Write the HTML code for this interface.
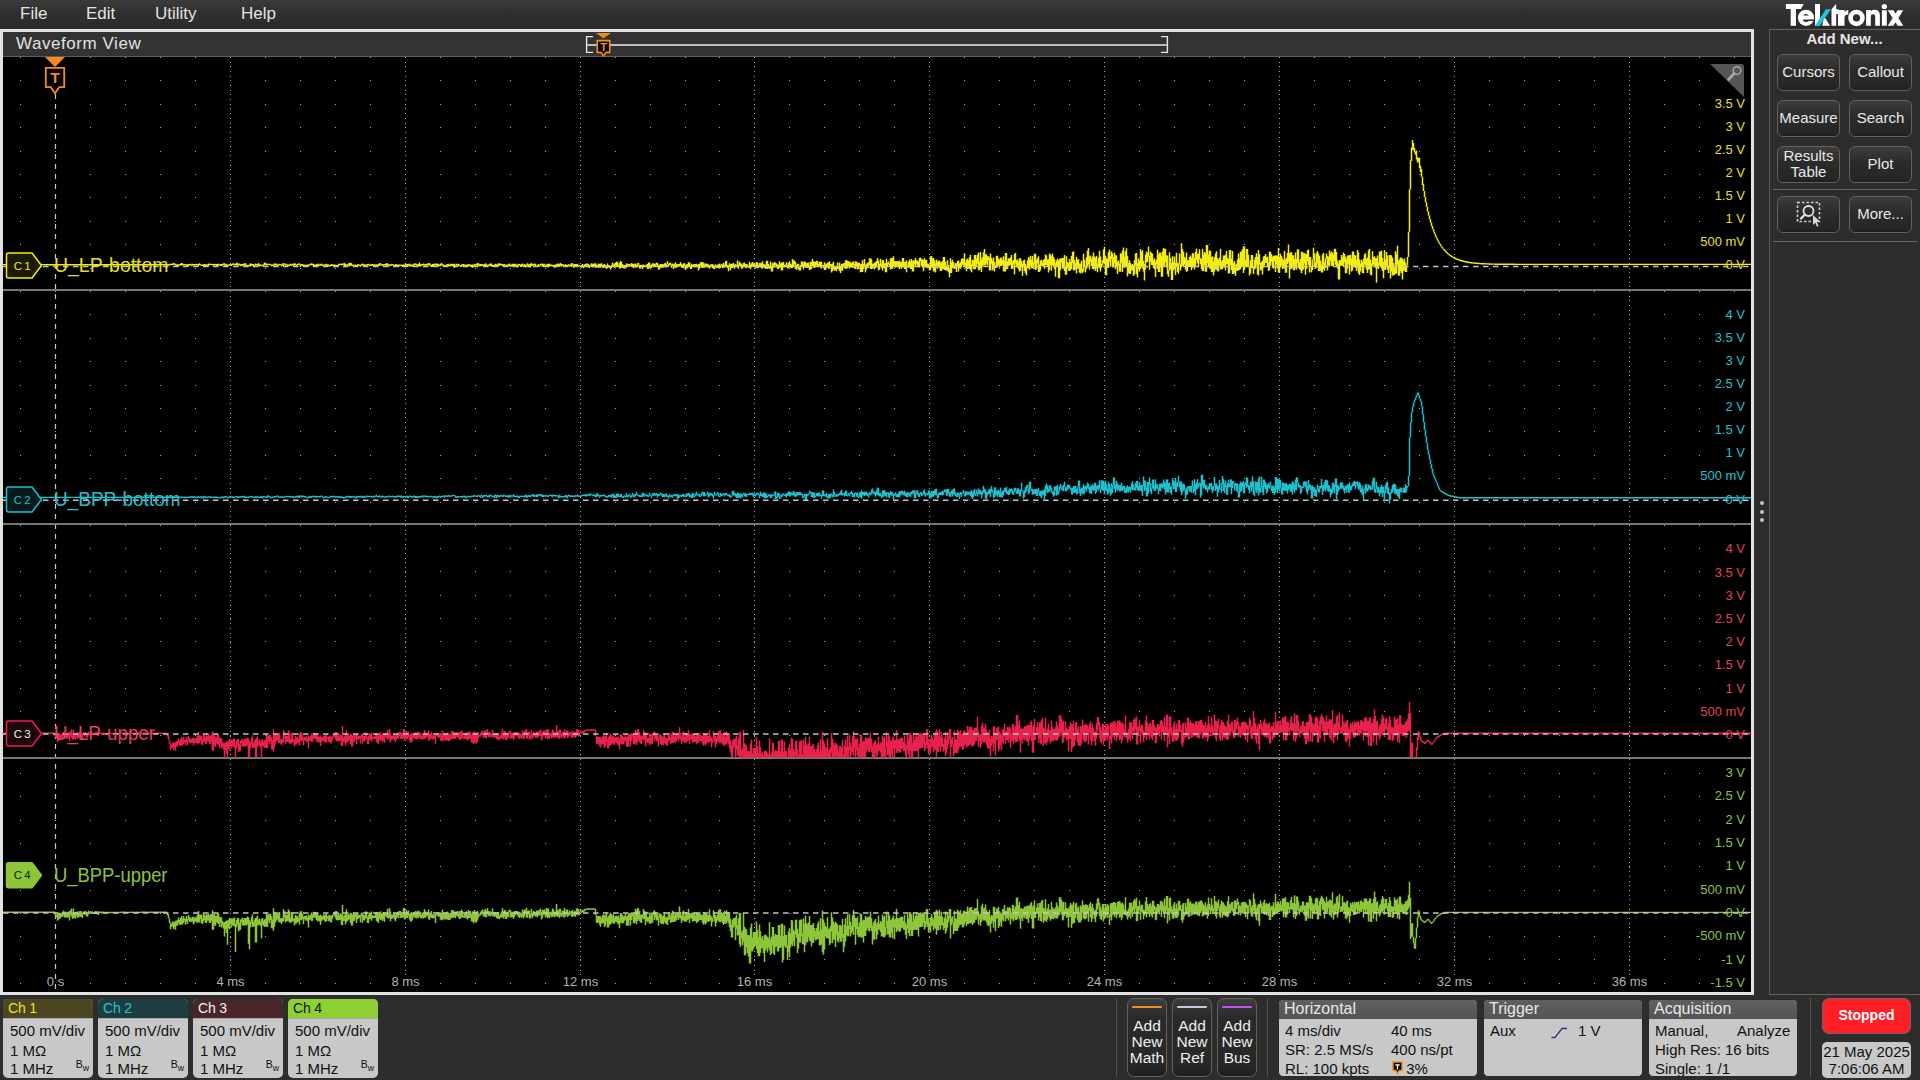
<!DOCTYPE html>
<html><head><meta charset="utf-8">
<style>
*{margin:0;padding:0;box-sizing:border-box}
html,body{width:1920px;height:1080px;overflow:hidden;background:#2d2d2d;font-family:"Liberation Sans",sans-serif}
.a{position:absolute}
.menu{color:#e4e4e4;font-size:17px;top:4px}
.frame{left:0;top:29px;width:1754px;height:966px;border:3px solid #e2e2e2;background:#333}
.hdr{left:3px;top:32px;width:1748px;height:25px;background:#333;border-bottom:1px solid #5e6064}
.title{left:16px;top:34px;color:#e0e0e0;font-size:17px;letter-spacing:0.55px}
.rpanel{left:1769px;top:29px;width:160px;height:966px;border:1px solid #6a625a;border-left-color:#5a5a5a;background:#2d2d2d}
.btn{width:63px;height:37px;border:1px solid #6a5e56;border-radius:6px;background:linear-gradient(#3c3d3f,#2c2c2c 40%,#262626 90%,#1e1e1e);color:#e8e8e8;font-size:15px;text-align:center;display:flex;align-items:center;justify-content:center;line-height:16px;padding-bottom:2px}
.sep{height:1px;background:#6e625a}
.ch{top:999px;width:90px;height:79px;border-radius:5px;background:#c8c8c8;overflow:hidden}
.chh{height:20px;padding-left:5px;font-size:14px;line-height:18px;letter-spacing:-0.2px;border-bottom:1px solid #a8a8a8}
.chb{color:#111;font-size:14.5px;padding-left:7px;line-height:19px;padding-top:0px}
.bw{position:absolute;right:4px;bottom:5px;font-size:10.5px;color:#111;line-height:10px}
.addb{top:998px;width:40px;height:79px;border:1px solid #6a5e56;border-radius:7px;background:linear-gradient(#3c3d3f,#2a2a2a 25%,#282828 85%,#1e1e1e);color:#eee;font-size:15.5px;line-height:16px;text-align:center}
.addb .bar{position:absolute;left:4px;right:4px;top:7px;height:2.2px;border-radius:1px}
.addb .t{position:absolute;left:-4px;right:-4px;top:19px}
.vsep{top:998px;width:1px;height:79px;background:#5a5048}
.pan{top:999px;height:78px;border-radius:5px;background:#c8c8c8;overflow:hidden;border:1px solid #2a2a2a}
.panh{height:18.5px;background:linear-gradient(#606062,#545456);color:#e8e8e8;font-size:16px;line-height:18px;padding-left:5px}
.panb{color:#111;font-size:15px;line-height:19px;position:relative}
</style></head><body>
<div class="a" style="left:0;top:0;width:1920px;height:29px;background:linear-gradient(#3b3b3b,#2f2f2f 45%,#2b2b2b)"></div>
<div class="a menu" style="left:20px">File</div>
<div class="a menu" style="left:86px">Edit</div>
<div class="a menu" style="left:155px">Utility</div>
<div class="a menu" style="left:241px">Help</div>

<div class="a frame"></div>
<div class="a hdr"></div>
<div class="a title">Waveform View</div>

<svg width="1920" height="1080" style="position:absolute;left:0;top:0"><rect x="3" y="57" width="1748" height="935" fill="#000"/><path d="M20 57h1v1h-1zM55 57h1v1h-1zM90 57h1v1h-1zM125 57h1v1h-1zM160 57h1v1h-1zM195 57h1v1h-1zM230 57h1v1h-1zM265 57h1v1h-1zM300 57h1v1h-1zM335 57h1v1h-1zM370 57h1v1h-1zM405 57h1v1h-1zM440 57h1v1h-1zM475 57h1v1h-1zM510 57h1v1h-1zM545 57h1v1h-1zM580 57h1v1h-1zM615 57h1v1h-1zM650 57h1v1h-1zM685 57h1v1h-1zM719 57h1v1h-1zM754 57h1v1h-1zM789 57h1v1h-1zM824 57h1v1h-1zM859 57h1v1h-1zM894 57h1v1h-1zM929 57h1v1h-1zM964 57h1v1h-1zM999 57h1v1h-1zM1034 57h1v1h-1zM1069 57h1v1h-1zM1104 57h1v1h-1zM1139 57h1v1h-1zM1174 57h1v1h-1zM1209 57h1v1h-1zM1244 57h1v1h-1zM1279 57h1v1h-1zM1314 57h1v1h-1zM1349 57h1v1h-1zM1384 57h1v1h-1zM1419 57h1v1h-1zM1454 57h1v1h-1zM1489 57h1v1h-1zM1524 57h1v1h-1zM1559 57h1v1h-1zM1594 57h1v1h-1zM1629 57h1v1h-1zM1664 57h1v1h-1zM1699 57h1v1h-1zM1734 57h1v1h-1zM20 80h1v1h-1zM55 80h1v1h-1zM90 80h1v1h-1zM125 80h1v1h-1zM160 80h1v1h-1zM195 80h1v1h-1zM230 80h1v1h-1zM265 80h1v1h-1zM300 80h1v1h-1zM335 80h1v1h-1zM370 80h1v1h-1zM405 80h1v1h-1zM440 80h1v1h-1zM475 80h1v1h-1zM510 80h1v1h-1zM545 80h1v1h-1zM580 80h1v1h-1zM615 80h1v1h-1zM650 80h1v1h-1zM685 80h1v1h-1zM719 80h1v1h-1zM754 80h1v1h-1zM789 80h1v1h-1zM824 80h1v1h-1zM859 80h1v1h-1zM894 80h1v1h-1zM929 80h1v1h-1zM964 80h1v1h-1zM999 80h1v1h-1zM1034 80h1v1h-1zM1069 80h1v1h-1zM1104 80h1v1h-1zM1139 80h1v1h-1zM1174 80h1v1h-1zM1209 80h1v1h-1zM1244 80h1v1h-1zM1279 80h1v1h-1zM1314 80h1v1h-1zM1349 80h1v1h-1zM1384 80h1v1h-1zM1419 80h1v1h-1zM1454 80h1v1h-1zM1489 80h1v1h-1zM1524 80h1v1h-1zM1559 80h1v1h-1zM1594 80h1v1h-1zM1629 80h1v1h-1zM1664 80h1v1h-1zM1699 80h1v1h-1zM20 104h1v1h-1zM55 104h1v1h-1zM90 104h1v1h-1zM125 104h1v1h-1zM160 104h1v1h-1zM195 104h1v1h-1zM230 104h1v1h-1zM265 104h1v1h-1zM300 104h1v1h-1zM335 104h1v1h-1zM370 104h1v1h-1zM405 104h1v1h-1zM440 104h1v1h-1zM475 104h1v1h-1zM510 104h1v1h-1zM545 104h1v1h-1zM580 104h1v1h-1zM615 104h1v1h-1zM650 104h1v1h-1zM685 104h1v1h-1zM719 104h1v1h-1zM754 104h1v1h-1zM789 104h1v1h-1zM824 104h1v1h-1zM859 104h1v1h-1zM894 104h1v1h-1zM929 104h1v1h-1zM964 104h1v1h-1zM999 104h1v1h-1zM1034 104h1v1h-1zM1069 104h1v1h-1zM1104 104h1v1h-1zM1139 104h1v1h-1zM1174 104h1v1h-1zM1209 104h1v1h-1zM1244 104h1v1h-1zM1279 104h1v1h-1zM1314 104h1v1h-1zM1349 104h1v1h-1zM1384 104h1v1h-1zM1419 104h1v1h-1zM1454 104h1v1h-1zM1489 104h1v1h-1zM1524 104h1v1h-1zM1559 104h1v1h-1zM1594 104h1v1h-1zM1629 104h1v1h-1zM1664 104h1v1h-1zM1699 104h1v1h-1zM20 127h1v1h-1zM55 127h1v1h-1zM90 127h1v1h-1zM125 127h1v1h-1zM160 127h1v1h-1zM195 127h1v1h-1zM230 127h1v1h-1zM265 127h1v1h-1zM300 127h1v1h-1zM335 127h1v1h-1zM370 127h1v1h-1zM405 127h1v1h-1zM440 127h1v1h-1zM475 127h1v1h-1zM510 127h1v1h-1zM545 127h1v1h-1zM580 127h1v1h-1zM615 127h1v1h-1zM650 127h1v1h-1zM685 127h1v1h-1zM719 127h1v1h-1zM754 127h1v1h-1zM789 127h1v1h-1zM824 127h1v1h-1zM859 127h1v1h-1zM894 127h1v1h-1zM929 127h1v1h-1zM964 127h1v1h-1zM999 127h1v1h-1zM1034 127h1v1h-1zM1069 127h1v1h-1zM1104 127h1v1h-1zM1139 127h1v1h-1zM1174 127h1v1h-1zM1209 127h1v1h-1zM1244 127h1v1h-1zM1279 127h1v1h-1zM1314 127h1v1h-1zM1349 127h1v1h-1zM1384 127h1v1h-1zM1419 127h1v1h-1zM1454 127h1v1h-1zM1489 127h1v1h-1zM1524 127h1v1h-1zM1559 127h1v1h-1zM1594 127h1v1h-1zM1629 127h1v1h-1zM1664 127h1v1h-1zM1699 127h1v1h-1zM20 151h1v1h-1zM55 151h1v1h-1zM90 151h1v1h-1zM125 151h1v1h-1zM160 151h1v1h-1zM195 151h1v1h-1zM230 151h1v1h-1zM265 151h1v1h-1zM300 151h1v1h-1zM335 151h1v1h-1zM370 151h1v1h-1zM405 151h1v1h-1zM440 151h1v1h-1zM475 151h1v1h-1zM510 151h1v1h-1zM545 151h1v1h-1zM580 151h1v1h-1zM615 151h1v1h-1zM650 151h1v1h-1zM685 151h1v1h-1zM719 151h1v1h-1zM754 151h1v1h-1zM789 151h1v1h-1zM824 151h1v1h-1zM859 151h1v1h-1zM894 151h1v1h-1zM929 151h1v1h-1zM964 151h1v1h-1zM999 151h1v1h-1zM1034 151h1v1h-1zM1069 151h1v1h-1zM1104 151h1v1h-1zM1139 151h1v1h-1zM1174 151h1v1h-1zM1209 151h1v1h-1zM1244 151h1v1h-1zM1279 151h1v1h-1zM1314 151h1v1h-1zM1349 151h1v1h-1zM1384 151h1v1h-1zM1419 151h1v1h-1zM1454 151h1v1h-1zM1489 151h1v1h-1zM1524 151h1v1h-1zM1559 151h1v1h-1zM1594 151h1v1h-1zM1629 151h1v1h-1zM1664 151h1v1h-1zM1699 151h1v1h-1zM20 174h1v1h-1zM55 174h1v1h-1zM90 174h1v1h-1zM125 174h1v1h-1zM160 174h1v1h-1zM195 174h1v1h-1zM230 174h1v1h-1zM265 174h1v1h-1zM300 174h1v1h-1zM335 174h1v1h-1zM370 174h1v1h-1zM405 174h1v1h-1zM440 174h1v1h-1zM475 174h1v1h-1zM510 174h1v1h-1zM545 174h1v1h-1zM580 174h1v1h-1zM615 174h1v1h-1zM650 174h1v1h-1zM685 174h1v1h-1zM719 174h1v1h-1zM754 174h1v1h-1zM789 174h1v1h-1zM824 174h1v1h-1zM859 174h1v1h-1zM894 174h1v1h-1zM929 174h1v1h-1zM964 174h1v1h-1zM999 174h1v1h-1zM1034 174h1v1h-1zM1069 174h1v1h-1zM1104 174h1v1h-1zM1139 174h1v1h-1zM1174 174h1v1h-1zM1209 174h1v1h-1zM1244 174h1v1h-1zM1279 174h1v1h-1zM1314 174h1v1h-1zM1349 174h1v1h-1zM1384 174h1v1h-1zM1419 174h1v1h-1zM1454 174h1v1h-1zM1489 174h1v1h-1zM1524 174h1v1h-1zM1559 174h1v1h-1zM1594 174h1v1h-1zM1629 174h1v1h-1zM1664 174h1v1h-1zM1699 174h1v1h-1zM20 197h1v1h-1zM55 197h1v1h-1zM90 197h1v1h-1zM125 197h1v1h-1zM160 197h1v1h-1zM195 197h1v1h-1zM230 197h1v1h-1zM265 197h1v1h-1zM300 197h1v1h-1zM335 197h1v1h-1zM370 197h1v1h-1zM405 197h1v1h-1zM440 197h1v1h-1zM475 197h1v1h-1zM510 197h1v1h-1zM545 197h1v1h-1zM580 197h1v1h-1zM615 197h1v1h-1zM650 197h1v1h-1zM685 197h1v1h-1zM719 197h1v1h-1zM754 197h1v1h-1zM789 197h1v1h-1zM824 197h1v1h-1zM859 197h1v1h-1zM894 197h1v1h-1zM929 197h1v1h-1zM964 197h1v1h-1zM999 197h1v1h-1zM1034 197h1v1h-1zM1069 197h1v1h-1zM1104 197h1v1h-1zM1139 197h1v1h-1zM1174 197h1v1h-1zM1209 197h1v1h-1zM1244 197h1v1h-1zM1279 197h1v1h-1zM1314 197h1v1h-1zM1349 197h1v1h-1zM1384 197h1v1h-1zM1419 197h1v1h-1zM1454 197h1v1h-1zM1489 197h1v1h-1zM1524 197h1v1h-1zM1559 197h1v1h-1zM1594 197h1v1h-1zM1629 197h1v1h-1zM1664 197h1v1h-1zM1699 197h1v1h-1zM20 221h1v1h-1zM55 221h1v1h-1zM90 221h1v1h-1zM125 221h1v1h-1zM160 221h1v1h-1zM195 221h1v1h-1zM230 221h1v1h-1zM265 221h1v1h-1zM300 221h1v1h-1zM335 221h1v1h-1zM370 221h1v1h-1zM405 221h1v1h-1zM440 221h1v1h-1zM475 221h1v1h-1zM510 221h1v1h-1zM545 221h1v1h-1zM580 221h1v1h-1zM615 221h1v1h-1zM650 221h1v1h-1zM685 221h1v1h-1zM719 221h1v1h-1zM754 221h1v1h-1zM789 221h1v1h-1zM824 221h1v1h-1zM859 221h1v1h-1zM894 221h1v1h-1zM929 221h1v1h-1zM964 221h1v1h-1zM999 221h1v1h-1zM1034 221h1v1h-1zM1069 221h1v1h-1zM1104 221h1v1h-1zM1139 221h1v1h-1zM1174 221h1v1h-1zM1209 221h1v1h-1zM1244 221h1v1h-1zM1279 221h1v1h-1zM1314 221h1v1h-1zM1349 221h1v1h-1zM1384 221h1v1h-1zM1419 221h1v1h-1zM1454 221h1v1h-1zM1489 221h1v1h-1zM1524 221h1v1h-1zM1559 221h1v1h-1zM1594 221h1v1h-1zM1629 221h1v1h-1zM1664 221h1v1h-1zM1699 221h1v1h-1zM20 244h1v1h-1zM55 244h1v1h-1zM90 244h1v1h-1zM125 244h1v1h-1zM160 244h1v1h-1zM195 244h1v1h-1zM230 244h1v1h-1zM265 244h1v1h-1zM300 244h1v1h-1zM335 244h1v1h-1zM370 244h1v1h-1zM405 244h1v1h-1zM440 244h1v1h-1zM475 244h1v1h-1zM510 244h1v1h-1zM545 244h1v1h-1zM580 244h1v1h-1zM615 244h1v1h-1zM650 244h1v1h-1zM685 244h1v1h-1zM719 244h1v1h-1zM754 244h1v1h-1zM789 244h1v1h-1zM824 244h1v1h-1zM859 244h1v1h-1zM894 244h1v1h-1zM929 244h1v1h-1zM964 244h1v1h-1zM999 244h1v1h-1zM1034 244h1v1h-1zM1069 244h1v1h-1zM1104 244h1v1h-1zM1139 244h1v1h-1zM1174 244h1v1h-1zM1209 244h1v1h-1zM1244 244h1v1h-1zM1279 244h1v1h-1zM1314 244h1v1h-1zM1349 244h1v1h-1zM1384 244h1v1h-1zM1419 244h1v1h-1zM1454 244h1v1h-1zM1489 244h1v1h-1zM1524 244h1v1h-1zM1559 244h1v1h-1zM1594 244h1v1h-1zM1629 244h1v1h-1zM1664 244h1v1h-1zM20 268h1v1h-1zM55 268h1v1h-1zM90 268h1v1h-1zM125 268h1v1h-1zM160 268h1v1h-1zM195 268h1v1h-1zM230 268h1v1h-1zM265 268h1v1h-1zM300 268h1v1h-1zM335 268h1v1h-1zM370 268h1v1h-1zM405 268h1v1h-1zM440 268h1v1h-1zM475 268h1v1h-1zM510 268h1v1h-1zM545 268h1v1h-1zM580 268h1v1h-1zM615 268h1v1h-1zM650 268h1v1h-1zM685 268h1v1h-1zM719 268h1v1h-1zM754 268h1v1h-1zM789 268h1v1h-1zM824 268h1v1h-1zM859 268h1v1h-1zM894 268h1v1h-1zM929 268h1v1h-1zM964 268h1v1h-1zM999 268h1v1h-1zM1034 268h1v1h-1zM1069 268h1v1h-1zM1104 268h1v1h-1zM1139 268h1v1h-1zM1174 268h1v1h-1zM1209 268h1v1h-1zM1244 268h1v1h-1zM1279 268h1v1h-1zM1314 268h1v1h-1zM1349 268h1v1h-1zM1384 268h1v1h-1zM1419 268h1v1h-1zM1454 268h1v1h-1zM1489 268h1v1h-1zM1524 268h1v1h-1zM1559 268h1v1h-1zM1594 268h1v1h-1zM1629 268h1v1h-1zM1664 268h1v1h-1zM1699 268h1v1h-1zM20 291h1v1h-1zM55 291h1v1h-1zM90 291h1v1h-1zM125 291h1v1h-1zM160 291h1v1h-1zM195 291h1v1h-1zM230 291h1v1h-1zM265 291h1v1h-1zM300 291h1v1h-1zM335 291h1v1h-1zM370 291h1v1h-1zM405 291h1v1h-1zM440 291h1v1h-1zM475 291h1v1h-1zM510 291h1v1h-1zM545 291h1v1h-1zM580 291h1v1h-1zM615 291h1v1h-1zM650 291h1v1h-1zM685 291h1v1h-1zM719 291h1v1h-1zM754 291h1v1h-1zM789 291h1v1h-1zM824 291h1v1h-1zM859 291h1v1h-1zM894 291h1v1h-1zM929 291h1v1h-1zM964 291h1v1h-1zM999 291h1v1h-1zM1034 291h1v1h-1zM1069 291h1v1h-1zM1104 291h1v1h-1zM1139 291h1v1h-1zM1174 291h1v1h-1zM1209 291h1v1h-1zM1244 291h1v1h-1zM1279 291h1v1h-1zM1314 291h1v1h-1zM1349 291h1v1h-1zM1384 291h1v1h-1zM1419 291h1v1h-1zM1454 291h1v1h-1zM1489 291h1v1h-1zM1524 291h1v1h-1zM1559 291h1v1h-1zM1594 291h1v1h-1zM1629 291h1v1h-1zM1664 291h1v1h-1zM1699 291h1v1h-1zM1734 291h1v1h-1zM20 314h1v1h-1zM55 314h1v1h-1zM90 314h1v1h-1zM125 314h1v1h-1zM160 314h1v1h-1zM195 314h1v1h-1zM230 314h1v1h-1zM265 314h1v1h-1zM300 314h1v1h-1zM335 314h1v1h-1zM370 314h1v1h-1zM405 314h1v1h-1zM440 314h1v1h-1zM475 314h1v1h-1zM510 314h1v1h-1zM545 314h1v1h-1zM580 314h1v1h-1zM615 314h1v1h-1zM650 314h1v1h-1zM685 314h1v1h-1zM719 314h1v1h-1zM754 314h1v1h-1zM789 314h1v1h-1zM824 314h1v1h-1zM859 314h1v1h-1zM894 314h1v1h-1zM929 314h1v1h-1zM964 314h1v1h-1zM999 314h1v1h-1zM1034 314h1v1h-1zM1069 314h1v1h-1zM1104 314h1v1h-1zM1139 314h1v1h-1zM1174 314h1v1h-1zM1209 314h1v1h-1zM1244 314h1v1h-1zM1279 314h1v1h-1zM1314 314h1v1h-1zM1349 314h1v1h-1zM1384 314h1v1h-1zM1419 314h1v1h-1zM1454 314h1v1h-1zM1489 314h1v1h-1zM1524 314h1v1h-1zM1559 314h1v1h-1zM1594 314h1v1h-1zM1629 314h1v1h-1zM1664 314h1v1h-1zM1699 314h1v1h-1zM20 338h1v1h-1zM55 338h1v1h-1zM90 338h1v1h-1zM125 338h1v1h-1zM160 338h1v1h-1zM195 338h1v1h-1zM230 338h1v1h-1zM265 338h1v1h-1zM300 338h1v1h-1zM335 338h1v1h-1zM370 338h1v1h-1zM405 338h1v1h-1zM440 338h1v1h-1zM475 338h1v1h-1zM510 338h1v1h-1zM545 338h1v1h-1zM580 338h1v1h-1zM615 338h1v1h-1zM650 338h1v1h-1zM685 338h1v1h-1zM719 338h1v1h-1zM754 338h1v1h-1zM789 338h1v1h-1zM824 338h1v1h-1zM859 338h1v1h-1zM894 338h1v1h-1zM929 338h1v1h-1zM964 338h1v1h-1zM999 338h1v1h-1zM1034 338h1v1h-1zM1069 338h1v1h-1zM1104 338h1v1h-1zM1139 338h1v1h-1zM1174 338h1v1h-1zM1209 338h1v1h-1zM1244 338h1v1h-1zM1279 338h1v1h-1zM1314 338h1v1h-1zM1349 338h1v1h-1zM1384 338h1v1h-1zM1419 338h1v1h-1zM1454 338h1v1h-1zM1489 338h1v1h-1zM1524 338h1v1h-1zM1559 338h1v1h-1zM1594 338h1v1h-1zM1629 338h1v1h-1zM1664 338h1v1h-1zM1699 338h1v1h-1zM20 361h1v1h-1zM55 361h1v1h-1zM90 361h1v1h-1zM125 361h1v1h-1zM160 361h1v1h-1zM195 361h1v1h-1zM230 361h1v1h-1zM265 361h1v1h-1zM300 361h1v1h-1zM335 361h1v1h-1zM370 361h1v1h-1zM405 361h1v1h-1zM440 361h1v1h-1zM475 361h1v1h-1zM510 361h1v1h-1zM545 361h1v1h-1zM580 361h1v1h-1zM615 361h1v1h-1zM650 361h1v1h-1zM685 361h1v1h-1zM719 361h1v1h-1zM754 361h1v1h-1zM789 361h1v1h-1zM824 361h1v1h-1zM859 361h1v1h-1zM894 361h1v1h-1zM929 361h1v1h-1zM964 361h1v1h-1zM999 361h1v1h-1zM1034 361h1v1h-1zM1069 361h1v1h-1zM1104 361h1v1h-1zM1139 361h1v1h-1zM1174 361h1v1h-1zM1209 361h1v1h-1zM1244 361h1v1h-1zM1279 361h1v1h-1zM1314 361h1v1h-1zM1349 361h1v1h-1zM1384 361h1v1h-1zM1419 361h1v1h-1zM1454 361h1v1h-1zM1489 361h1v1h-1zM1524 361h1v1h-1zM1559 361h1v1h-1zM1594 361h1v1h-1zM1629 361h1v1h-1zM1664 361h1v1h-1zM1699 361h1v1h-1zM20 385h1v1h-1zM55 385h1v1h-1zM90 385h1v1h-1zM125 385h1v1h-1zM160 385h1v1h-1zM195 385h1v1h-1zM230 385h1v1h-1zM265 385h1v1h-1zM300 385h1v1h-1zM335 385h1v1h-1zM370 385h1v1h-1zM405 385h1v1h-1zM440 385h1v1h-1zM475 385h1v1h-1zM510 385h1v1h-1zM545 385h1v1h-1zM580 385h1v1h-1zM615 385h1v1h-1zM650 385h1v1h-1zM685 385h1v1h-1zM719 385h1v1h-1zM754 385h1v1h-1zM789 385h1v1h-1zM824 385h1v1h-1zM859 385h1v1h-1zM894 385h1v1h-1zM929 385h1v1h-1zM964 385h1v1h-1zM999 385h1v1h-1zM1034 385h1v1h-1zM1069 385h1v1h-1zM1104 385h1v1h-1zM1139 385h1v1h-1zM1174 385h1v1h-1zM1209 385h1v1h-1zM1244 385h1v1h-1zM1279 385h1v1h-1zM1314 385h1v1h-1zM1349 385h1v1h-1zM1384 385h1v1h-1zM1419 385h1v1h-1zM1454 385h1v1h-1zM1489 385h1v1h-1zM1524 385h1v1h-1zM1559 385h1v1h-1zM1594 385h1v1h-1zM1629 385h1v1h-1zM1664 385h1v1h-1zM1699 385h1v1h-1zM20 408h1v1h-1zM55 408h1v1h-1zM90 408h1v1h-1zM125 408h1v1h-1zM160 408h1v1h-1zM195 408h1v1h-1zM230 408h1v1h-1zM265 408h1v1h-1zM300 408h1v1h-1zM335 408h1v1h-1zM370 408h1v1h-1zM405 408h1v1h-1zM440 408h1v1h-1zM475 408h1v1h-1zM510 408h1v1h-1zM545 408h1v1h-1zM580 408h1v1h-1zM615 408h1v1h-1zM650 408h1v1h-1zM685 408h1v1h-1zM719 408h1v1h-1zM754 408h1v1h-1zM789 408h1v1h-1zM824 408h1v1h-1zM859 408h1v1h-1zM894 408h1v1h-1zM929 408h1v1h-1zM964 408h1v1h-1zM999 408h1v1h-1zM1034 408h1v1h-1zM1069 408h1v1h-1zM1104 408h1v1h-1zM1139 408h1v1h-1zM1174 408h1v1h-1zM1209 408h1v1h-1zM1244 408h1v1h-1zM1279 408h1v1h-1zM1314 408h1v1h-1zM1349 408h1v1h-1zM1384 408h1v1h-1zM1419 408h1v1h-1zM1454 408h1v1h-1zM1489 408h1v1h-1zM1524 408h1v1h-1zM1559 408h1v1h-1zM1594 408h1v1h-1zM1629 408h1v1h-1zM1664 408h1v1h-1zM1699 408h1v1h-1zM20 431h1v1h-1zM55 431h1v1h-1zM90 431h1v1h-1zM125 431h1v1h-1zM160 431h1v1h-1zM195 431h1v1h-1zM230 431h1v1h-1zM265 431h1v1h-1zM300 431h1v1h-1zM335 431h1v1h-1zM370 431h1v1h-1zM405 431h1v1h-1zM440 431h1v1h-1zM475 431h1v1h-1zM510 431h1v1h-1zM545 431h1v1h-1zM580 431h1v1h-1zM615 431h1v1h-1zM650 431h1v1h-1zM685 431h1v1h-1zM719 431h1v1h-1zM754 431h1v1h-1zM789 431h1v1h-1zM824 431h1v1h-1zM859 431h1v1h-1zM894 431h1v1h-1zM929 431h1v1h-1zM964 431h1v1h-1zM999 431h1v1h-1zM1034 431h1v1h-1zM1069 431h1v1h-1zM1104 431h1v1h-1zM1139 431h1v1h-1zM1174 431h1v1h-1zM1209 431h1v1h-1zM1244 431h1v1h-1zM1279 431h1v1h-1zM1314 431h1v1h-1zM1349 431h1v1h-1zM1384 431h1v1h-1zM1419 431h1v1h-1zM1454 431h1v1h-1zM1489 431h1v1h-1zM1524 431h1v1h-1zM1559 431h1v1h-1zM1594 431h1v1h-1zM1629 431h1v1h-1zM1664 431h1v1h-1zM1699 431h1v1h-1zM20 455h1v1h-1zM55 455h1v1h-1zM90 455h1v1h-1zM125 455h1v1h-1zM160 455h1v1h-1zM195 455h1v1h-1zM230 455h1v1h-1zM265 455h1v1h-1zM300 455h1v1h-1zM335 455h1v1h-1zM370 455h1v1h-1zM405 455h1v1h-1zM440 455h1v1h-1zM475 455h1v1h-1zM510 455h1v1h-1zM545 455h1v1h-1zM580 455h1v1h-1zM615 455h1v1h-1zM650 455h1v1h-1zM685 455h1v1h-1zM719 455h1v1h-1zM754 455h1v1h-1zM789 455h1v1h-1zM824 455h1v1h-1zM859 455h1v1h-1zM894 455h1v1h-1zM929 455h1v1h-1zM964 455h1v1h-1zM999 455h1v1h-1zM1034 455h1v1h-1zM1069 455h1v1h-1zM1104 455h1v1h-1zM1139 455h1v1h-1zM1174 455h1v1h-1zM1209 455h1v1h-1zM1244 455h1v1h-1zM1279 455h1v1h-1zM1314 455h1v1h-1zM1349 455h1v1h-1zM1384 455h1v1h-1zM1419 455h1v1h-1zM1454 455h1v1h-1zM1489 455h1v1h-1zM1524 455h1v1h-1zM1559 455h1v1h-1zM1594 455h1v1h-1zM1629 455h1v1h-1zM1664 455h1v1h-1zM1699 455h1v1h-1zM20 478h1v1h-1zM55 478h1v1h-1zM90 478h1v1h-1zM125 478h1v1h-1zM160 478h1v1h-1zM195 478h1v1h-1zM230 478h1v1h-1zM265 478h1v1h-1zM300 478h1v1h-1zM335 478h1v1h-1zM370 478h1v1h-1zM405 478h1v1h-1zM440 478h1v1h-1zM475 478h1v1h-1zM510 478h1v1h-1zM545 478h1v1h-1zM580 478h1v1h-1zM615 478h1v1h-1zM650 478h1v1h-1zM685 478h1v1h-1zM719 478h1v1h-1zM754 478h1v1h-1zM789 478h1v1h-1zM824 478h1v1h-1zM859 478h1v1h-1zM894 478h1v1h-1zM929 478h1v1h-1zM964 478h1v1h-1zM999 478h1v1h-1zM1034 478h1v1h-1zM1069 478h1v1h-1zM1104 478h1v1h-1zM1139 478h1v1h-1zM1174 478h1v1h-1zM1209 478h1v1h-1zM1244 478h1v1h-1zM1279 478h1v1h-1zM1314 478h1v1h-1zM1349 478h1v1h-1zM1384 478h1v1h-1zM1419 478h1v1h-1zM1454 478h1v1h-1zM1489 478h1v1h-1zM1524 478h1v1h-1zM1559 478h1v1h-1zM1594 478h1v1h-1zM1629 478h1v1h-1zM1664 478h1v1h-1zM20 502h1v1h-1zM55 502h1v1h-1zM90 502h1v1h-1zM125 502h1v1h-1zM160 502h1v1h-1zM195 502h1v1h-1zM230 502h1v1h-1zM265 502h1v1h-1zM300 502h1v1h-1zM335 502h1v1h-1zM370 502h1v1h-1zM405 502h1v1h-1zM440 502h1v1h-1zM475 502h1v1h-1zM510 502h1v1h-1zM545 502h1v1h-1zM580 502h1v1h-1zM615 502h1v1h-1zM650 502h1v1h-1zM685 502h1v1h-1zM719 502h1v1h-1zM754 502h1v1h-1zM789 502h1v1h-1zM824 502h1v1h-1zM859 502h1v1h-1zM894 502h1v1h-1zM929 502h1v1h-1zM964 502h1v1h-1zM999 502h1v1h-1zM1034 502h1v1h-1zM1069 502h1v1h-1zM1104 502h1v1h-1zM1139 502h1v1h-1zM1174 502h1v1h-1zM1209 502h1v1h-1zM1244 502h1v1h-1zM1279 502h1v1h-1zM1314 502h1v1h-1zM1349 502h1v1h-1zM1384 502h1v1h-1zM1419 502h1v1h-1zM1454 502h1v1h-1zM1489 502h1v1h-1zM1524 502h1v1h-1zM1559 502h1v1h-1zM1594 502h1v1h-1zM1629 502h1v1h-1zM1664 502h1v1h-1zM1699 502h1v1h-1zM20 525h1v1h-1zM55 525h1v1h-1zM90 525h1v1h-1zM125 525h1v1h-1zM160 525h1v1h-1zM195 525h1v1h-1zM230 525h1v1h-1zM265 525h1v1h-1zM300 525h1v1h-1zM335 525h1v1h-1zM370 525h1v1h-1zM405 525h1v1h-1zM440 525h1v1h-1zM475 525h1v1h-1zM510 525h1v1h-1zM545 525h1v1h-1zM580 525h1v1h-1zM615 525h1v1h-1zM650 525h1v1h-1zM685 525h1v1h-1zM719 525h1v1h-1zM754 525h1v1h-1zM789 525h1v1h-1zM824 525h1v1h-1zM859 525h1v1h-1zM894 525h1v1h-1zM929 525h1v1h-1zM964 525h1v1h-1zM999 525h1v1h-1zM1034 525h1v1h-1zM1069 525h1v1h-1zM1104 525h1v1h-1zM1139 525h1v1h-1zM1174 525h1v1h-1zM1209 525h1v1h-1zM1244 525h1v1h-1zM1279 525h1v1h-1zM1314 525h1v1h-1zM1349 525h1v1h-1zM1384 525h1v1h-1zM1419 525h1v1h-1zM1454 525h1v1h-1zM1489 525h1v1h-1zM1524 525h1v1h-1zM1559 525h1v1h-1zM1594 525h1v1h-1zM1629 525h1v1h-1zM1664 525h1v1h-1zM1699 525h1v1h-1zM1734 525h1v1h-1zM20 548h1v1h-1zM55 548h1v1h-1zM90 548h1v1h-1zM125 548h1v1h-1zM160 548h1v1h-1zM195 548h1v1h-1zM230 548h1v1h-1zM265 548h1v1h-1zM300 548h1v1h-1zM335 548h1v1h-1zM370 548h1v1h-1zM405 548h1v1h-1zM440 548h1v1h-1zM475 548h1v1h-1zM510 548h1v1h-1zM545 548h1v1h-1zM580 548h1v1h-1zM615 548h1v1h-1zM650 548h1v1h-1zM685 548h1v1h-1zM719 548h1v1h-1zM754 548h1v1h-1zM789 548h1v1h-1zM824 548h1v1h-1zM859 548h1v1h-1zM894 548h1v1h-1zM929 548h1v1h-1zM964 548h1v1h-1zM999 548h1v1h-1zM1034 548h1v1h-1zM1069 548h1v1h-1zM1104 548h1v1h-1zM1139 548h1v1h-1zM1174 548h1v1h-1zM1209 548h1v1h-1zM1244 548h1v1h-1zM1279 548h1v1h-1zM1314 548h1v1h-1zM1349 548h1v1h-1zM1384 548h1v1h-1zM1419 548h1v1h-1zM1454 548h1v1h-1zM1489 548h1v1h-1zM1524 548h1v1h-1zM1559 548h1v1h-1zM1594 548h1v1h-1zM1629 548h1v1h-1zM1664 548h1v1h-1zM1699 548h1v1h-1zM20 571h1v1h-1zM55 571h1v1h-1zM90 571h1v1h-1zM125 571h1v1h-1zM160 571h1v1h-1zM195 571h1v1h-1zM230 571h1v1h-1zM265 571h1v1h-1zM300 571h1v1h-1zM335 571h1v1h-1zM370 571h1v1h-1zM405 571h1v1h-1zM440 571h1v1h-1zM475 571h1v1h-1zM510 571h1v1h-1zM545 571h1v1h-1zM580 571h1v1h-1zM615 571h1v1h-1zM650 571h1v1h-1zM685 571h1v1h-1zM719 571h1v1h-1zM754 571h1v1h-1zM789 571h1v1h-1zM824 571h1v1h-1zM859 571h1v1h-1zM894 571h1v1h-1zM929 571h1v1h-1zM964 571h1v1h-1zM999 571h1v1h-1zM1034 571h1v1h-1zM1069 571h1v1h-1zM1104 571h1v1h-1zM1139 571h1v1h-1zM1174 571h1v1h-1zM1209 571h1v1h-1zM1244 571h1v1h-1zM1279 571h1v1h-1zM1314 571h1v1h-1zM1349 571h1v1h-1zM1384 571h1v1h-1zM1419 571h1v1h-1zM1454 571h1v1h-1zM1489 571h1v1h-1zM1524 571h1v1h-1zM1559 571h1v1h-1zM1594 571h1v1h-1zM1629 571h1v1h-1zM1664 571h1v1h-1zM1699 571h1v1h-1zM20 595h1v1h-1zM55 595h1v1h-1zM90 595h1v1h-1zM125 595h1v1h-1zM160 595h1v1h-1zM195 595h1v1h-1zM230 595h1v1h-1zM265 595h1v1h-1zM300 595h1v1h-1zM335 595h1v1h-1zM370 595h1v1h-1zM405 595h1v1h-1zM440 595h1v1h-1zM475 595h1v1h-1zM510 595h1v1h-1zM545 595h1v1h-1zM580 595h1v1h-1zM615 595h1v1h-1zM650 595h1v1h-1zM685 595h1v1h-1zM719 595h1v1h-1zM754 595h1v1h-1zM789 595h1v1h-1zM824 595h1v1h-1zM859 595h1v1h-1zM894 595h1v1h-1zM929 595h1v1h-1zM964 595h1v1h-1zM999 595h1v1h-1zM1034 595h1v1h-1zM1069 595h1v1h-1zM1104 595h1v1h-1zM1139 595h1v1h-1zM1174 595h1v1h-1zM1209 595h1v1h-1zM1244 595h1v1h-1zM1279 595h1v1h-1zM1314 595h1v1h-1zM1349 595h1v1h-1zM1384 595h1v1h-1zM1419 595h1v1h-1zM1454 595h1v1h-1zM1489 595h1v1h-1zM1524 595h1v1h-1zM1559 595h1v1h-1zM1594 595h1v1h-1zM1629 595h1v1h-1zM1664 595h1v1h-1zM1699 595h1v1h-1zM20 618h1v1h-1zM55 618h1v1h-1zM90 618h1v1h-1zM125 618h1v1h-1zM160 618h1v1h-1zM195 618h1v1h-1zM230 618h1v1h-1zM265 618h1v1h-1zM300 618h1v1h-1zM335 618h1v1h-1zM370 618h1v1h-1zM405 618h1v1h-1zM440 618h1v1h-1zM475 618h1v1h-1zM510 618h1v1h-1zM545 618h1v1h-1zM580 618h1v1h-1zM615 618h1v1h-1zM650 618h1v1h-1zM685 618h1v1h-1zM719 618h1v1h-1zM754 618h1v1h-1zM789 618h1v1h-1zM824 618h1v1h-1zM859 618h1v1h-1zM894 618h1v1h-1zM929 618h1v1h-1zM964 618h1v1h-1zM999 618h1v1h-1zM1034 618h1v1h-1zM1069 618h1v1h-1zM1104 618h1v1h-1zM1139 618h1v1h-1zM1174 618h1v1h-1zM1209 618h1v1h-1zM1244 618h1v1h-1zM1279 618h1v1h-1zM1314 618h1v1h-1zM1349 618h1v1h-1zM1384 618h1v1h-1zM1419 618h1v1h-1zM1454 618h1v1h-1zM1489 618h1v1h-1zM1524 618h1v1h-1zM1559 618h1v1h-1zM1594 618h1v1h-1zM1629 618h1v1h-1zM1664 618h1v1h-1zM1699 618h1v1h-1zM20 641h1v1h-1zM55 641h1v1h-1zM90 641h1v1h-1zM125 641h1v1h-1zM160 641h1v1h-1zM195 641h1v1h-1zM230 641h1v1h-1zM265 641h1v1h-1zM300 641h1v1h-1zM335 641h1v1h-1zM370 641h1v1h-1zM405 641h1v1h-1zM440 641h1v1h-1zM475 641h1v1h-1zM510 641h1v1h-1zM545 641h1v1h-1zM580 641h1v1h-1zM615 641h1v1h-1zM650 641h1v1h-1zM685 641h1v1h-1zM719 641h1v1h-1zM754 641h1v1h-1zM789 641h1v1h-1zM824 641h1v1h-1zM859 641h1v1h-1zM894 641h1v1h-1zM929 641h1v1h-1zM964 641h1v1h-1zM999 641h1v1h-1zM1034 641h1v1h-1zM1069 641h1v1h-1zM1104 641h1v1h-1zM1139 641h1v1h-1zM1174 641h1v1h-1zM1209 641h1v1h-1zM1244 641h1v1h-1zM1279 641h1v1h-1zM1314 641h1v1h-1zM1349 641h1v1h-1zM1384 641h1v1h-1zM1419 641h1v1h-1zM1454 641h1v1h-1zM1489 641h1v1h-1zM1524 641h1v1h-1zM1559 641h1v1h-1zM1594 641h1v1h-1zM1629 641h1v1h-1zM1664 641h1v1h-1zM1699 641h1v1h-1zM20 665h1v1h-1zM55 665h1v1h-1zM90 665h1v1h-1zM125 665h1v1h-1zM160 665h1v1h-1zM195 665h1v1h-1zM230 665h1v1h-1zM265 665h1v1h-1zM300 665h1v1h-1zM335 665h1v1h-1zM370 665h1v1h-1zM405 665h1v1h-1zM440 665h1v1h-1zM475 665h1v1h-1zM510 665h1v1h-1zM545 665h1v1h-1zM580 665h1v1h-1zM615 665h1v1h-1zM650 665h1v1h-1zM685 665h1v1h-1zM719 665h1v1h-1zM754 665h1v1h-1zM789 665h1v1h-1zM824 665h1v1h-1zM859 665h1v1h-1zM894 665h1v1h-1zM929 665h1v1h-1zM964 665h1v1h-1zM999 665h1v1h-1zM1034 665h1v1h-1zM1069 665h1v1h-1zM1104 665h1v1h-1zM1139 665h1v1h-1zM1174 665h1v1h-1zM1209 665h1v1h-1zM1244 665h1v1h-1zM1279 665h1v1h-1zM1314 665h1v1h-1zM1349 665h1v1h-1zM1384 665h1v1h-1zM1419 665h1v1h-1zM1454 665h1v1h-1zM1489 665h1v1h-1zM1524 665h1v1h-1zM1559 665h1v1h-1zM1594 665h1v1h-1zM1629 665h1v1h-1zM1664 665h1v1h-1zM1699 665h1v1h-1zM20 688h1v1h-1zM55 688h1v1h-1zM90 688h1v1h-1zM125 688h1v1h-1zM160 688h1v1h-1zM195 688h1v1h-1zM230 688h1v1h-1zM265 688h1v1h-1zM300 688h1v1h-1zM335 688h1v1h-1zM370 688h1v1h-1zM405 688h1v1h-1zM440 688h1v1h-1zM475 688h1v1h-1zM510 688h1v1h-1zM545 688h1v1h-1zM580 688h1v1h-1zM615 688h1v1h-1zM650 688h1v1h-1zM685 688h1v1h-1zM719 688h1v1h-1zM754 688h1v1h-1zM789 688h1v1h-1zM824 688h1v1h-1zM859 688h1v1h-1zM894 688h1v1h-1zM929 688h1v1h-1zM964 688h1v1h-1zM999 688h1v1h-1zM1034 688h1v1h-1zM1069 688h1v1h-1zM1104 688h1v1h-1zM1139 688h1v1h-1zM1174 688h1v1h-1zM1209 688h1v1h-1zM1244 688h1v1h-1zM1279 688h1v1h-1zM1314 688h1v1h-1zM1349 688h1v1h-1zM1384 688h1v1h-1zM1419 688h1v1h-1zM1454 688h1v1h-1zM1489 688h1v1h-1zM1524 688h1v1h-1zM1559 688h1v1h-1zM1594 688h1v1h-1zM1629 688h1v1h-1zM1664 688h1v1h-1zM1699 688h1v1h-1zM20 711h1v1h-1zM55 711h1v1h-1zM90 711h1v1h-1zM125 711h1v1h-1zM160 711h1v1h-1zM195 711h1v1h-1zM230 711h1v1h-1zM265 711h1v1h-1zM300 711h1v1h-1zM335 711h1v1h-1zM370 711h1v1h-1zM405 711h1v1h-1zM440 711h1v1h-1zM475 711h1v1h-1zM510 711h1v1h-1zM545 711h1v1h-1zM580 711h1v1h-1zM615 711h1v1h-1zM650 711h1v1h-1zM685 711h1v1h-1zM719 711h1v1h-1zM754 711h1v1h-1zM789 711h1v1h-1zM824 711h1v1h-1zM859 711h1v1h-1zM894 711h1v1h-1zM929 711h1v1h-1zM964 711h1v1h-1zM999 711h1v1h-1zM1034 711h1v1h-1zM1069 711h1v1h-1zM1104 711h1v1h-1zM1139 711h1v1h-1zM1174 711h1v1h-1zM1209 711h1v1h-1zM1244 711h1v1h-1zM1279 711h1v1h-1zM1314 711h1v1h-1zM1349 711h1v1h-1zM1384 711h1v1h-1zM1419 711h1v1h-1zM1454 711h1v1h-1zM1489 711h1v1h-1zM1524 711h1v1h-1zM1559 711h1v1h-1zM1594 711h1v1h-1zM1629 711h1v1h-1zM1664 711h1v1h-1zM20 735h1v1h-1zM55 735h1v1h-1zM90 735h1v1h-1zM125 735h1v1h-1zM160 735h1v1h-1zM195 735h1v1h-1zM230 735h1v1h-1zM265 735h1v1h-1zM300 735h1v1h-1zM335 735h1v1h-1zM370 735h1v1h-1zM405 735h1v1h-1zM440 735h1v1h-1zM475 735h1v1h-1zM510 735h1v1h-1zM545 735h1v1h-1zM580 735h1v1h-1zM615 735h1v1h-1zM650 735h1v1h-1zM685 735h1v1h-1zM719 735h1v1h-1zM754 735h1v1h-1zM789 735h1v1h-1zM824 735h1v1h-1zM859 735h1v1h-1zM894 735h1v1h-1zM929 735h1v1h-1zM964 735h1v1h-1zM999 735h1v1h-1zM1034 735h1v1h-1zM1069 735h1v1h-1zM1104 735h1v1h-1zM1139 735h1v1h-1zM1174 735h1v1h-1zM1209 735h1v1h-1zM1244 735h1v1h-1zM1279 735h1v1h-1zM1314 735h1v1h-1zM1349 735h1v1h-1zM1384 735h1v1h-1zM1419 735h1v1h-1zM1454 735h1v1h-1zM1489 735h1v1h-1zM1524 735h1v1h-1zM1559 735h1v1h-1zM1594 735h1v1h-1zM1629 735h1v1h-1zM1664 735h1v1h-1zM1699 735h1v1h-1zM20 773h1v1h-1zM55 773h1v1h-1zM90 773h1v1h-1zM125 773h1v1h-1zM160 773h1v1h-1zM195 773h1v1h-1zM230 773h1v1h-1zM265 773h1v1h-1zM300 773h1v1h-1zM335 773h1v1h-1zM370 773h1v1h-1zM405 773h1v1h-1zM440 773h1v1h-1zM475 773h1v1h-1zM510 773h1v1h-1zM545 773h1v1h-1zM580 773h1v1h-1zM615 773h1v1h-1zM650 773h1v1h-1zM685 773h1v1h-1zM719 773h1v1h-1zM754 773h1v1h-1zM789 773h1v1h-1zM824 773h1v1h-1zM859 773h1v1h-1zM894 773h1v1h-1zM929 773h1v1h-1zM964 773h1v1h-1zM999 773h1v1h-1zM1034 773h1v1h-1zM1069 773h1v1h-1zM1104 773h1v1h-1zM1139 773h1v1h-1zM1174 773h1v1h-1zM1209 773h1v1h-1zM1244 773h1v1h-1zM1279 773h1v1h-1zM1314 773h1v1h-1zM1349 773h1v1h-1zM1384 773h1v1h-1zM1419 773h1v1h-1zM1454 773h1v1h-1zM1489 773h1v1h-1zM1524 773h1v1h-1zM1559 773h1v1h-1zM1594 773h1v1h-1zM1629 773h1v1h-1zM1664 773h1v1h-1zM1699 773h1v1h-1zM20 796h1v1h-1zM55 796h1v1h-1zM90 796h1v1h-1zM125 796h1v1h-1zM160 796h1v1h-1zM195 796h1v1h-1zM230 796h1v1h-1zM265 796h1v1h-1zM300 796h1v1h-1zM335 796h1v1h-1zM370 796h1v1h-1zM405 796h1v1h-1zM440 796h1v1h-1zM475 796h1v1h-1zM510 796h1v1h-1zM545 796h1v1h-1zM580 796h1v1h-1zM615 796h1v1h-1zM650 796h1v1h-1zM685 796h1v1h-1zM719 796h1v1h-1zM754 796h1v1h-1zM789 796h1v1h-1zM824 796h1v1h-1zM859 796h1v1h-1zM894 796h1v1h-1zM929 796h1v1h-1zM964 796h1v1h-1zM999 796h1v1h-1zM1034 796h1v1h-1zM1069 796h1v1h-1zM1104 796h1v1h-1zM1139 796h1v1h-1zM1174 796h1v1h-1zM1209 796h1v1h-1zM1244 796h1v1h-1zM1279 796h1v1h-1zM1314 796h1v1h-1zM1349 796h1v1h-1zM1384 796h1v1h-1zM1419 796h1v1h-1zM1454 796h1v1h-1zM1489 796h1v1h-1zM1524 796h1v1h-1zM1559 796h1v1h-1zM1594 796h1v1h-1zM1629 796h1v1h-1zM1664 796h1v1h-1zM1699 796h1v1h-1zM20 820h1v1h-1zM55 820h1v1h-1zM90 820h1v1h-1zM125 820h1v1h-1zM160 820h1v1h-1zM195 820h1v1h-1zM230 820h1v1h-1zM265 820h1v1h-1zM300 820h1v1h-1zM335 820h1v1h-1zM370 820h1v1h-1zM405 820h1v1h-1zM440 820h1v1h-1zM475 820h1v1h-1zM510 820h1v1h-1zM545 820h1v1h-1zM580 820h1v1h-1zM615 820h1v1h-1zM650 820h1v1h-1zM685 820h1v1h-1zM719 820h1v1h-1zM754 820h1v1h-1zM789 820h1v1h-1zM824 820h1v1h-1zM859 820h1v1h-1zM894 820h1v1h-1zM929 820h1v1h-1zM964 820h1v1h-1zM999 820h1v1h-1zM1034 820h1v1h-1zM1069 820h1v1h-1zM1104 820h1v1h-1zM1139 820h1v1h-1zM1174 820h1v1h-1zM1209 820h1v1h-1zM1244 820h1v1h-1zM1279 820h1v1h-1zM1314 820h1v1h-1zM1349 820h1v1h-1zM1384 820h1v1h-1zM1419 820h1v1h-1zM1454 820h1v1h-1zM1489 820h1v1h-1zM1524 820h1v1h-1zM1559 820h1v1h-1zM1594 820h1v1h-1zM1629 820h1v1h-1zM1664 820h1v1h-1zM1699 820h1v1h-1zM20 843h1v1h-1zM55 843h1v1h-1zM90 843h1v1h-1zM125 843h1v1h-1zM160 843h1v1h-1zM195 843h1v1h-1zM230 843h1v1h-1zM265 843h1v1h-1zM300 843h1v1h-1zM335 843h1v1h-1zM370 843h1v1h-1zM405 843h1v1h-1zM440 843h1v1h-1zM475 843h1v1h-1zM510 843h1v1h-1zM545 843h1v1h-1zM580 843h1v1h-1zM615 843h1v1h-1zM650 843h1v1h-1zM685 843h1v1h-1zM719 843h1v1h-1zM754 843h1v1h-1zM789 843h1v1h-1zM824 843h1v1h-1zM859 843h1v1h-1zM894 843h1v1h-1zM929 843h1v1h-1zM964 843h1v1h-1zM999 843h1v1h-1zM1034 843h1v1h-1zM1069 843h1v1h-1zM1104 843h1v1h-1zM1139 843h1v1h-1zM1174 843h1v1h-1zM1209 843h1v1h-1zM1244 843h1v1h-1zM1279 843h1v1h-1zM1314 843h1v1h-1zM1349 843h1v1h-1zM1384 843h1v1h-1zM1419 843h1v1h-1zM1454 843h1v1h-1zM1489 843h1v1h-1zM1524 843h1v1h-1zM1559 843h1v1h-1zM1594 843h1v1h-1zM1629 843h1v1h-1zM1664 843h1v1h-1zM1699 843h1v1h-1zM20 866h1v1h-1zM55 866h1v1h-1zM90 866h1v1h-1zM125 866h1v1h-1zM160 866h1v1h-1zM195 866h1v1h-1zM230 866h1v1h-1zM265 866h1v1h-1zM300 866h1v1h-1zM335 866h1v1h-1zM370 866h1v1h-1zM405 866h1v1h-1zM440 866h1v1h-1zM475 866h1v1h-1zM510 866h1v1h-1zM545 866h1v1h-1zM580 866h1v1h-1zM615 866h1v1h-1zM650 866h1v1h-1zM685 866h1v1h-1zM719 866h1v1h-1zM754 866h1v1h-1zM789 866h1v1h-1zM824 866h1v1h-1zM859 866h1v1h-1zM894 866h1v1h-1zM929 866h1v1h-1zM964 866h1v1h-1zM999 866h1v1h-1zM1034 866h1v1h-1zM1069 866h1v1h-1zM1104 866h1v1h-1zM1139 866h1v1h-1zM1174 866h1v1h-1zM1209 866h1v1h-1zM1244 866h1v1h-1zM1279 866h1v1h-1zM1314 866h1v1h-1zM1349 866h1v1h-1zM1384 866h1v1h-1zM1419 866h1v1h-1zM1454 866h1v1h-1zM1489 866h1v1h-1zM1524 866h1v1h-1zM1559 866h1v1h-1zM1594 866h1v1h-1zM1629 866h1v1h-1zM1664 866h1v1h-1zM1699 866h1v1h-1zM20 890h1v1h-1zM55 890h1v1h-1zM90 890h1v1h-1zM125 890h1v1h-1zM160 890h1v1h-1zM195 890h1v1h-1zM230 890h1v1h-1zM265 890h1v1h-1zM300 890h1v1h-1zM335 890h1v1h-1zM370 890h1v1h-1zM405 890h1v1h-1zM440 890h1v1h-1zM475 890h1v1h-1zM510 890h1v1h-1zM545 890h1v1h-1zM580 890h1v1h-1zM615 890h1v1h-1zM650 890h1v1h-1zM685 890h1v1h-1zM719 890h1v1h-1zM754 890h1v1h-1zM789 890h1v1h-1zM824 890h1v1h-1zM859 890h1v1h-1zM894 890h1v1h-1zM929 890h1v1h-1zM964 890h1v1h-1zM999 890h1v1h-1zM1034 890h1v1h-1zM1069 890h1v1h-1zM1104 890h1v1h-1zM1139 890h1v1h-1zM1174 890h1v1h-1zM1209 890h1v1h-1zM1244 890h1v1h-1zM1279 890h1v1h-1zM1314 890h1v1h-1zM1349 890h1v1h-1zM1384 890h1v1h-1zM1419 890h1v1h-1zM1454 890h1v1h-1zM1489 890h1v1h-1zM1524 890h1v1h-1zM1559 890h1v1h-1zM1594 890h1v1h-1zM1629 890h1v1h-1zM1664 890h1v1h-1zM20 913h1v1h-1zM55 913h1v1h-1zM90 913h1v1h-1zM125 913h1v1h-1zM160 913h1v1h-1zM195 913h1v1h-1zM230 913h1v1h-1zM265 913h1v1h-1zM300 913h1v1h-1zM335 913h1v1h-1zM370 913h1v1h-1zM405 913h1v1h-1zM440 913h1v1h-1zM475 913h1v1h-1zM510 913h1v1h-1zM545 913h1v1h-1zM580 913h1v1h-1zM615 913h1v1h-1zM650 913h1v1h-1zM685 913h1v1h-1zM719 913h1v1h-1zM754 913h1v1h-1zM789 913h1v1h-1zM824 913h1v1h-1zM859 913h1v1h-1zM894 913h1v1h-1zM929 913h1v1h-1zM964 913h1v1h-1zM999 913h1v1h-1zM1034 913h1v1h-1zM1069 913h1v1h-1zM1104 913h1v1h-1zM1139 913h1v1h-1zM1174 913h1v1h-1zM1209 913h1v1h-1zM1244 913h1v1h-1zM1279 913h1v1h-1zM1314 913h1v1h-1zM1349 913h1v1h-1zM1384 913h1v1h-1zM1419 913h1v1h-1zM1454 913h1v1h-1zM1489 913h1v1h-1zM1524 913h1v1h-1zM1559 913h1v1h-1zM1594 913h1v1h-1zM1629 913h1v1h-1zM1664 913h1v1h-1zM1699 913h1v1h-1zM20 936h1v1h-1zM55 936h1v1h-1zM90 936h1v1h-1zM125 936h1v1h-1zM160 936h1v1h-1zM195 936h1v1h-1zM230 936h1v1h-1zM265 936h1v1h-1zM300 936h1v1h-1zM335 936h1v1h-1zM370 936h1v1h-1zM405 936h1v1h-1zM440 936h1v1h-1zM475 936h1v1h-1zM510 936h1v1h-1zM545 936h1v1h-1zM580 936h1v1h-1zM615 936h1v1h-1zM650 936h1v1h-1zM685 936h1v1h-1zM719 936h1v1h-1zM754 936h1v1h-1zM789 936h1v1h-1zM824 936h1v1h-1zM859 936h1v1h-1zM894 936h1v1h-1zM929 936h1v1h-1zM964 936h1v1h-1zM999 936h1v1h-1zM1034 936h1v1h-1zM1069 936h1v1h-1zM1104 936h1v1h-1zM1139 936h1v1h-1zM1174 936h1v1h-1zM1209 936h1v1h-1zM1244 936h1v1h-1zM1279 936h1v1h-1zM1314 936h1v1h-1zM1349 936h1v1h-1zM1384 936h1v1h-1zM1419 936h1v1h-1zM1454 936h1v1h-1zM1489 936h1v1h-1zM1524 936h1v1h-1zM1559 936h1v1h-1zM1594 936h1v1h-1zM1629 936h1v1h-1zM1664 936h1v1h-1zM20 959h1v1h-1zM55 959h1v1h-1zM90 959h1v1h-1zM125 959h1v1h-1zM160 959h1v1h-1zM195 959h1v1h-1zM230 959h1v1h-1zM265 959h1v1h-1zM300 959h1v1h-1zM335 959h1v1h-1zM370 959h1v1h-1zM405 959h1v1h-1zM440 959h1v1h-1zM475 959h1v1h-1zM510 959h1v1h-1zM545 959h1v1h-1zM580 959h1v1h-1zM615 959h1v1h-1zM650 959h1v1h-1zM685 959h1v1h-1zM719 959h1v1h-1zM754 959h1v1h-1zM789 959h1v1h-1zM824 959h1v1h-1zM859 959h1v1h-1zM894 959h1v1h-1zM929 959h1v1h-1zM964 959h1v1h-1zM999 959h1v1h-1zM1034 959h1v1h-1zM1069 959h1v1h-1zM1104 959h1v1h-1zM1139 959h1v1h-1zM1174 959h1v1h-1zM1209 959h1v1h-1zM1244 959h1v1h-1zM1279 959h1v1h-1zM1314 959h1v1h-1zM1349 959h1v1h-1zM1384 959h1v1h-1zM1419 959h1v1h-1zM1454 959h1v1h-1zM1489 959h1v1h-1zM1524 959h1v1h-1zM1559 959h1v1h-1zM1594 959h1v1h-1zM1629 959h1v1h-1zM1664 959h1v1h-1zM1699 959h1v1h-1zM20 983h1v1h-1zM90 983h1v1h-1zM125 983h1v1h-1zM160 983h1v1h-1zM195 983h1v1h-1zM265 983h1v1h-1zM300 983h1v1h-1zM335 983h1v1h-1zM370 983h1v1h-1zM440 983h1v1h-1zM475 983h1v1h-1zM510 983h1v1h-1zM545 983h1v1h-1zM615 983h1v1h-1zM650 983h1v1h-1zM685 983h1v1h-1zM719 983h1v1h-1zM789 983h1v1h-1zM824 983h1v1h-1zM859 983h1v1h-1zM894 983h1v1h-1zM964 983h1v1h-1zM999 983h1v1h-1zM1034 983h1v1h-1zM1069 983h1v1h-1zM1139 983h1v1h-1zM1174 983h1v1h-1zM1209 983h1v1h-1zM1244 983h1v1h-1zM1314 983h1v1h-1zM1349 983h1v1h-1zM1384 983h1v1h-1zM1419 983h1v1h-1zM1489 983h1v1h-1zM1524 983h1v1h-1zM1559 983h1v1h-1zM1594 983h1v1h-1zM1664 983h1v1h-1zM1699 983h1v1h-1z" fill="#a8a8a8"/>
<path d="M230 57h1v1h-1zM230 62h1v1h-1zM230 66h1v1h-1zM230 71h1v1h-1zM230 76h1v1h-1zM230 80h1v1h-1zM230 85h1v1h-1zM230 90h1v1h-1zM230 94h1v1h-1zM230 99h1v1h-1zM230 104h1v1h-1zM230 108h1v1h-1zM230 113h1v1h-1zM230 118h1v1h-1zM230 123h1v1h-1zM230 127h1v1h-1zM230 132h1v1h-1zM230 137h1v1h-1zM230 141h1v1h-1zM230 146h1v1h-1zM230 151h1v1h-1zM230 155h1v1h-1zM230 160h1v1h-1zM230 165h1v1h-1zM230 169h1v1h-1zM230 174h1v1h-1zM230 179h1v1h-1zM230 183h1v1h-1zM230 188h1v1h-1zM230 193h1v1h-1zM230 197h1v1h-1zM230 202h1v1h-1zM230 207h1v1h-1zM230 211h1v1h-1zM230 216h1v1h-1zM230 221h1v1h-1zM230 225h1v1h-1zM230 230h1v1h-1zM230 235h1v1h-1zM230 240h1v1h-1zM230 244h1v1h-1zM230 249h1v1h-1zM230 254h1v1h-1zM230 258h1v1h-1zM230 263h1v1h-1zM230 268h1v1h-1zM230 272h1v1h-1zM230 277h1v1h-1zM230 282h1v1h-1zM230 286h1v1h-1zM230 291h1v1h-1zM230 296h1v1h-1zM230 300h1v1h-1zM230 305h1v1h-1zM230 310h1v1h-1zM230 314h1v1h-1zM230 319h1v1h-1zM230 324h1v1h-1zM230 328h1v1h-1zM230 333h1v1h-1zM230 338h1v1h-1zM230 342h1v1h-1zM230 347h1v1h-1zM230 352h1v1h-1zM230 357h1v1h-1zM230 361h1v1h-1zM230 366h1v1h-1zM230 371h1v1h-1zM230 375h1v1h-1zM230 380h1v1h-1zM230 385h1v1h-1zM230 389h1v1h-1zM230 394h1v1h-1zM230 399h1v1h-1zM230 403h1v1h-1zM230 408h1v1h-1zM230 413h1v1h-1zM230 417h1v1h-1zM230 422h1v1h-1zM230 427h1v1h-1zM230 431h1v1h-1zM230 436h1v1h-1zM230 441h1v1h-1zM230 445h1v1h-1zM230 450h1v1h-1zM230 455h1v1h-1zM230 459h1v1h-1zM230 464h1v1h-1zM230 469h1v1h-1zM230 474h1v1h-1zM230 478h1v1h-1zM230 483h1v1h-1zM230 488h1v1h-1zM230 492h1v1h-1zM230 497h1v1h-1zM230 502h1v1h-1zM230 506h1v1h-1zM230 511h1v1h-1zM230 516h1v1h-1zM230 520h1v1h-1zM230 525h1v1h-1zM230 530h1v1h-1zM230 534h1v1h-1zM230 539h1v1h-1zM230 544h1v1h-1zM230 548h1v1h-1zM230 553h1v1h-1zM230 558h1v1h-1zM230 562h1v1h-1zM230 567h1v1h-1zM230 572h1v1h-1zM230 576h1v1h-1zM230 581h1v1h-1zM230 586h1v1h-1zM230 591h1v1h-1zM230 595h1v1h-1zM230 600h1v1h-1zM230 605h1v1h-1zM230 609h1v1h-1zM230 614h1v1h-1zM230 619h1v1h-1zM230 623h1v1h-1zM230 628h1v1h-1zM230 633h1v1h-1zM230 637h1v1h-1zM230 642h1v1h-1zM230 647h1v1h-1zM230 651h1v1h-1zM230 656h1v1h-1zM230 661h1v1h-1zM230 665h1v1h-1zM230 670h1v1h-1zM230 675h1v1h-1zM230 679h1v1h-1zM230 684h1v1h-1zM230 689h1v1h-1zM230 693h1v1h-1zM230 698h1v1h-1zM230 703h1v1h-1zM230 708h1v1h-1zM230 712h1v1h-1zM230 717h1v1h-1zM230 722h1v1h-1zM230 726h1v1h-1zM230 731h1v1h-1zM230 736h1v1h-1zM230 740h1v1h-1zM230 745h1v1h-1zM230 750h1v1h-1zM230 754h1v1h-1zM230 759h1v1h-1zM230 764h1v1h-1zM230 768h1v1h-1zM230 773h1v1h-1zM230 778h1v1h-1zM230 782h1v1h-1zM230 787h1v1h-1zM230 792h1v1h-1zM230 796h1v1h-1zM230 801h1v1h-1zM230 806h1v1h-1zM230 810h1v1h-1zM230 815h1v1h-1zM230 820h1v1h-1zM230 825h1v1h-1zM230 829h1v1h-1zM230 834h1v1h-1zM230 839h1v1h-1zM230 843h1v1h-1zM230 848h1v1h-1zM230 853h1v1h-1zM230 857h1v1h-1zM230 862h1v1h-1zM230 867h1v1h-1zM230 871h1v1h-1zM230 876h1v1h-1zM230 881h1v1h-1zM230 885h1v1h-1zM230 890h1v1h-1zM230 895h1v1h-1zM230 899h1v1h-1zM230 904h1v1h-1zM230 909h1v1h-1zM230 913h1v1h-1zM230 918h1v1h-1zM230 923h1v1h-1zM230 927h1v1h-1zM230 932h1v1h-1zM230 937h1v1h-1zM230 942h1v1h-1zM230 946h1v1h-1zM230 951h1v1h-1zM230 956h1v1h-1zM230 960h1v1h-1zM230 965h1v1h-1zM230 970h1v1h-1zM230 974h1v1h-1zM405 57h1v1h-1zM405 62h1v1h-1zM405 66h1v1h-1zM405 71h1v1h-1zM405 76h1v1h-1zM405 80h1v1h-1zM405 85h1v1h-1zM405 90h1v1h-1zM405 94h1v1h-1zM405 99h1v1h-1zM405 104h1v1h-1zM405 108h1v1h-1zM405 113h1v1h-1zM405 118h1v1h-1zM405 123h1v1h-1zM405 127h1v1h-1zM405 132h1v1h-1zM405 137h1v1h-1zM405 141h1v1h-1zM405 146h1v1h-1zM405 151h1v1h-1zM405 155h1v1h-1zM405 160h1v1h-1zM405 165h1v1h-1zM405 169h1v1h-1zM405 174h1v1h-1zM405 179h1v1h-1zM405 183h1v1h-1zM405 188h1v1h-1zM405 193h1v1h-1zM405 197h1v1h-1zM405 202h1v1h-1zM405 207h1v1h-1zM405 211h1v1h-1zM405 216h1v1h-1zM405 221h1v1h-1zM405 225h1v1h-1zM405 230h1v1h-1zM405 235h1v1h-1zM405 240h1v1h-1zM405 244h1v1h-1zM405 249h1v1h-1zM405 254h1v1h-1zM405 258h1v1h-1zM405 263h1v1h-1zM405 268h1v1h-1zM405 272h1v1h-1zM405 277h1v1h-1zM405 282h1v1h-1zM405 286h1v1h-1zM405 291h1v1h-1zM405 296h1v1h-1zM405 300h1v1h-1zM405 305h1v1h-1zM405 310h1v1h-1zM405 314h1v1h-1zM405 319h1v1h-1zM405 324h1v1h-1zM405 328h1v1h-1zM405 333h1v1h-1zM405 338h1v1h-1zM405 342h1v1h-1zM405 347h1v1h-1zM405 352h1v1h-1zM405 357h1v1h-1zM405 361h1v1h-1zM405 366h1v1h-1zM405 371h1v1h-1zM405 375h1v1h-1zM405 380h1v1h-1zM405 385h1v1h-1zM405 389h1v1h-1zM405 394h1v1h-1zM405 399h1v1h-1zM405 403h1v1h-1zM405 408h1v1h-1zM405 413h1v1h-1zM405 417h1v1h-1zM405 422h1v1h-1zM405 427h1v1h-1zM405 431h1v1h-1zM405 436h1v1h-1zM405 441h1v1h-1zM405 445h1v1h-1zM405 450h1v1h-1zM405 455h1v1h-1zM405 459h1v1h-1zM405 464h1v1h-1zM405 469h1v1h-1zM405 474h1v1h-1zM405 478h1v1h-1zM405 483h1v1h-1zM405 488h1v1h-1zM405 492h1v1h-1zM405 497h1v1h-1zM405 502h1v1h-1zM405 506h1v1h-1zM405 511h1v1h-1zM405 516h1v1h-1zM405 520h1v1h-1zM405 525h1v1h-1zM405 530h1v1h-1zM405 534h1v1h-1zM405 539h1v1h-1zM405 544h1v1h-1zM405 548h1v1h-1zM405 553h1v1h-1zM405 558h1v1h-1zM405 562h1v1h-1zM405 567h1v1h-1zM405 572h1v1h-1zM405 576h1v1h-1zM405 581h1v1h-1zM405 586h1v1h-1zM405 591h1v1h-1zM405 595h1v1h-1zM405 600h1v1h-1zM405 605h1v1h-1zM405 609h1v1h-1zM405 614h1v1h-1zM405 619h1v1h-1zM405 623h1v1h-1zM405 628h1v1h-1zM405 633h1v1h-1zM405 637h1v1h-1zM405 642h1v1h-1zM405 647h1v1h-1zM405 651h1v1h-1zM405 656h1v1h-1zM405 661h1v1h-1zM405 665h1v1h-1zM405 670h1v1h-1zM405 675h1v1h-1zM405 679h1v1h-1zM405 684h1v1h-1zM405 689h1v1h-1zM405 693h1v1h-1zM405 698h1v1h-1zM405 703h1v1h-1zM405 708h1v1h-1zM405 712h1v1h-1zM405 717h1v1h-1zM405 722h1v1h-1zM405 726h1v1h-1zM405 731h1v1h-1zM405 736h1v1h-1zM405 740h1v1h-1zM405 745h1v1h-1zM405 750h1v1h-1zM405 754h1v1h-1zM405 759h1v1h-1zM405 764h1v1h-1zM405 768h1v1h-1zM405 773h1v1h-1zM405 778h1v1h-1zM405 782h1v1h-1zM405 787h1v1h-1zM405 792h1v1h-1zM405 796h1v1h-1zM405 801h1v1h-1zM405 806h1v1h-1zM405 810h1v1h-1zM405 815h1v1h-1zM405 820h1v1h-1zM405 825h1v1h-1zM405 829h1v1h-1zM405 834h1v1h-1zM405 839h1v1h-1zM405 843h1v1h-1zM405 848h1v1h-1zM405 853h1v1h-1zM405 857h1v1h-1zM405 862h1v1h-1zM405 867h1v1h-1zM405 871h1v1h-1zM405 876h1v1h-1zM405 881h1v1h-1zM405 885h1v1h-1zM405 890h1v1h-1zM405 895h1v1h-1zM405 899h1v1h-1zM405 904h1v1h-1zM405 909h1v1h-1zM405 913h1v1h-1zM405 918h1v1h-1zM405 923h1v1h-1zM405 927h1v1h-1zM405 932h1v1h-1zM405 937h1v1h-1zM405 942h1v1h-1zM405 946h1v1h-1zM405 951h1v1h-1zM405 956h1v1h-1zM405 960h1v1h-1zM405 965h1v1h-1zM405 970h1v1h-1zM405 974h1v1h-1zM580 57h1v1h-1zM580 62h1v1h-1zM580 66h1v1h-1zM580 71h1v1h-1zM580 76h1v1h-1zM580 80h1v1h-1zM580 85h1v1h-1zM580 90h1v1h-1zM580 94h1v1h-1zM580 99h1v1h-1zM580 104h1v1h-1zM580 108h1v1h-1zM580 113h1v1h-1zM580 118h1v1h-1zM580 123h1v1h-1zM580 127h1v1h-1zM580 132h1v1h-1zM580 137h1v1h-1zM580 141h1v1h-1zM580 146h1v1h-1zM580 151h1v1h-1zM580 155h1v1h-1zM580 160h1v1h-1zM580 165h1v1h-1zM580 169h1v1h-1zM580 174h1v1h-1zM580 179h1v1h-1zM580 183h1v1h-1zM580 188h1v1h-1zM580 193h1v1h-1zM580 197h1v1h-1zM580 202h1v1h-1zM580 207h1v1h-1zM580 211h1v1h-1zM580 216h1v1h-1zM580 221h1v1h-1zM580 225h1v1h-1zM580 230h1v1h-1zM580 235h1v1h-1zM580 240h1v1h-1zM580 244h1v1h-1zM580 249h1v1h-1zM580 254h1v1h-1zM580 258h1v1h-1zM580 263h1v1h-1zM580 268h1v1h-1zM580 272h1v1h-1zM580 277h1v1h-1zM580 282h1v1h-1zM580 286h1v1h-1zM580 291h1v1h-1zM580 296h1v1h-1zM580 300h1v1h-1zM580 305h1v1h-1zM580 310h1v1h-1zM580 314h1v1h-1zM580 319h1v1h-1zM580 324h1v1h-1zM580 328h1v1h-1zM580 333h1v1h-1zM580 338h1v1h-1zM580 342h1v1h-1zM580 347h1v1h-1zM580 352h1v1h-1zM580 357h1v1h-1zM580 361h1v1h-1zM580 366h1v1h-1zM580 371h1v1h-1zM580 375h1v1h-1zM580 380h1v1h-1zM580 385h1v1h-1zM580 389h1v1h-1zM580 394h1v1h-1zM580 399h1v1h-1zM580 403h1v1h-1zM580 408h1v1h-1zM580 413h1v1h-1zM580 417h1v1h-1zM580 422h1v1h-1zM580 427h1v1h-1zM580 431h1v1h-1zM580 436h1v1h-1zM580 441h1v1h-1zM580 445h1v1h-1zM580 450h1v1h-1zM580 455h1v1h-1zM580 459h1v1h-1zM580 464h1v1h-1zM580 469h1v1h-1zM580 474h1v1h-1zM580 478h1v1h-1zM580 483h1v1h-1zM580 488h1v1h-1zM580 492h1v1h-1zM580 497h1v1h-1zM580 502h1v1h-1zM580 506h1v1h-1zM580 511h1v1h-1zM580 516h1v1h-1zM580 520h1v1h-1zM580 525h1v1h-1zM580 530h1v1h-1zM580 534h1v1h-1zM580 539h1v1h-1zM580 544h1v1h-1zM580 548h1v1h-1zM580 553h1v1h-1zM580 558h1v1h-1zM580 562h1v1h-1zM580 567h1v1h-1zM580 572h1v1h-1zM580 576h1v1h-1zM580 581h1v1h-1zM580 586h1v1h-1zM580 591h1v1h-1zM580 595h1v1h-1zM580 600h1v1h-1zM580 605h1v1h-1zM580 609h1v1h-1zM580 614h1v1h-1zM580 619h1v1h-1zM580 623h1v1h-1zM580 628h1v1h-1zM580 633h1v1h-1zM580 637h1v1h-1zM580 642h1v1h-1zM580 647h1v1h-1zM580 651h1v1h-1zM580 656h1v1h-1zM580 661h1v1h-1zM580 665h1v1h-1zM580 670h1v1h-1zM580 675h1v1h-1zM580 679h1v1h-1zM580 684h1v1h-1zM580 689h1v1h-1zM580 693h1v1h-1zM580 698h1v1h-1zM580 703h1v1h-1zM580 708h1v1h-1zM580 712h1v1h-1zM580 717h1v1h-1zM580 722h1v1h-1zM580 726h1v1h-1zM580 731h1v1h-1zM580 736h1v1h-1zM580 740h1v1h-1zM580 745h1v1h-1zM580 750h1v1h-1zM580 754h1v1h-1zM580 759h1v1h-1zM580 764h1v1h-1zM580 768h1v1h-1zM580 773h1v1h-1zM580 778h1v1h-1zM580 782h1v1h-1zM580 787h1v1h-1zM580 792h1v1h-1zM580 796h1v1h-1zM580 801h1v1h-1zM580 806h1v1h-1zM580 810h1v1h-1zM580 815h1v1h-1zM580 820h1v1h-1zM580 825h1v1h-1zM580 829h1v1h-1zM580 834h1v1h-1zM580 839h1v1h-1zM580 843h1v1h-1zM580 848h1v1h-1zM580 853h1v1h-1zM580 857h1v1h-1zM580 862h1v1h-1zM580 867h1v1h-1zM580 871h1v1h-1zM580 876h1v1h-1zM580 881h1v1h-1zM580 885h1v1h-1zM580 890h1v1h-1zM580 895h1v1h-1zM580 899h1v1h-1zM580 904h1v1h-1zM580 909h1v1h-1zM580 913h1v1h-1zM580 918h1v1h-1zM580 923h1v1h-1zM580 927h1v1h-1zM580 932h1v1h-1zM580 937h1v1h-1zM580 942h1v1h-1zM580 946h1v1h-1zM580 951h1v1h-1zM580 956h1v1h-1zM580 960h1v1h-1zM580 965h1v1h-1zM580 970h1v1h-1zM580 974h1v1h-1zM754 57h1v1h-1zM754 62h1v1h-1zM754 66h1v1h-1zM754 71h1v1h-1zM754 76h1v1h-1zM754 80h1v1h-1zM754 85h1v1h-1zM754 90h1v1h-1zM754 94h1v1h-1zM754 99h1v1h-1zM754 104h1v1h-1zM754 108h1v1h-1zM754 113h1v1h-1zM754 118h1v1h-1zM754 123h1v1h-1zM754 127h1v1h-1zM754 132h1v1h-1zM754 137h1v1h-1zM754 141h1v1h-1zM754 146h1v1h-1zM754 151h1v1h-1zM754 155h1v1h-1zM754 160h1v1h-1zM754 165h1v1h-1zM754 169h1v1h-1zM754 174h1v1h-1zM754 179h1v1h-1zM754 183h1v1h-1zM754 188h1v1h-1zM754 193h1v1h-1zM754 197h1v1h-1zM754 202h1v1h-1zM754 207h1v1h-1zM754 211h1v1h-1zM754 216h1v1h-1zM754 221h1v1h-1zM754 225h1v1h-1zM754 230h1v1h-1zM754 235h1v1h-1zM754 240h1v1h-1zM754 244h1v1h-1zM754 249h1v1h-1zM754 254h1v1h-1zM754 258h1v1h-1zM754 263h1v1h-1zM754 268h1v1h-1zM754 272h1v1h-1zM754 277h1v1h-1zM754 282h1v1h-1zM754 286h1v1h-1zM754 291h1v1h-1zM754 296h1v1h-1zM754 300h1v1h-1zM754 305h1v1h-1zM754 310h1v1h-1zM754 314h1v1h-1zM754 319h1v1h-1zM754 324h1v1h-1zM754 328h1v1h-1zM754 333h1v1h-1zM754 338h1v1h-1zM754 342h1v1h-1zM754 347h1v1h-1zM754 352h1v1h-1zM754 357h1v1h-1zM754 361h1v1h-1zM754 366h1v1h-1zM754 371h1v1h-1zM754 375h1v1h-1zM754 380h1v1h-1zM754 385h1v1h-1zM754 389h1v1h-1zM754 394h1v1h-1zM754 399h1v1h-1zM754 403h1v1h-1zM754 408h1v1h-1zM754 413h1v1h-1zM754 417h1v1h-1zM754 422h1v1h-1zM754 427h1v1h-1zM754 431h1v1h-1zM754 436h1v1h-1zM754 441h1v1h-1zM754 445h1v1h-1zM754 450h1v1h-1zM754 455h1v1h-1zM754 459h1v1h-1zM754 464h1v1h-1zM754 469h1v1h-1zM754 474h1v1h-1zM754 478h1v1h-1zM754 483h1v1h-1zM754 488h1v1h-1zM754 492h1v1h-1zM754 497h1v1h-1zM754 502h1v1h-1zM754 506h1v1h-1zM754 511h1v1h-1zM754 516h1v1h-1zM754 520h1v1h-1zM754 525h1v1h-1zM754 530h1v1h-1zM754 534h1v1h-1zM754 539h1v1h-1zM754 544h1v1h-1zM754 548h1v1h-1zM754 553h1v1h-1zM754 558h1v1h-1zM754 562h1v1h-1zM754 567h1v1h-1zM754 572h1v1h-1zM754 576h1v1h-1zM754 581h1v1h-1zM754 586h1v1h-1zM754 591h1v1h-1zM754 595h1v1h-1zM754 600h1v1h-1zM754 605h1v1h-1zM754 609h1v1h-1zM754 614h1v1h-1zM754 619h1v1h-1zM754 623h1v1h-1zM754 628h1v1h-1zM754 633h1v1h-1zM754 637h1v1h-1zM754 642h1v1h-1zM754 647h1v1h-1zM754 651h1v1h-1zM754 656h1v1h-1zM754 661h1v1h-1zM754 665h1v1h-1zM754 670h1v1h-1zM754 675h1v1h-1zM754 679h1v1h-1zM754 684h1v1h-1zM754 689h1v1h-1zM754 693h1v1h-1zM754 698h1v1h-1zM754 703h1v1h-1zM754 708h1v1h-1zM754 712h1v1h-1zM754 717h1v1h-1zM754 722h1v1h-1zM754 726h1v1h-1zM754 731h1v1h-1zM754 736h1v1h-1zM754 740h1v1h-1zM754 745h1v1h-1zM754 750h1v1h-1zM754 754h1v1h-1zM754 759h1v1h-1zM754 764h1v1h-1zM754 768h1v1h-1zM754 773h1v1h-1zM754 778h1v1h-1zM754 782h1v1h-1zM754 787h1v1h-1zM754 792h1v1h-1zM754 796h1v1h-1zM754 801h1v1h-1zM754 806h1v1h-1zM754 810h1v1h-1zM754 815h1v1h-1zM754 820h1v1h-1zM754 825h1v1h-1zM754 829h1v1h-1zM754 834h1v1h-1zM754 839h1v1h-1zM754 843h1v1h-1zM754 848h1v1h-1zM754 853h1v1h-1zM754 857h1v1h-1zM754 862h1v1h-1zM754 867h1v1h-1zM754 871h1v1h-1zM754 876h1v1h-1zM754 881h1v1h-1zM754 885h1v1h-1zM754 890h1v1h-1zM754 895h1v1h-1zM754 899h1v1h-1zM754 904h1v1h-1zM754 909h1v1h-1zM754 913h1v1h-1zM754 918h1v1h-1zM754 923h1v1h-1zM754 927h1v1h-1zM754 932h1v1h-1zM754 937h1v1h-1zM754 942h1v1h-1zM754 946h1v1h-1zM754 951h1v1h-1zM754 956h1v1h-1zM754 960h1v1h-1zM754 965h1v1h-1zM754 970h1v1h-1zM754 974h1v1h-1zM929 57h1v1h-1zM929 62h1v1h-1zM929 66h1v1h-1zM929 71h1v1h-1zM929 76h1v1h-1zM929 80h1v1h-1zM929 85h1v1h-1zM929 90h1v1h-1zM929 94h1v1h-1zM929 99h1v1h-1zM929 104h1v1h-1zM929 108h1v1h-1zM929 113h1v1h-1zM929 118h1v1h-1zM929 123h1v1h-1zM929 127h1v1h-1zM929 132h1v1h-1zM929 137h1v1h-1zM929 141h1v1h-1zM929 146h1v1h-1zM929 151h1v1h-1zM929 155h1v1h-1zM929 160h1v1h-1zM929 165h1v1h-1zM929 169h1v1h-1zM929 174h1v1h-1zM929 179h1v1h-1zM929 183h1v1h-1zM929 188h1v1h-1zM929 193h1v1h-1zM929 197h1v1h-1zM929 202h1v1h-1zM929 207h1v1h-1zM929 211h1v1h-1zM929 216h1v1h-1zM929 221h1v1h-1zM929 225h1v1h-1zM929 230h1v1h-1zM929 235h1v1h-1zM929 240h1v1h-1zM929 244h1v1h-1zM929 249h1v1h-1zM929 254h1v1h-1zM929 258h1v1h-1zM929 263h1v1h-1zM929 268h1v1h-1zM929 272h1v1h-1zM929 277h1v1h-1zM929 282h1v1h-1zM929 286h1v1h-1zM929 291h1v1h-1zM929 296h1v1h-1zM929 300h1v1h-1zM929 305h1v1h-1zM929 310h1v1h-1zM929 314h1v1h-1zM929 319h1v1h-1zM929 324h1v1h-1zM929 328h1v1h-1zM929 333h1v1h-1zM929 338h1v1h-1zM929 342h1v1h-1zM929 347h1v1h-1zM929 352h1v1h-1zM929 357h1v1h-1zM929 361h1v1h-1zM929 366h1v1h-1zM929 371h1v1h-1zM929 375h1v1h-1zM929 380h1v1h-1zM929 385h1v1h-1zM929 389h1v1h-1zM929 394h1v1h-1zM929 399h1v1h-1zM929 403h1v1h-1zM929 408h1v1h-1zM929 413h1v1h-1zM929 417h1v1h-1zM929 422h1v1h-1zM929 427h1v1h-1zM929 431h1v1h-1zM929 436h1v1h-1zM929 441h1v1h-1zM929 445h1v1h-1zM929 450h1v1h-1zM929 455h1v1h-1zM929 459h1v1h-1zM929 464h1v1h-1zM929 469h1v1h-1zM929 474h1v1h-1zM929 478h1v1h-1zM929 483h1v1h-1zM929 488h1v1h-1zM929 492h1v1h-1zM929 497h1v1h-1zM929 502h1v1h-1zM929 506h1v1h-1zM929 511h1v1h-1zM929 516h1v1h-1zM929 520h1v1h-1zM929 525h1v1h-1zM929 530h1v1h-1zM929 534h1v1h-1zM929 539h1v1h-1zM929 544h1v1h-1zM929 548h1v1h-1zM929 553h1v1h-1zM929 558h1v1h-1zM929 562h1v1h-1zM929 567h1v1h-1zM929 572h1v1h-1zM929 576h1v1h-1zM929 581h1v1h-1zM929 586h1v1h-1zM929 591h1v1h-1zM929 595h1v1h-1zM929 600h1v1h-1zM929 605h1v1h-1zM929 609h1v1h-1zM929 614h1v1h-1zM929 619h1v1h-1zM929 623h1v1h-1zM929 628h1v1h-1zM929 633h1v1h-1zM929 637h1v1h-1zM929 642h1v1h-1zM929 647h1v1h-1zM929 651h1v1h-1zM929 656h1v1h-1zM929 661h1v1h-1zM929 665h1v1h-1zM929 670h1v1h-1zM929 675h1v1h-1zM929 679h1v1h-1zM929 684h1v1h-1zM929 689h1v1h-1zM929 693h1v1h-1zM929 698h1v1h-1zM929 703h1v1h-1zM929 708h1v1h-1zM929 712h1v1h-1zM929 717h1v1h-1zM929 722h1v1h-1zM929 726h1v1h-1zM929 731h1v1h-1zM929 736h1v1h-1zM929 740h1v1h-1zM929 745h1v1h-1zM929 750h1v1h-1zM929 754h1v1h-1zM929 759h1v1h-1zM929 764h1v1h-1zM929 768h1v1h-1zM929 773h1v1h-1zM929 778h1v1h-1zM929 782h1v1h-1zM929 787h1v1h-1zM929 792h1v1h-1zM929 796h1v1h-1zM929 801h1v1h-1zM929 806h1v1h-1zM929 810h1v1h-1zM929 815h1v1h-1zM929 820h1v1h-1zM929 825h1v1h-1zM929 829h1v1h-1zM929 834h1v1h-1zM929 839h1v1h-1zM929 843h1v1h-1zM929 848h1v1h-1zM929 853h1v1h-1zM929 857h1v1h-1zM929 862h1v1h-1zM929 867h1v1h-1zM929 871h1v1h-1zM929 876h1v1h-1zM929 881h1v1h-1zM929 885h1v1h-1zM929 890h1v1h-1zM929 895h1v1h-1zM929 899h1v1h-1zM929 904h1v1h-1zM929 909h1v1h-1zM929 913h1v1h-1zM929 918h1v1h-1zM929 923h1v1h-1zM929 927h1v1h-1zM929 932h1v1h-1zM929 937h1v1h-1zM929 942h1v1h-1zM929 946h1v1h-1zM929 951h1v1h-1zM929 956h1v1h-1zM929 960h1v1h-1zM929 965h1v1h-1zM929 970h1v1h-1zM929 974h1v1h-1zM1104 57h1v1h-1zM1104 62h1v1h-1zM1104 66h1v1h-1zM1104 71h1v1h-1zM1104 76h1v1h-1zM1104 80h1v1h-1zM1104 85h1v1h-1zM1104 90h1v1h-1zM1104 94h1v1h-1zM1104 99h1v1h-1zM1104 104h1v1h-1zM1104 108h1v1h-1zM1104 113h1v1h-1zM1104 118h1v1h-1zM1104 123h1v1h-1zM1104 127h1v1h-1zM1104 132h1v1h-1zM1104 137h1v1h-1zM1104 141h1v1h-1zM1104 146h1v1h-1zM1104 151h1v1h-1zM1104 155h1v1h-1zM1104 160h1v1h-1zM1104 165h1v1h-1zM1104 169h1v1h-1zM1104 174h1v1h-1zM1104 179h1v1h-1zM1104 183h1v1h-1zM1104 188h1v1h-1zM1104 193h1v1h-1zM1104 197h1v1h-1zM1104 202h1v1h-1zM1104 207h1v1h-1zM1104 211h1v1h-1zM1104 216h1v1h-1zM1104 221h1v1h-1zM1104 225h1v1h-1zM1104 230h1v1h-1zM1104 235h1v1h-1zM1104 240h1v1h-1zM1104 244h1v1h-1zM1104 249h1v1h-1zM1104 254h1v1h-1zM1104 258h1v1h-1zM1104 263h1v1h-1zM1104 268h1v1h-1zM1104 272h1v1h-1zM1104 277h1v1h-1zM1104 282h1v1h-1zM1104 286h1v1h-1zM1104 291h1v1h-1zM1104 296h1v1h-1zM1104 300h1v1h-1zM1104 305h1v1h-1zM1104 310h1v1h-1zM1104 314h1v1h-1zM1104 319h1v1h-1zM1104 324h1v1h-1zM1104 328h1v1h-1zM1104 333h1v1h-1zM1104 338h1v1h-1zM1104 342h1v1h-1zM1104 347h1v1h-1zM1104 352h1v1h-1zM1104 357h1v1h-1zM1104 361h1v1h-1zM1104 366h1v1h-1zM1104 371h1v1h-1zM1104 375h1v1h-1zM1104 380h1v1h-1zM1104 385h1v1h-1zM1104 389h1v1h-1zM1104 394h1v1h-1zM1104 399h1v1h-1zM1104 403h1v1h-1zM1104 408h1v1h-1zM1104 413h1v1h-1zM1104 417h1v1h-1zM1104 422h1v1h-1zM1104 427h1v1h-1zM1104 431h1v1h-1zM1104 436h1v1h-1zM1104 441h1v1h-1zM1104 445h1v1h-1zM1104 450h1v1h-1zM1104 455h1v1h-1zM1104 459h1v1h-1zM1104 464h1v1h-1zM1104 469h1v1h-1zM1104 474h1v1h-1zM1104 478h1v1h-1zM1104 483h1v1h-1zM1104 488h1v1h-1zM1104 492h1v1h-1zM1104 497h1v1h-1zM1104 502h1v1h-1zM1104 506h1v1h-1zM1104 511h1v1h-1zM1104 516h1v1h-1zM1104 520h1v1h-1zM1104 525h1v1h-1zM1104 530h1v1h-1zM1104 534h1v1h-1zM1104 539h1v1h-1zM1104 544h1v1h-1zM1104 548h1v1h-1zM1104 553h1v1h-1zM1104 558h1v1h-1zM1104 562h1v1h-1zM1104 567h1v1h-1zM1104 572h1v1h-1zM1104 576h1v1h-1zM1104 581h1v1h-1zM1104 586h1v1h-1zM1104 591h1v1h-1zM1104 595h1v1h-1zM1104 600h1v1h-1zM1104 605h1v1h-1zM1104 609h1v1h-1zM1104 614h1v1h-1zM1104 619h1v1h-1zM1104 623h1v1h-1zM1104 628h1v1h-1zM1104 633h1v1h-1zM1104 637h1v1h-1zM1104 642h1v1h-1zM1104 647h1v1h-1zM1104 651h1v1h-1zM1104 656h1v1h-1zM1104 661h1v1h-1zM1104 665h1v1h-1zM1104 670h1v1h-1zM1104 675h1v1h-1zM1104 679h1v1h-1zM1104 684h1v1h-1zM1104 689h1v1h-1zM1104 693h1v1h-1zM1104 698h1v1h-1zM1104 703h1v1h-1zM1104 708h1v1h-1zM1104 712h1v1h-1zM1104 717h1v1h-1zM1104 722h1v1h-1zM1104 726h1v1h-1zM1104 731h1v1h-1zM1104 736h1v1h-1zM1104 740h1v1h-1zM1104 745h1v1h-1zM1104 750h1v1h-1zM1104 754h1v1h-1zM1104 759h1v1h-1zM1104 764h1v1h-1zM1104 768h1v1h-1zM1104 773h1v1h-1zM1104 778h1v1h-1zM1104 782h1v1h-1zM1104 787h1v1h-1zM1104 792h1v1h-1zM1104 796h1v1h-1zM1104 801h1v1h-1zM1104 806h1v1h-1zM1104 810h1v1h-1zM1104 815h1v1h-1zM1104 820h1v1h-1zM1104 825h1v1h-1zM1104 829h1v1h-1zM1104 834h1v1h-1zM1104 839h1v1h-1zM1104 843h1v1h-1zM1104 848h1v1h-1zM1104 853h1v1h-1zM1104 857h1v1h-1zM1104 862h1v1h-1zM1104 867h1v1h-1zM1104 871h1v1h-1zM1104 876h1v1h-1zM1104 881h1v1h-1zM1104 885h1v1h-1zM1104 890h1v1h-1zM1104 895h1v1h-1zM1104 899h1v1h-1zM1104 904h1v1h-1zM1104 909h1v1h-1zM1104 913h1v1h-1zM1104 918h1v1h-1zM1104 923h1v1h-1zM1104 927h1v1h-1zM1104 932h1v1h-1zM1104 937h1v1h-1zM1104 942h1v1h-1zM1104 946h1v1h-1zM1104 951h1v1h-1zM1104 956h1v1h-1zM1104 960h1v1h-1zM1104 965h1v1h-1zM1104 970h1v1h-1zM1104 974h1v1h-1zM1279 57h1v1h-1zM1279 62h1v1h-1zM1279 66h1v1h-1zM1279 71h1v1h-1zM1279 76h1v1h-1zM1279 80h1v1h-1zM1279 85h1v1h-1zM1279 90h1v1h-1zM1279 94h1v1h-1zM1279 99h1v1h-1zM1279 104h1v1h-1zM1279 108h1v1h-1zM1279 113h1v1h-1zM1279 118h1v1h-1zM1279 123h1v1h-1zM1279 127h1v1h-1zM1279 132h1v1h-1zM1279 137h1v1h-1zM1279 141h1v1h-1zM1279 146h1v1h-1zM1279 151h1v1h-1zM1279 155h1v1h-1zM1279 160h1v1h-1zM1279 165h1v1h-1zM1279 169h1v1h-1zM1279 174h1v1h-1zM1279 179h1v1h-1zM1279 183h1v1h-1zM1279 188h1v1h-1zM1279 193h1v1h-1zM1279 197h1v1h-1zM1279 202h1v1h-1zM1279 207h1v1h-1zM1279 211h1v1h-1zM1279 216h1v1h-1zM1279 221h1v1h-1zM1279 225h1v1h-1zM1279 230h1v1h-1zM1279 235h1v1h-1zM1279 240h1v1h-1zM1279 244h1v1h-1zM1279 249h1v1h-1zM1279 254h1v1h-1zM1279 258h1v1h-1zM1279 263h1v1h-1zM1279 268h1v1h-1zM1279 272h1v1h-1zM1279 277h1v1h-1zM1279 282h1v1h-1zM1279 286h1v1h-1zM1279 291h1v1h-1zM1279 296h1v1h-1zM1279 300h1v1h-1zM1279 305h1v1h-1zM1279 310h1v1h-1zM1279 314h1v1h-1zM1279 319h1v1h-1zM1279 324h1v1h-1zM1279 328h1v1h-1zM1279 333h1v1h-1zM1279 338h1v1h-1zM1279 342h1v1h-1zM1279 347h1v1h-1zM1279 352h1v1h-1zM1279 357h1v1h-1zM1279 361h1v1h-1zM1279 366h1v1h-1zM1279 371h1v1h-1zM1279 375h1v1h-1zM1279 380h1v1h-1zM1279 385h1v1h-1zM1279 389h1v1h-1zM1279 394h1v1h-1zM1279 399h1v1h-1zM1279 403h1v1h-1zM1279 408h1v1h-1zM1279 413h1v1h-1zM1279 417h1v1h-1zM1279 422h1v1h-1zM1279 427h1v1h-1zM1279 431h1v1h-1zM1279 436h1v1h-1zM1279 441h1v1h-1zM1279 445h1v1h-1zM1279 450h1v1h-1zM1279 455h1v1h-1zM1279 459h1v1h-1zM1279 464h1v1h-1zM1279 469h1v1h-1zM1279 474h1v1h-1zM1279 478h1v1h-1zM1279 483h1v1h-1zM1279 488h1v1h-1zM1279 492h1v1h-1zM1279 497h1v1h-1zM1279 502h1v1h-1zM1279 506h1v1h-1zM1279 511h1v1h-1zM1279 516h1v1h-1zM1279 520h1v1h-1zM1279 525h1v1h-1zM1279 530h1v1h-1zM1279 534h1v1h-1zM1279 539h1v1h-1zM1279 544h1v1h-1zM1279 548h1v1h-1zM1279 553h1v1h-1zM1279 558h1v1h-1zM1279 562h1v1h-1zM1279 567h1v1h-1zM1279 572h1v1h-1zM1279 576h1v1h-1zM1279 581h1v1h-1zM1279 586h1v1h-1zM1279 591h1v1h-1zM1279 595h1v1h-1zM1279 600h1v1h-1zM1279 605h1v1h-1zM1279 609h1v1h-1zM1279 614h1v1h-1zM1279 619h1v1h-1zM1279 623h1v1h-1zM1279 628h1v1h-1zM1279 633h1v1h-1zM1279 637h1v1h-1zM1279 642h1v1h-1zM1279 647h1v1h-1zM1279 651h1v1h-1zM1279 656h1v1h-1zM1279 661h1v1h-1zM1279 665h1v1h-1zM1279 670h1v1h-1zM1279 675h1v1h-1zM1279 679h1v1h-1zM1279 684h1v1h-1zM1279 689h1v1h-1zM1279 693h1v1h-1zM1279 698h1v1h-1zM1279 703h1v1h-1zM1279 708h1v1h-1zM1279 712h1v1h-1zM1279 717h1v1h-1zM1279 722h1v1h-1zM1279 726h1v1h-1zM1279 731h1v1h-1zM1279 736h1v1h-1zM1279 740h1v1h-1zM1279 745h1v1h-1zM1279 750h1v1h-1zM1279 754h1v1h-1zM1279 759h1v1h-1zM1279 764h1v1h-1zM1279 768h1v1h-1zM1279 773h1v1h-1zM1279 778h1v1h-1zM1279 782h1v1h-1zM1279 787h1v1h-1zM1279 792h1v1h-1zM1279 796h1v1h-1zM1279 801h1v1h-1zM1279 806h1v1h-1zM1279 810h1v1h-1zM1279 815h1v1h-1zM1279 820h1v1h-1zM1279 825h1v1h-1zM1279 829h1v1h-1zM1279 834h1v1h-1zM1279 839h1v1h-1zM1279 843h1v1h-1zM1279 848h1v1h-1zM1279 853h1v1h-1zM1279 857h1v1h-1zM1279 862h1v1h-1zM1279 867h1v1h-1zM1279 871h1v1h-1zM1279 876h1v1h-1zM1279 881h1v1h-1zM1279 885h1v1h-1zM1279 890h1v1h-1zM1279 895h1v1h-1zM1279 899h1v1h-1zM1279 904h1v1h-1zM1279 909h1v1h-1zM1279 913h1v1h-1zM1279 918h1v1h-1zM1279 923h1v1h-1zM1279 927h1v1h-1zM1279 932h1v1h-1zM1279 937h1v1h-1zM1279 942h1v1h-1zM1279 946h1v1h-1zM1279 951h1v1h-1zM1279 956h1v1h-1zM1279 960h1v1h-1zM1279 965h1v1h-1zM1279 970h1v1h-1zM1279 974h1v1h-1zM1454 57h1v1h-1zM1454 62h1v1h-1zM1454 66h1v1h-1zM1454 71h1v1h-1zM1454 76h1v1h-1zM1454 80h1v1h-1zM1454 85h1v1h-1zM1454 90h1v1h-1zM1454 94h1v1h-1zM1454 99h1v1h-1zM1454 104h1v1h-1zM1454 108h1v1h-1zM1454 113h1v1h-1zM1454 118h1v1h-1zM1454 123h1v1h-1zM1454 127h1v1h-1zM1454 132h1v1h-1zM1454 137h1v1h-1zM1454 141h1v1h-1zM1454 146h1v1h-1zM1454 151h1v1h-1zM1454 155h1v1h-1zM1454 160h1v1h-1zM1454 165h1v1h-1zM1454 169h1v1h-1zM1454 174h1v1h-1zM1454 179h1v1h-1zM1454 183h1v1h-1zM1454 188h1v1h-1zM1454 193h1v1h-1zM1454 197h1v1h-1zM1454 202h1v1h-1zM1454 207h1v1h-1zM1454 211h1v1h-1zM1454 216h1v1h-1zM1454 221h1v1h-1zM1454 225h1v1h-1zM1454 230h1v1h-1zM1454 235h1v1h-1zM1454 240h1v1h-1zM1454 244h1v1h-1zM1454 249h1v1h-1zM1454 254h1v1h-1zM1454 258h1v1h-1zM1454 263h1v1h-1zM1454 268h1v1h-1zM1454 272h1v1h-1zM1454 277h1v1h-1zM1454 282h1v1h-1zM1454 286h1v1h-1zM1454 291h1v1h-1zM1454 296h1v1h-1zM1454 300h1v1h-1zM1454 305h1v1h-1zM1454 310h1v1h-1zM1454 314h1v1h-1zM1454 319h1v1h-1zM1454 324h1v1h-1zM1454 328h1v1h-1zM1454 333h1v1h-1zM1454 338h1v1h-1zM1454 342h1v1h-1zM1454 347h1v1h-1zM1454 352h1v1h-1zM1454 357h1v1h-1zM1454 361h1v1h-1zM1454 366h1v1h-1zM1454 371h1v1h-1zM1454 375h1v1h-1zM1454 380h1v1h-1zM1454 385h1v1h-1zM1454 389h1v1h-1zM1454 394h1v1h-1zM1454 399h1v1h-1zM1454 403h1v1h-1zM1454 408h1v1h-1zM1454 413h1v1h-1zM1454 417h1v1h-1zM1454 422h1v1h-1zM1454 427h1v1h-1zM1454 431h1v1h-1zM1454 436h1v1h-1zM1454 441h1v1h-1zM1454 445h1v1h-1zM1454 450h1v1h-1zM1454 455h1v1h-1zM1454 459h1v1h-1zM1454 464h1v1h-1zM1454 469h1v1h-1zM1454 474h1v1h-1zM1454 478h1v1h-1zM1454 483h1v1h-1zM1454 488h1v1h-1zM1454 492h1v1h-1zM1454 497h1v1h-1zM1454 502h1v1h-1zM1454 506h1v1h-1zM1454 511h1v1h-1zM1454 516h1v1h-1zM1454 520h1v1h-1zM1454 525h1v1h-1zM1454 530h1v1h-1zM1454 534h1v1h-1zM1454 539h1v1h-1zM1454 544h1v1h-1zM1454 548h1v1h-1zM1454 553h1v1h-1zM1454 558h1v1h-1zM1454 562h1v1h-1zM1454 567h1v1h-1zM1454 572h1v1h-1zM1454 576h1v1h-1zM1454 581h1v1h-1zM1454 586h1v1h-1zM1454 591h1v1h-1zM1454 595h1v1h-1zM1454 600h1v1h-1zM1454 605h1v1h-1zM1454 609h1v1h-1zM1454 614h1v1h-1zM1454 619h1v1h-1zM1454 623h1v1h-1zM1454 628h1v1h-1zM1454 633h1v1h-1zM1454 637h1v1h-1zM1454 642h1v1h-1zM1454 647h1v1h-1zM1454 651h1v1h-1zM1454 656h1v1h-1zM1454 661h1v1h-1zM1454 665h1v1h-1zM1454 670h1v1h-1zM1454 675h1v1h-1zM1454 679h1v1h-1zM1454 684h1v1h-1zM1454 689h1v1h-1zM1454 693h1v1h-1zM1454 698h1v1h-1zM1454 703h1v1h-1zM1454 708h1v1h-1zM1454 712h1v1h-1zM1454 717h1v1h-1zM1454 722h1v1h-1zM1454 726h1v1h-1zM1454 731h1v1h-1zM1454 736h1v1h-1zM1454 740h1v1h-1zM1454 745h1v1h-1zM1454 750h1v1h-1zM1454 754h1v1h-1zM1454 759h1v1h-1zM1454 764h1v1h-1zM1454 768h1v1h-1zM1454 773h1v1h-1zM1454 778h1v1h-1zM1454 782h1v1h-1zM1454 787h1v1h-1zM1454 792h1v1h-1zM1454 796h1v1h-1zM1454 801h1v1h-1zM1454 806h1v1h-1zM1454 810h1v1h-1zM1454 815h1v1h-1zM1454 820h1v1h-1zM1454 825h1v1h-1zM1454 829h1v1h-1zM1454 834h1v1h-1zM1454 839h1v1h-1zM1454 843h1v1h-1zM1454 848h1v1h-1zM1454 853h1v1h-1zM1454 857h1v1h-1zM1454 862h1v1h-1zM1454 867h1v1h-1zM1454 871h1v1h-1zM1454 876h1v1h-1zM1454 881h1v1h-1zM1454 885h1v1h-1zM1454 890h1v1h-1zM1454 895h1v1h-1zM1454 899h1v1h-1zM1454 904h1v1h-1zM1454 909h1v1h-1zM1454 913h1v1h-1zM1454 918h1v1h-1zM1454 923h1v1h-1zM1454 927h1v1h-1zM1454 932h1v1h-1zM1454 937h1v1h-1zM1454 942h1v1h-1zM1454 946h1v1h-1zM1454 951h1v1h-1zM1454 956h1v1h-1zM1454 960h1v1h-1zM1454 965h1v1h-1zM1454 970h1v1h-1zM1454 974h1v1h-1zM1629 57h1v1h-1zM1629 62h1v1h-1zM1629 66h1v1h-1zM1629 71h1v1h-1zM1629 76h1v1h-1zM1629 80h1v1h-1zM1629 85h1v1h-1zM1629 90h1v1h-1zM1629 94h1v1h-1zM1629 99h1v1h-1zM1629 104h1v1h-1zM1629 108h1v1h-1zM1629 113h1v1h-1zM1629 118h1v1h-1zM1629 123h1v1h-1zM1629 127h1v1h-1zM1629 132h1v1h-1zM1629 137h1v1h-1zM1629 141h1v1h-1zM1629 146h1v1h-1zM1629 151h1v1h-1zM1629 155h1v1h-1zM1629 160h1v1h-1zM1629 165h1v1h-1zM1629 169h1v1h-1zM1629 174h1v1h-1zM1629 179h1v1h-1zM1629 183h1v1h-1zM1629 188h1v1h-1zM1629 193h1v1h-1zM1629 197h1v1h-1zM1629 202h1v1h-1zM1629 207h1v1h-1zM1629 211h1v1h-1zM1629 216h1v1h-1zM1629 221h1v1h-1zM1629 225h1v1h-1zM1629 230h1v1h-1zM1629 235h1v1h-1zM1629 240h1v1h-1zM1629 244h1v1h-1zM1629 249h1v1h-1zM1629 254h1v1h-1zM1629 258h1v1h-1zM1629 263h1v1h-1zM1629 268h1v1h-1zM1629 272h1v1h-1zM1629 277h1v1h-1zM1629 282h1v1h-1zM1629 286h1v1h-1zM1629 291h1v1h-1zM1629 296h1v1h-1zM1629 300h1v1h-1zM1629 305h1v1h-1zM1629 310h1v1h-1zM1629 314h1v1h-1zM1629 319h1v1h-1zM1629 324h1v1h-1zM1629 328h1v1h-1zM1629 333h1v1h-1zM1629 338h1v1h-1zM1629 342h1v1h-1zM1629 347h1v1h-1zM1629 352h1v1h-1zM1629 357h1v1h-1zM1629 361h1v1h-1zM1629 366h1v1h-1zM1629 371h1v1h-1zM1629 375h1v1h-1zM1629 380h1v1h-1zM1629 385h1v1h-1zM1629 389h1v1h-1zM1629 394h1v1h-1zM1629 399h1v1h-1zM1629 403h1v1h-1zM1629 408h1v1h-1zM1629 413h1v1h-1zM1629 417h1v1h-1zM1629 422h1v1h-1zM1629 427h1v1h-1zM1629 431h1v1h-1zM1629 436h1v1h-1zM1629 441h1v1h-1zM1629 445h1v1h-1zM1629 450h1v1h-1zM1629 455h1v1h-1zM1629 459h1v1h-1zM1629 464h1v1h-1zM1629 469h1v1h-1zM1629 474h1v1h-1zM1629 478h1v1h-1zM1629 483h1v1h-1zM1629 488h1v1h-1zM1629 492h1v1h-1zM1629 497h1v1h-1zM1629 502h1v1h-1zM1629 506h1v1h-1zM1629 511h1v1h-1zM1629 516h1v1h-1zM1629 520h1v1h-1zM1629 525h1v1h-1zM1629 530h1v1h-1zM1629 534h1v1h-1zM1629 539h1v1h-1zM1629 544h1v1h-1zM1629 548h1v1h-1zM1629 553h1v1h-1zM1629 558h1v1h-1zM1629 562h1v1h-1zM1629 567h1v1h-1zM1629 572h1v1h-1zM1629 576h1v1h-1zM1629 581h1v1h-1zM1629 586h1v1h-1zM1629 591h1v1h-1zM1629 595h1v1h-1zM1629 600h1v1h-1zM1629 605h1v1h-1zM1629 609h1v1h-1zM1629 614h1v1h-1zM1629 619h1v1h-1zM1629 623h1v1h-1zM1629 628h1v1h-1zM1629 633h1v1h-1zM1629 637h1v1h-1zM1629 642h1v1h-1zM1629 647h1v1h-1zM1629 651h1v1h-1zM1629 656h1v1h-1zM1629 661h1v1h-1zM1629 665h1v1h-1zM1629 670h1v1h-1zM1629 675h1v1h-1zM1629 679h1v1h-1zM1629 684h1v1h-1zM1629 689h1v1h-1zM1629 693h1v1h-1zM1629 698h1v1h-1zM1629 703h1v1h-1zM1629 708h1v1h-1zM1629 712h1v1h-1zM1629 717h1v1h-1zM1629 722h1v1h-1zM1629 726h1v1h-1zM1629 731h1v1h-1zM1629 736h1v1h-1zM1629 740h1v1h-1zM1629 745h1v1h-1zM1629 750h1v1h-1zM1629 754h1v1h-1zM1629 759h1v1h-1zM1629 764h1v1h-1zM1629 768h1v1h-1zM1629 773h1v1h-1zM1629 778h1v1h-1zM1629 782h1v1h-1zM1629 787h1v1h-1zM1629 792h1v1h-1zM1629 796h1v1h-1zM1629 801h1v1h-1zM1629 806h1v1h-1zM1629 810h1v1h-1zM1629 815h1v1h-1zM1629 820h1v1h-1zM1629 825h1v1h-1zM1629 829h1v1h-1zM1629 834h1v1h-1zM1629 839h1v1h-1zM1629 843h1v1h-1zM1629 848h1v1h-1zM1629 853h1v1h-1zM1629 857h1v1h-1zM1629 862h1v1h-1zM1629 867h1v1h-1zM1629 871h1v1h-1zM1629 876h1v1h-1zM1629 881h1v1h-1zM1629 885h1v1h-1zM1629 890h1v1h-1zM1629 895h1v1h-1zM1629 899h1v1h-1zM1629 904h1v1h-1zM1629 909h1v1h-1zM1629 913h1v1h-1zM1629 918h1v1h-1zM1629 923h1v1h-1zM1629 927h1v1h-1zM1629 932h1v1h-1zM1629 937h1v1h-1zM1629 942h1v1h-1zM1629 946h1v1h-1zM1629 951h1v1h-1zM1629 956h1v1h-1zM1629 960h1v1h-1zM1629 965h1v1h-1zM1629 970h1v1h-1zM1629 974h1v1h-1z" fill="#a8a8a8"/>
<line x1="55.5" y1="94" x2="55.5" y2="992" stroke="#c8c8c8" stroke-width="1.2" stroke-dasharray="5 5"/>
<rect x="3" y="289" width="1748" height="2" fill="#777"/>
<rect x="3" y="523" width="1748" height="2" fill="#777"/>
<rect x="3" y="757" width="1748" height="2" fill="#777"/><path d="M3.5 263.9V265.3M4.5 263.9V265.3M5.5 263.9V265.3M6.5 263.9V265.3M7.5 263.9V265.3M8.5 263.9V265.3M9.5 263.9V265.3M10.5 263.9V265.3M11.5 263.9V265.3M12.5 263.9V265.3M13.5 263.9V265.3M14.5 263.9V265.3M15.5 263.9V265.3M16.5 263.9V265.3M17.5 263.9V265.3M18.5 263.9V265.3M19.5 263.9V265.3M20.5 263.9V265.3M21.5 263.9V265.3M22.5 263.9V265.3M23.5 263.9V265.3M24.5 263.9V265.3M25.5 263.9V265.3M26.5 263.9V265.3M27.5 263.9V265.3M28.5 263.9V265.3M29.5 263.9V265.3M30.5 263.9V265.3M31.5 263.9V265.3M32.5 263.9V265.3M33.5 263.9V265.3M34.5 263.9V265.3M35.5 263.9V265.3M36.5 263.9V265.3M37.5 263.9V265.3M38.5 263.9V265.3M39.5 263.9V265.3M40.5 263.9V265.3M41.5 263.9V265.3M42.5 263.9V265.3M43.5 263.9V265.3M44.5 263.9V265.3M45.5 264.0V265.4M46.5 264.0V265.4M47.5 264.0V265.4M48.5 264.0V265.4M49.5 264.0V265.4M50.5 264.0V265.4M51.5 264.0V265.4M52.5 264.0V265.4M53.5 264.0V265.4M54.5 264.0V265.4M55.5 264.0V265.4M56.5 264.0V265.4M57.5 264.0V265.4M58.5 264.0V265.4M59.5 264.0V265.4M60.5 264.0V265.4M61.5 264.0V265.4M62.5 264.0V265.4M63.5 264.0V265.4M64.5 264.0V265.4M65.5 264.0V265.4M66.5 264.0V265.4M67.5 264.0V265.4M68.5 264.0V265.4M69.5 264.0V265.4M70.5 264.0V265.4M71.5 264.0V265.4M72.5 264.0V265.4M73.5 264.0V265.4M74.5 264.0V265.4M75.5 264.0V265.4M76.5 264.0V265.4M77.5 264.0V265.4M78.5 264.0V265.4M79.5 264.0V265.4M80.5 264.0V265.4M81.5 264.0V265.4M82.5 264.0V265.4M83.5 264.0V265.4M84.5 264.0V265.4M85.5 264.0V265.4M86.5 264.0V265.4M87.5 264.0V265.4M88.5 264.0V265.4M89.5 264.0V265.4M90.5 264.0V265.4M91.5 264.0V265.4M92.5 264.0V265.4M93.5 264.0V265.4M94.5 264.0V265.4M95.5 264.0V265.4M96.5 264.0V265.4M97.5 264.0V265.4M98.5 264.0V265.4M99.5 264.0V265.4M100.5 264.0V265.4M101.5 264.0V265.4M102.5 264.0V265.4M103.5 264.0V265.4M104.5 264.0V265.4M105.5 264.0V265.4M106.5 264.0V265.4M107.5 264.0V265.4M108.5 264.0V265.4M109.5 264.0V265.4M110.5 264.0V265.4M111.5 264.0V265.4M112.5 264.0V265.4M113.5 264.0V265.4M114.5 264.0V265.4M115.5 264.0V265.4M116.5 264.0V265.4M117.5 264.0V265.4M118.5 264.0V265.4M119.5 264.0V265.4M120.5 264.0V265.4M121.5 264.0V265.4M122.5 264.0V265.4M123.5 264.0V265.4M124.5 264.0V265.4M125.5 264.0V265.4M126.5 264.0V265.4M127.5 264.0V265.4M128.5 264.1V265.5M129.5 264.1V265.5M130.5 264.1V265.5M131.5 264.1V265.5M132.5 264.1V265.5M133.5 264.1V265.5M134.5 264.1V265.5M135.5 264.1V265.5M136.5 264.1V265.5M137.5 264.1V265.5M138.5 264.1V265.5M139.5 264.1V265.5M140.5 264.1V265.5M141.5 264.1V265.5M142.5 264.1V265.5M143.5 264.1V265.5M144.5 264.1V265.5M145.5 264.1V265.5M146.5 264.1V265.5M147.5 264.1V265.5M148.5 264.1V265.5M149.5 264.1V265.5M150.5 264.1V265.5M151.5 264.1V265.5M152.5 264.1V265.5M153.5 264.1V265.5M154.5 264.1V265.5M155.5 264.1V265.5M156.5 264.1V265.5M157.5 264.1V265.5M158.5 264.1V265.5M159.5 264.1V265.5M160.5 264.1V265.5M161.5 264.1V265.5M162.5 264.1V265.5M163.5 264.1V265.5M164.5 264.1V265.5M165.5 264.1V265.5M166.5 264.1V265.5M167.5 264.1V265.5M168.5 264.1V265.5M169.5 264.4V265.8M170.5 263.7V265.1M171.5 263.8V265.2M172.5 263.5V264.9M173.5 263.2V265.1M174.5 263.1V264.5M175.5 264.1V265.5M176.5 264.5V265.9M177.5 264.2V266.4M178.5 264.4V266.2M179.5 264.1V265.5M180.5 263.8V265.4M181.5 263.1V265.4M182.5 263.3V265.6M183.5 263.9V265.3M184.5 263.9V265.3M185.5 264.1V265.5M186.5 264.3V265.8M187.5 264.5V266.0M188.5 264.0V266.0M189.5 264.0V265.4M190.5 263.7V265.1M191.5 264.4V266.3M192.5 263.7V265.4M193.5 264.1V265.5M194.5 264.0V265.4M195.5 264.0V265.4M196.5 263.8V265.2M197.5 264.2V265.6M198.5 264.0V265.9M199.5 263.3V265.0M200.5 263.9V265.3M201.5 264.7V266.1M202.5 264.5V265.9M203.5 264.2V265.9M204.5 264.1V266.5M205.5 264.6V266.0M206.5 264.2V265.7M207.5 264.4V266.7M208.5 263.8V266.2M209.5 263.5V265.1M210.5 263.7V265.1M211.5 263.7V265.1M212.5 264.0V265.4M213.5 264.0V265.4M214.5 263.8V265.6M215.5 263.9V265.3M216.5 264.1V266.0M217.5 263.7V266.0M218.5 263.7V265.4M219.5 264.4V265.8M220.5 263.9V265.8M221.5 264.1V266.0M222.5 264.0V265.5M223.5 263.3V264.7M224.5 263.3V265.6M225.5 264.5V266.3M226.5 263.8V266.3M227.5 265.0V266.4M228.5 264.4V265.8M229.5 264.0V265.4M230.5 264.3V265.7M231.5 264.1V266.0M232.5 263.4V265.0M233.5 263.3V264.7M234.5 263.7V265.1M235.5 264.0V265.4M236.5 262.9V265.1M237.5 262.8V265.7M238.5 264.4V265.8M239.5 263.5V264.9M240.5 264.2V266.2M241.5 264.0V265.8M242.5 264.0V266.0M243.5 263.5V265.5M244.5 263.8V265.5M245.5 263.1V266.5M246.5 264.8V266.5M247.5 264.9V266.6M248.5 265.1V266.5M249.5 264.6V266.0M250.5 263.6V266.4M251.5 263.6V265.7M252.5 264.0V265.7M253.5 264.1V266.3M254.5 264.9V266.3M255.5 263.6V265.3M256.5 264.1V265.5M257.5 264.3V265.7M258.5 263.1V265.9M259.5 264.6V266.4M260.5 264.3V265.7M261.5 264.8V266.2M262.5 264.8V266.2M263.5 264.3V265.7M264.5 262.5V265.3M265.5 262.8V264.9M266.5 264.0V265.4M267.5 263.6V265.0M268.5 263.7V265.1M269.5 263.7V265.1M270.5 264.2V265.6M271.5 264.4V266.2M272.5 264.5V265.9M273.5 264.3V265.7M274.5 263.3V265.2M275.5 264.2V265.7M276.5 263.6V265.3M277.5 264.4V266.3M278.5 264.3V265.7M279.5 263.8V265.2M280.5 263.9V265.3M281.5 264.7V266.4M282.5 263.4V265.8M283.5 263.3V265.9M284.5 263.2V264.6M285.5 264.3V265.7M286.5 263.7V265.4M287.5 264.4V266.5M288.5 264.4V265.9M289.5 264.3V265.8M290.5 263.7V265.3M291.5 264.5V265.9M292.5 263.8V265.2M293.5 263.9V265.8M294.5 263.0V265.5M295.5 263.8V265.2M296.5 264.7V266.1M297.5 264.0V265.4M298.5 263.5V264.9M299.5 263.3V264.7M300.5 264.5V267.0M301.5 263.9V265.5M302.5 263.9V265.9M303.5 264.8V266.4M304.5 264.6V266.4M305.5 264.9V266.3M306.5 264.8V266.2M307.5 264.5V266.0M308.5 264.6V266.2M309.5 264.2V265.6M310.5 263.8V265.6M311.5 263.2V265.1M312.5 263.8V265.2M313.5 263.7V267.0M314.5 264.5V266.4M315.5 264.7V266.2M316.5 264.0V266.2M317.5 264.5V266.4M318.5 263.6V265.9M319.5 264.7V266.1M320.5 264.0V265.8M321.5 263.5V265.3M322.5 264.5V265.9M323.5 264.6V266.1M324.5 264.2V265.6M325.5 264.3V265.7M326.5 263.7V266.5M327.5 264.6V266.0M328.5 264.5V266.3M329.5 265.1V266.5M330.5 264.8V266.2M331.5 263.9V265.9M332.5 264.4V265.8M333.5 264.6V266.0M334.5 264.4V267.2M335.5 264.8V266.2M336.5 265.0V266.6M337.5 265.1V266.5M338.5 264.3V266.6M339.5 263.5V264.9M340.5 263.7V265.1M341.5 263.8V265.5M342.5 263.5V265.0M343.5 263.4V264.8M344.5 262.7V266.8M345.5 264.1V266.8M346.5 264.4V265.8M347.5 264.2V265.8M348.5 263.4V265.5M349.5 262.8V266.4M350.5 262.8V265.2M351.5 263.3V265.9M352.5 264.7V266.1M353.5 264.4V266.8M354.5 265.4V266.8M355.5 264.6V266.1M356.5 265.3V266.7M357.5 264.4V266.3M358.5 263.9V265.3M359.5 264.7V266.1M360.5 264.7V266.7M361.5 264.1V265.6M362.5 263.6V265.5M363.5 264.2V266.3M364.5 264.6V266.0M365.5 264.3V265.7M366.5 264.7V266.5M367.5 264.1V265.5M368.5 263.7V265.1M369.5 264.5V265.9M370.5 264.6V266.0M371.5 263.9V265.3M372.5 264.1V265.9M373.5 264.6V266.0M374.5 264.2V265.8M375.5 264.6V266.5M376.5 264.3V265.7M377.5 264.7V266.1M378.5 263.8V266.0M379.5 263.6V265.7M380.5 263.1V264.7M381.5 264.7V266.1M382.5 264.0V265.4M383.5 264.3V265.7M384.5 263.9V265.3M385.5 263.9V265.6M386.5 262.9V266.1M387.5 263.6V265.4M388.5 264.3V266.1M389.5 264.7V266.4M390.5 263.9V265.5M391.5 264.3V265.7M392.5 263.9V265.3M393.5 264.4V265.8M394.5 265.6V267.0M395.5 264.0V266.9M396.5 264.4V265.8M397.5 264.5V266.7M398.5 264.6V266.7M399.5 264.5V266.3M400.5 264.7V266.1M401.5 264.5V265.9M402.5 265.0V267.0M403.5 264.5V266.5M404.5 264.8V266.2M405.5 263.2V265.7M406.5 264.5V266.6M407.5 264.0V266.4M408.5 264.3V265.7M409.5 263.6V266.2M410.5 264.7V266.6M411.5 264.2V266.2M412.5 264.7V266.8M413.5 264.3V266.4M414.5 263.2V265.2M415.5 263.5V265.2M416.5 263.7V265.5M417.5 264.5V265.9M418.5 263.9V266.5M419.5 262.6V266.4M420.5 264.4V266.4M421.5 264.1V265.8M422.5 264.1V265.5M423.5 263.4V265.4M424.5 264.0V265.4M425.5 264.5V265.9M426.5 264.0V265.4M427.5 263.2V265.5M428.5 263.5V265.4M429.5 263.1V265.2M430.5 264.6V266.2M431.5 265.1V267.0M432.5 264.0V267.0M433.5 264.0V266.3M434.5 263.5V266.3M435.5 263.6V265.0M436.5 263.9V265.7M437.5 263.6V265.7M438.5 264.0V266.2M439.5 264.7V266.3M440.5 263.8V266.2M441.5 262.9V264.9M442.5 264.3V265.7M443.5 264.4V266.7M444.5 264.9V266.3M445.5 265.3V266.9M446.5 264.5V266.3M447.5 264.0V265.4M448.5 263.8V265.9M449.5 264.9V266.3M450.5 263.7V266.4M451.5 263.7V265.6M452.5 263.8V266.3M453.5 263.9V266.3M454.5 263.7V267.7M455.5 265.2V266.6M456.5 263.8V265.7M457.5 263.8V265.2M458.5 263.8V266.1M459.5 264.7V266.1M460.5 265.3V266.8M461.5 264.8V267.0M462.5 264.0V265.4M463.5 263.9V266.7M464.5 264.4V265.8M465.5 264.7V266.5M466.5 264.6V266.0M467.5 264.4V265.8M468.5 263.9V265.9M469.5 264.4V266.3M470.5 264.4V266.6M471.5 264.8V267.2M472.5 264.4V267.7M473.5 264.4V265.8M474.5 264.2V265.9M475.5 263.8V265.5M476.5 264.2V265.6M477.5 263.1V266.0M478.5 263.3V265.1M479.5 264.3V266.6M480.5 264.0V265.9M481.5 264.0V266.2M482.5 264.3V265.7M483.5 264.7V266.1M484.5 264.0V266.1M485.5 263.2V265.9M486.5 264.4V266.2M487.5 264.4V266.2M488.5 264.8V266.2M489.5 263.7V265.8M490.5 263.4V266.3M491.5 263.4V266.4M492.5 265.0V266.7M493.5 265.0V267.1M494.5 264.6V266.0M495.5 263.8V266.9M496.5 264.3V266.3M497.5 264.6V266.0M498.5 263.3V265.9M499.5 263.3V265.7M500.5 263.7V265.6M501.5 263.8V265.3M502.5 264.1V266.2M503.5 264.4V266.6M504.5 264.0V265.4M505.5 264.8V266.2M506.5 264.7V266.3M507.5 264.5V265.9M508.5 264.3V266.3M509.5 263.6V266.4M510.5 264.6V266.5M511.5 264.6V266.7M512.5 263.8V266.8M513.5 263.8V265.9M514.5 263.8V266.7M515.5 263.8V265.8M516.5 264.7V266.1M517.5 264.6V267.4M518.5 263.7V265.8M519.5 263.9V265.6M520.5 264.7V267.1M521.5 263.9V267.1M522.5 263.6V266.3M523.5 265.2V266.6M524.5 264.1V266.0M525.5 264.4V267.2M526.5 264.4V265.8M527.5 263.3V265.3M528.5 264.4V266.9M529.5 264.0V267.6M530.5 263.7V267.6M531.5 263.1V265.8M532.5 263.9V266.1M533.5 264.2V265.7M534.5 263.5V265.2M535.5 263.7V266.4M536.5 265.4V266.9M537.5 265.5V266.9M538.5 263.9V266.6M539.5 265.3V266.7M540.5 264.1V265.6M541.5 263.6V265.8M542.5 263.6V266.8M543.5 263.9V266.0M544.5 263.8V265.2M545.5 265.0V266.4M546.5 264.5V266.1M547.5 263.7V267.3M548.5 263.7V267.3M549.5 263.8V266.2M550.5 264.7V266.5M551.5 264.6V266.0M552.5 264.9V266.5M553.5 264.8V266.2M554.5 264.9V267.5M555.5 264.5V267.5M556.5 264.2V266.0M557.5 263.5V266.6M558.5 263.5V266.2M559.5 264.1V266.8M560.5 263.1V265.8M561.5 264.0V266.7M562.5 264.0V265.5M563.5 264.4V265.8M564.5 264.7V266.2M565.5 264.2V266.4M566.5 264.8V266.8M567.5 264.9V266.8M568.5 264.3V265.7M569.5 264.4V266.5M570.5 264.6V266.3M571.5 263.0V266.9M572.5 263.6V265.4M573.5 264.5V267.7M574.5 263.9V266.0M575.5 264.0V266.9M576.5 264.0V266.6M577.5 263.8V265.9M578.5 264.9V266.5M579.5 264.9V266.4M580.5 265.8V267.2M581.5 265.2V267.8M582.5 264.1V266.9M583.5 265.6V268.2M584.5 264.6V266.5M585.5 263.9V266.3M586.5 263.4V266.3M587.5 263.4V265.2M588.5 264.0V267.4M589.5 265.5V268.1M590.5 264.7V266.1M591.5 263.2V267.1M592.5 264.2V267.6M593.5 263.5V266.2M594.5 263.5V266.5M595.5 263.2V267.8M596.5 264.4V267.8M597.5 265.1V267.0M598.5 263.6V267.8M599.5 264.0V267.8M600.5 263.8V267.7M601.5 263.3V266.2M602.5 265.1V267.8M603.5 264.5V268.1M604.5 263.9V266.8M605.5 265.1V267.8M606.5 266.1V269.0M607.5 263.5V267.9M608.5 265.0V267.2M609.5 265.4V267.7M610.5 266.0V269.4M611.5 265.2V267.9M612.5 262.6V267.1M613.5 264.5V266.7M614.5 263.4V268.1M615.5 262.7V266.2M616.5 261.8V266.6M617.5 261.8V267.0M618.5 264.8V266.6M619.5 262.8V268.5M620.5 261.1V268.3M621.5 262.1V267.7M622.5 264.1V267.8M623.5 265.1V268.2M624.5 265.1V268.6M625.5 264.9V268.6M626.5 263.5V267.2M627.5 264.3V267.0M628.5 263.8V265.4M629.5 264.0V266.7M630.5 264.6V266.1M631.5 263.0V267.0M632.5 263.8V267.2M633.5 263.8V268.3M634.5 264.1V266.7M635.5 263.6V267.5M636.5 264.9V267.5M637.5 263.2V267.0M638.5 262.9V264.8M639.5 264.7V268.5M640.5 265.0V268.5M641.5 265.0V267.0M642.5 264.7V269.0M643.5 264.5V266.1M644.5 265.5V266.9M645.5 265.2V267.1M646.5 264.6V266.2M647.5 264.0V269.0M648.5 262.5V269.0M649.5 262.5V267.3M650.5 265.6V268.2M651.5 264.4V268.0M652.5 263.2V266.4M653.5 263.6V266.4M654.5 263.6V266.9M655.5 264.2V266.9M656.5 262.6V265.1M657.5 262.9V266.2M658.5 265.2V269.7M659.5 264.8V269.2M660.5 263.9V267.4M661.5 264.0V267.7M662.5 264.2V267.7M663.5 264.2V267.4M664.5 263.6V265.5M665.5 262.7V267.2M666.5 264.1V267.2M667.5 261.3V264.1M668.5 263.9V266.8M669.5 262.9V265.4M670.5 262.4V264.8M671.5 264.5V267.7M672.5 263.5V266.3M673.5 264.4V268.9M674.5 263.7V266.7M675.5 262.2V268.1M676.5 264.3V267.6M677.5 264.3V266.9M678.5 263.9V266.3M679.5 263.9V266.5M680.5 262.0V266.3M681.5 263.9V267.4M682.5 265.1V267.9M683.5 263.2V268.2M684.5 263.2V265.5M685.5 264.8V269.9M686.5 264.6V268.4M687.5 264.0V268.3M688.5 262.2V266.9M689.5 262.2V266.9M690.5 265.8V268.9M691.5 263.7V268.9M692.5 264.7V266.9M693.5 264.3V267.1M694.5 264.1V267.6M695.5 264.1V265.8M696.5 263.8V267.3M697.5 265.0V266.7M698.5 264.1V270.4M699.5 264.1V268.8M700.5 262.3V266.2M701.5 262.1V267.8M702.5 262.1V268.1M703.5 262.7V267.4M704.5 264.5V267.8M705.5 263.2V267.1M706.5 263.8V265.9M707.5 263.8V267.6M708.5 264.6V267.3M709.5 265.4V268.7M710.5 264.7V267.6M711.5 264.0V266.2M712.5 264.1V267.9M713.5 265.2V269.0M714.5 265.8V269.0M715.5 264.3V267.3M716.5 265.7V268.0M717.5 264.7V267.9M718.5 264.3V268.3M719.5 263.5V267.4M720.5 265.3V268.1M721.5 263.9V266.0M722.5 264.7V267.9M723.5 263.0V268.2M724.5 264.7V267.1M725.5 261.2V266.9M726.5 260.8V266.3M727.5 264.9V268.1M728.5 265.6V271.3M729.5 263.3V266.8M730.5 264.2V270.2M731.5 263.7V268.0M732.5 263.7V267.7M733.5 262.9V267.6M734.5 265.3V268.7M735.5 264.1V266.4M736.5 265.6V267.3M737.5 260.6V267.3M738.5 264.4V268.7M739.5 261.6V265.7M740.5 262.9V266.5M741.5 263.9V268.5M742.5 265.2V268.8M743.5 263.0V266.0M744.5 262.5V266.1M745.5 264.1V268.3M746.5 264.1V267.6M747.5 264.4V267.1M748.5 266.5V267.9M749.5 261.7V267.6M750.5 264.7V269.2M751.5 263.3V267.3M752.5 262.1V266.7M753.5 263.5V265.7M754.5 262.7V266.8M755.5 264.8V268.6M756.5 261.9V266.6M757.5 262.5V268.2M758.5 265.3V268.2M759.5 263.0V267.1M760.5 262.8V267.3M761.5 263.6V268.4M762.5 261.2V268.4M763.5 264.1V266.6M764.5 264.4V267.9M765.5 264.5V269.0M766.5 260.7V267.8M767.5 260.7V268.9M768.5 263.9V268.0M769.5 266.0V269.0M770.5 261.5V268.1M771.5 266.1V271.6M772.5 262.7V271.6M773.5 263.5V267.5M774.5 262.1V267.6M775.5 262.6V265.1M776.5 263.5V266.0M777.5 264.2V269.1M778.5 265.2V269.1M779.5 261.2V267.7M780.5 263.7V267.7M781.5 262.4V270.4M782.5 262.4V270.4M783.5 261.9V266.9M784.5 264.9V267.6M785.5 264.4V266.8M786.5 262.2V265.8M787.5 265.0V268.3M788.5 262.7V268.4M789.5 261.3V267.0M790.5 263.8V267.7M791.5 264.6V268.3M792.5 258.9V267.9M793.5 260.6V266.4M794.5 260.4V264.5M795.5 261.9V268.9M796.5 265.0V269.8M797.5 263.7V267.4M798.5 263.7V269.8M799.5 266.7V270.4M800.5 265.1V270.4M801.5 261.3V266.6M802.5 261.7V267.3M803.5 262.7V269.5M804.5 261.2V266.6M805.5 262.0V267.8M806.5 263.4V267.8M807.5 262.8V268.1M808.5 262.4V267.6M809.5 265.5V270.1M810.5 261.8V269.6M811.5 261.8V269.0M812.5 259.0V266.0M813.5 261.2V267.5M814.5 261.7V268.0M815.5 261.7V265.9M816.5 260.8V265.5M817.5 260.9V266.7M818.5 264.1V267.3M819.5 261.8V266.5M820.5 262.1V267.7M821.5 261.4V268.6M822.5 264.9V266.3M823.5 264.9V268.1M824.5 262.2V270.1M825.5 264.6V270.1M826.5 263.8V268.2M827.5 262.6V265.7M828.5 262.4V268.8M829.5 261.3V268.8M830.5 264.3V266.0M831.5 263.9V272.6M832.5 263.5V270.9M833.5 261.8V269.2M834.5 266.4V270.8M835.5 266.3V269.7M836.5 266.1V271.2M837.5 262.5V269.0M838.5 266.2V268.9M839.5 262.5V270.9M840.5 266.0V273.1M841.5 263.7V270.8M842.5 264.3V270.8M843.5 263.2V266.6M844.5 262.9V268.1M845.5 260.4V269.0M846.5 260.0V268.7M847.5 260.9V267.9M848.5 261.2V266.3M849.5 261.3V268.5M850.5 262.4V267.6M851.5 262.9V267.0M852.5 262.0V268.0M853.5 261.2V265.3M854.5 264.0V268.4M855.5 261.3V269.1M856.5 261.6V266.1M857.5 262.8V269.5M858.5 262.5V269.0M859.5 263.0V266.3M860.5 264.3V272.2M861.5 264.0V271.9M862.5 260.2V271.9M863.5 264.1V269.2M864.5 259.0V267.1M865.5 264.8V272.5M866.5 263.7V269.5M867.5 262.5V267.9M868.5 262.5V267.7M869.5 258.3V265.1M870.5 258.3V268.9M871.5 259.2V269.1M872.5 264.0V268.7M873.5 263.5V267.5M874.5 262.8V269.6M875.5 261.9V267.9M876.5 261.1V267.1M877.5 257.9V263.4M878.5 260.4V270.6M879.5 263.9V269.5M880.5 258.8V265.9M881.5 263.4V267.8M882.5 259.9V270.4M883.5 260.3V268.2M884.5 263.4V268.2M885.5 263.0V272.2M886.5 258.8V272.2M887.5 262.7V267.1M888.5 261.6V264.5M889.5 263.3V266.9M890.5 258.5V269.4M891.5 258.0V269.1M892.5 258.0V268.7M893.5 256.3V266.4M894.5 261.1V267.0M895.5 261.2V267.8M896.5 261.2V267.1M897.5 261.1V265.6M898.5 261.4V267.6M899.5 260.6V269.3M900.5 261.8V267.1M901.5 261.9V268.8M902.5 257.9V267.5M903.5 258.0V266.8M904.5 262.3V269.1M905.5 261.6V269.1M906.5 260.3V272.2M907.5 265.2V267.1M908.5 261.7V267.8M909.5 259.5V267.6M910.5 261.2V269.1M911.5 259.1V269.1M912.5 260.9V271.4M913.5 260.5V271.4M914.5 260.2V264.2M915.5 258.1V267.0M916.5 260.3V264.3M917.5 260.6V265.7M918.5 261.5V267.5M919.5 258.0V267.5M920.5 257.6V261.3M921.5 259.0V266.3M922.5 259.5V267.4M923.5 260.0V271.3M924.5 258.0V267.4M925.5 260.1V267.4M926.5 259.8V267.6M927.5 263.4V268.3M928.5 264.1V267.9M929.5 264.9V270.4M930.5 256.3V270.0M931.5 256.1V267.6M932.5 258.0V267.7M933.5 258.0V271.4M934.5 260.2V271.4M935.5 263.3V272.6M936.5 259.5V267.5M937.5 261.7V268.8M938.5 260.8V266.5M939.5 260.6V268.2M940.5 262.2V271.0M941.5 262.2V271.0M942.5 260.9V269.2M943.5 257.0V268.9M944.5 257.0V270.1M945.5 261.7V269.9M946.5 265.7V270.7M947.5 260.2V270.7M948.5 265.1V272.3M949.5 268.2V277.2M950.5 258.2V272.9M951.5 262.3V272.9M952.5 259.7V267.7M953.5 262.1V268.3M954.5 265.2V268.9M955.5 263.1V268.4M956.5 263.5V272.0M957.5 261.0V266.6M958.5 260.4V271.4M959.5 263.5V268.2M960.5 262.0V268.7M961.5 259.0V267.3M962.5 258.2V264.8M963.5 259.0V265.3M964.5 253.2V266.9M965.5 262.8V267.9M966.5 259.7V271.3M967.5 258.4V269.0M968.5 260.2V268.6M969.5 257.2V268.8M970.5 254.7V270.0M971.5 264.6V272.3M972.5 259.8V266.3M973.5 260.3V269.3M974.5 254.9V269.3M975.5 254.9V269.3M976.5 258.5V265.7M977.5 254.7V263.8M978.5 252.6V270.2M979.5 261.7V270.2M980.5 252.3V268.6M981.5 259.3V271.9M982.5 257.2V266.4M983.5 252.2V265.0M984.5 249.1V265.5M985.5 254.8V265.5M986.5 254.3V263.5M987.5 256.3V265.4M988.5 256.3V260.2M989.5 257.8V270.6M990.5 253.6V270.6M991.5 258.1V263.7M992.5 260.6V270.4M993.5 257.4V269.1M994.5 261.9V271.4M995.5 265.2V267.9M996.5 255.8V267.9M997.5 255.8V266.6M998.5 258.6V264.9M999.5 260.1V267.6M1000.5 257.8V266.1M1001.5 257.6V265.9M1002.5 260.1V264.7M1003.5 256.3V271.6M1004.5 260.4V271.6M1005.5 253.1V271.6M1006.5 253.1V269.1M1007.5 261.3V268.9M1008.5 258.3V265.4M1009.5 258.5V265.8M1010.5 257.2V264.4M1011.5 255.0V268.9M1012.5 261.2V268.9M1013.5 260.0V264.6M1014.5 253.9V274.2M1015.5 252.7V263.4M1016.5 260.4V267.2M1017.5 259.4V267.6M1018.5 261.8V269.3M1019.5 258.2V271.4M1020.5 258.2V271.0M1021.5 260.9V267.5M1022.5 263.8V275.8M1023.5 260.4V266.4M1024.5 259.4V270.9M1025.5 263.7V273.1M1026.5 266.8V275.3M1027.5 260.2V268.2M1028.5 257.1V268.2M1029.5 258.4V269.8M1030.5 255.8V266.0M1031.5 259.8V268.4M1032.5 255.9V268.1M1033.5 262.2V268.9M1034.5 253.6V264.8M1035.5 254.0V270.0M1036.5 260.1V269.0M1037.5 258.0V263.5M1038.5 256.2V272.1M1039.5 264.4V272.0M1040.5 260.6V270.2M1041.5 259.8V265.8M1042.5 262.4V266.3M1043.5 260.1V266.6M1044.5 258.9V269.0M1045.5 254.6V264.9M1046.5 255.4V265.3M1047.5 259.8V266.2M1048.5 259.2V272.6M1049.5 253.6V270.0M1050.5 254.4V265.3M1051.5 256.1V270.7M1052.5 253.6V265.3M1053.5 256.9V266.5M1054.5 258.9V269.2M1055.5 263.0V276.8M1056.5 260.6V267.3M1057.5 258.4V267.3M1058.5 260.5V278.2M1059.5 259.2V278.2M1060.5 258.2V270.2M1061.5 258.2V262.6M1062.5 257.9V268.5M1063.5 257.9V268.8M1064.5 255.1V270.9M1065.5 267.0V274.8M1066.5 256.2V274.8M1067.5 261.9V268.1M1068.5 263.1V270.5M1069.5 259.1V271.1M1070.5 261.9V270.4M1071.5 256.0V269.1M1072.5 252.0V263.1M1073.5 251.2V270.6M1074.5 259.9V270.3M1075.5 263.1V269.2M1076.5 256.7V273.6M1077.5 259.9V268.7M1078.5 259.0V268.7M1079.5 263.6V272.4M1080.5 263.6V273.5M1081.5 260.8V271.8M1082.5 269.1V273.3M1083.5 253.8V271.4M1084.5 259.7V266.9M1085.5 266.3V272.6M1086.5 257.2V269.1M1087.5 250.4V267.0M1088.5 248.0V264.4M1089.5 256.4V269.4M1090.5 255.4V262.1M1091.5 259.0V266.1M1092.5 256.4V269.0M1093.5 252.5V269.5M1094.5 256.4V268.6M1095.5 257.7V270.9M1096.5 255.7V268.3M1097.5 263.7V272.3M1098.5 257.8V266.9M1099.5 250.7V268.2M1100.5 256.5V271.6M1101.5 263.9V267.7M1102.5 260.1V265.5M1103.5 249.5V262.9M1104.5 246.7V264.2M1105.5 255.9V275.3M1106.5 258.2V275.3M1107.5 258.4V267.9M1108.5 252.1V268.0M1109.5 249.5V261.5M1110.5 256.1V266.8M1111.5 251.6V259.1M1112.5 253.2V267.6M1113.5 257.0V267.0M1114.5 252.7V263.6M1115.5 255.3V269.3M1116.5 255.3V266.8M1117.5 261.7V274.1M1118.5 260.5V265.5M1119.5 263.5V271.8M1120.5 253.2V271.8M1121.5 253.7V262.7M1122.5 250.4V272.1M1123.5 247.6V266.7M1124.5 256.7V268.1M1125.5 251.3V266.0M1126.5 248.3V266.0M1127.5 255.7V276.4M1128.5 263.0V272.9M1129.5 260.2V274.0M1130.5 263.0V274.0M1131.5 265.1V270.6M1132.5 264.0V270.6M1133.5 264.9V275.9M1134.5 260.3V274.6M1135.5 253.5V265.2M1136.5 252.9V274.2M1137.5 263.2V277.4M1138.5 258.6V269.0M1139.5 260.8V271.5M1140.5 248.9V269.1M1141.5 251.7V266.6M1142.5 250.3V268.4M1143.5 260.8V271.4M1144.5 264.0V280.5M1145.5 254.8V269.5M1146.5 251.5V262.5M1147.5 252.9V261.9M1148.5 246.5V256.9M1149.5 255.9V269.8M1150.5 251.6V262.1M1151.5 253.0V265.0M1152.5 253.8V265.0M1153.5 260.1V268.0M1154.5 258.3V269.3M1155.5 262.0V276.9M1156.5 259.5V264.5M1157.5 249.8V269.1M1158.5 254.5V272.1M1159.5 252.4V272.1M1160.5 252.4V267.6M1161.5 255.7V276.8M1162.5 251.6V276.8M1163.5 248.1V265.9M1164.5 248.9V265.7M1165.5 248.7V262.0M1166.5 255.2V267.3M1167.5 255.6V274.2M1168.5 270.1V276.8M1169.5 252.2V270.4M1170.5 257.9V269.5M1171.5 262.9V279.9M1172.5 256.2V279.9M1173.5 261.7V270.5M1174.5 256.6V268.2M1175.5 262.8V274.9M1176.5 252.7V266.9M1177.5 262.8V272.1M1178.5 263.5V273.7M1179.5 253.5V264.7M1180.5 264.4V270.4M1181.5 243.3V267.2M1182.5 248.9V266.0M1183.5 251.7V266.1M1184.5 256.8V264.4M1185.5 258.5V269.5M1186.5 252.4V271.7M1187.5 260.3V271.1M1188.5 260.6V266.9M1189.5 257.0V266.9M1190.5 255.4V267.0M1191.5 258.1V270.3M1192.5 253.1V267.7M1193.5 253.6V266.9M1194.5 258.5V269.4M1195.5 251.7V266.6M1196.5 248.6V260.0M1197.5 254.1V263.3M1198.5 253.5V267.3M1199.5 249.2V259.5M1200.5 258.3V264.2M1201.5 259.1V269.0M1202.5 248.7V271.1M1203.5 254.5V271.1M1204.5 252.1V265.1M1205.5 253.2V271.7M1206.5 244.9V271.7M1207.5 244.9V263.2M1208.5 254.6V267.6M1209.5 250.5V267.6M1210.5 250.7V269.0M1211.5 257.2V272.1M1212.5 256.2V272.0M1213.5 261.5V275.6M1214.5 257.0V271.5M1215.5 253.4V269.2M1216.5 251.2V269.8M1217.5 258.0V271.3M1218.5 260.1V271.6M1219.5 257.7V265.7M1220.5 248.7V269.5M1221.5 261.7V269.5M1222.5 260.0V269.1M1223.5 255.4V266.1M1224.5 255.6V267.4M1225.5 254.5V270.6M1226.5 251.0V264.4M1227.5 257.7V264.6M1228.5 258.9V273.6M1229.5 250.1V273.3M1230.5 250.1V265.3M1231.5 258.6V270.1M1232.5 250.9V274.1M1233.5 262.8V274.1M1234.5 260.9V272.9M1235.5 265.1V275.7M1236.5 263.7V271.0M1237.5 259.4V270.7M1238.5 253.6V270.6M1239.5 258.3V269.9M1240.5 252.0V269.0M1241.5 251.3V267.3M1242.5 249.2V266.4M1243.5 246.2V273.0M1244.5 246.6V270.0M1245.5 259.9V267.2M1246.5 249.1V267.2M1247.5 249.1V267.2M1248.5 254.8V267.3M1249.5 266.4V275.6M1250.5 260.2V273.6M1251.5 255.1V267.9M1252.5 255.1V268.2M1253.5 266.7V274.1M1254.5 259.5V269.4M1255.5 257.0V268.4M1256.5 253.3V264.8M1257.5 257.1V274.5M1258.5 250.1V275.6M1259.5 254.2V264.3M1260.5 263.1V270.4M1261.5 261.9V269.5M1262.5 260.7V274.6M1263.5 256.5V267.5M1264.5 255.9V265.5M1265.5 254.0V263.1M1266.5 256.7V263.0M1267.5 256.7V266.0M1268.5 262.5V271.0M1269.5 251.7V269.9M1270.5 251.7V265.5M1271.5 254.2V261.6M1272.5 256.7V267.7M1273.5 255.7V268.8M1274.5 255.7V260.9M1275.5 255.2V272.1M1276.5 255.4V264.6M1277.5 255.4V268.6M1278.5 248.0V272.8M1279.5 257.0V272.8M1280.5 253.7V267.5M1281.5 255.9V265.7M1282.5 258.6V269.0M1283.5 259.9V268.6M1284.5 251.0V268.6M1285.5 259.4V272.8M1286.5 257.7V272.8M1287.5 252.9V264.0M1288.5 244.5V262.0M1289.5 253.4V278.5M1290.5 252.2V269.3M1291.5 252.2V269.0M1292.5 255.3V267.5M1293.5 255.3V270.3M1294.5 259.0V270.3M1295.5 252.5V268.0M1296.5 258.8V269.8M1297.5 249.3V263.3M1298.5 249.4V268.1M1299.5 261.8V269.2M1300.5 259.1V270.4M1301.5 251.7V273.3M1302.5 251.7V270.4M1303.5 253.3V269.3M1304.5 252.9V263.6M1305.5 254.1V274.8M1306.5 254.1V269.1M1307.5 250.2V261.2M1308.5 249.6V265.0M1309.5 257.0V272.5M1310.5 257.0V267.0M1311.5 266.2V272.2M1312.5 259.5V269.9M1313.5 247.8V259.5M1314.5 253.5V267.0M1315.5 262.2V268.7M1316.5 252.8V267.7M1317.5 250.9V263.5M1318.5 253.8V270.9M1319.5 255.7V270.9M1320.5 260.6V270.5M1321.5 264.4V272.6M1322.5 254.6V272.6M1323.5 252.7V269.1M1324.5 262.6V270.7M1325.5 258.3V268.1M1326.5 253.5V258.7M1327.5 255.9V270.6M1328.5 256.7V265.4M1329.5 250.6V266.5M1330.5 253.4V260.9M1331.5 251.5V265.7M1332.5 252.4V266.3M1333.5 254.4V265.9M1334.5 248.7V261.1M1335.5 248.7V264.7M1336.5 251.9V267.0M1337.5 260.5V268.4M1338.5 263.5V279.5M1339.5 259.9V279.5M1340.5 259.9V265.9M1341.5 255.0V265.5M1342.5 257.2V265.9M1343.5 252.6V265.8M1344.5 254.1V262.5M1345.5 256.8V273.2M1346.5 259.0V273.2M1347.5 255.5V268.8M1348.5 255.3V264.2M1349.5 255.3V274.4M1350.5 254.8V265.3M1351.5 258.5V271.6M1352.5 251.6V270.6M1353.5 251.6V265.9M1354.5 255.0V266.5M1355.5 255.4V268.0M1356.5 259.8V270.9M1357.5 249.9V267.7M1358.5 252.4V273.2M1359.5 259.6V275.0M1360.5 263.7V271.5M1361.5 259.7V267.0M1362.5 262.0V273.2M1363.5 258.8V273.2M1364.5 254.6V264.8M1365.5 253.2V265.4M1366.5 259.1V269.8M1367.5 257.4V273.0M1368.5 250.6V269.6M1369.5 249.0V269.6M1370.5 259.8V274.5M1371.5 263.5V275.4M1372.5 251.2V266.3M1373.5 256.9V264.5M1374.5 256.3V265.7M1375.5 257.9V267.7M1376.5 257.9V282.8M1377.5 255.4V267.9M1378.5 262.6V269.0M1379.5 251.6V264.9M1380.5 251.6V267.1M1381.5 250.8V268.4M1382.5 257.8V271.0M1383.5 262.1V278.3M1384.5 250.0V269.7M1385.5 259.3V269.9M1386.5 252.0V266.8M1387.5 255.4V269.8M1388.5 265.8V273.0M1389.5 254.9V268.6M1390.5 254.9V278.5M1391.5 255.6V271.4M1392.5 257.7V275.7M1393.5 263.1V275.0M1394.5 267.8V275.0M1395.5 251.3V273.8M1396.5 254.0V273.8M1397.5 245.8V264.8M1398.5 260.8V275.7M1399.5 259.4V275.6M1400.5 257.6V270.9M1401.5 257.6V273.1M1402.5 258.7V279.5M1403.5 260.6V271.1M1404.5 258.5V270.6M1405.5 262.4V272.0M1406.5 264.9V272.1M1407.5 257.0V264.9M1408.5 231.8V257.0M1409.5 189.2V231.8M1410.5 160.2V189.2M1411.5 147.7V160.9M1412.5 139.9V149.7M1413.5 143.0V150.2M1414.5 148.1V152.5M1415.5 151.5V154.8M1416.5 150.5V159.5M1417.5 157.4V162.4M1418.5 157.8V161.7M1419.5 157.8V168.2M1420.5 165.7V172.0M1421.5 169.3V176.8M1422.5 176.8V184.9M1423.5 183.8V191.1M1424.5 191.1V197.1M1425.5 197.1V202.2M1426.5 202.2V207.0M1427.5 207.0V211.4M1428.5 211.4V215.5M1429.5 215.5V219.3M1430.5 219.3V222.7M1431.5 222.7V225.9M1432.5 225.9V228.9M1433.5 228.9V231.6M1434.5 231.6V234.1M1435.5 234.1V236.5M1436.5 236.5V238.6M1437.5 238.6V240.6M1438.5 240.6V242.4M1439.5 242.4V244.1M1440.5 244.1V245.7M1441.5 245.7V247.1M1442.5 247.1V248.5M1443.5 248.4V249.8M1444.5 249.5V250.9M1445.5 250.6V252.0M1446.5 251.6V253.0M1447.5 252.6V254.0M1448.5 253.4V254.8M1449.5 254.2V255.6M1450.5 254.9V256.3M1451.5 255.6V257.0M1452.5 256.2V257.6M1453.5 256.8V258.2M1454.5 257.3V258.7M1455.5 257.8V259.2M1456.5 258.3V259.7M1457.5 258.7V260.1M1458.5 259.1V260.5M1459.5 259.4V260.8M1460.5 259.8V261.2M1461.5 260.1V261.5M1462.5 260.3V261.7M1463.5 260.6V262.0M1464.5 260.8V262.2M1465.5 261.1V262.5M1466.5 261.3V262.7M1467.5 261.5V262.9M1468.5 261.6V263.0M1469.5 261.8V263.2M1470.5 261.9V263.3M1471.5 262.1V263.5M1472.5 262.2V263.6M1473.5 262.3V263.7M1474.5 262.4V263.8M1475.5 262.5V263.9M1476.5 262.6V264.0M1477.5 262.7V264.1M1478.5 262.8V264.2M1479.5 262.8V264.2M1480.5 262.9V264.3M1481.5 263.0V264.4M1482.5 263.0V264.4M1483.5 263.1V264.5M1484.5 263.1V264.5M1485.5 263.2V264.6M1486.5 263.2V264.6M1487.5 263.2V264.6M1488.5 263.3V264.7M1489.5 263.3V264.7M1490.5 263.3V264.7M1491.5 263.4V264.8M1492.5 263.4V264.8M1493.5 263.4V264.8M1494.5 263.4V264.8M1495.5 263.5V264.9M1496.5 263.5V264.9M1497.5 263.5V264.9M1498.5 263.5V264.9M1499.5 263.5V264.9M1500.5 263.5V264.9M1501.5 263.6V265.0M1502.5 263.6V265.0M1503.5 263.6V265.0M1504.5 263.6V265.0M1505.5 263.6V265.0M1506.5 263.6V265.0M1507.5 263.6V265.0M1508.5 263.6V265.0M1509.5 263.6V265.0M1510.5 263.6V265.0M1511.5 263.6V265.0M1512.5 263.6V265.0M1513.5 263.6V265.0M1514.5 263.6V265.0M1515.5 263.7V265.1M1516.5 263.7V265.1M1517.5 263.7V265.1M1518.5 263.7V265.1M1519.5 263.7V265.1M1520.5 263.7V265.1M1521.5 263.7V265.1M1522.5 263.7V265.1M1523.5 263.7V265.1M1524.5 263.7V265.1M1525.5 263.7V265.1M1526.5 263.7V265.1M1527.5 263.7V265.1M1528.5 263.7V265.1M1529.5 263.7V265.1M1530.5 263.7V265.1M1531.5 263.7V265.1M1532.5 263.7V265.1M1533.5 263.7V265.1M1534.5 263.7V265.1M1535.5 263.7V265.1M1536.5 263.7V265.1M1537.5 263.7V265.1M1538.5 263.7V265.1M1539.5 263.7V265.1M1540.5 263.7V265.1M1541.5 263.7V265.1M1542.5 263.7V265.1M1543.5 263.7V265.1M1544.5 263.7V265.1M1545.5 263.7V265.1M1546.5 263.7V265.1M1547.5 263.7V265.1M1548.5 263.7V265.1M1549.5 263.7V265.1M1550.5 263.7V265.1M1551.5 263.7V265.1M1552.5 263.7V265.1M1553.5 263.7V265.1M1554.5 263.7V265.1M1555.5 263.7V265.1M1556.5 263.7V265.1M1557.5 263.7V265.1M1558.5 263.7V265.1M1559.5 263.7V265.1M1560.5 263.7V265.1M1561.5 263.7V265.1M1562.5 263.7V265.1M1563.5 263.7V265.1M1564.5 263.7V265.1M1565.5 263.7V265.1M1566.5 263.7V265.1M1567.5 263.7V265.1M1568.5 263.7V265.1M1569.5 263.7V265.1M1570.5 263.7V265.1M1571.5 263.7V265.1M1572.5 263.7V265.1M1573.5 263.7V265.1M1574.5 263.7V265.1M1575.5 263.7V265.1M1576.5 263.7V265.1M1577.5 263.7V265.1M1578.5 263.7V265.1M1579.5 263.7V265.1M1580.5 263.7V265.1M1581.5 263.7V265.1M1582.5 263.7V265.1M1583.5 263.7V265.1M1584.5 263.7V265.1M1585.5 263.7V265.1M1586.5 263.7V265.1M1587.5 263.7V265.1M1588.5 263.7V265.1M1589.5 263.7V265.1M1590.5 263.7V265.1M1591.5 263.7V265.1M1592.5 263.7V265.1M1593.5 263.7V265.1M1594.5 263.7V265.1M1595.5 263.7V265.1M1596.5 263.7V265.1M1597.5 263.7V265.1M1598.5 263.7V265.1M1599.5 263.7V265.1M1600.5 263.7V265.1M1601.5 263.7V265.1M1602.5 263.7V265.1M1603.5 263.7V265.1M1604.5 263.7V265.1M1605.5 263.7V265.1M1606.5 263.7V265.1M1607.5 263.7V265.1M1608.5 263.7V265.1M1609.5 263.7V265.1M1610.5 263.7V265.1M1611.5 263.7V265.1M1612.5 263.7V265.1M1613.5 263.7V265.1M1614.5 263.7V265.1M1615.5 263.7V265.1M1616.5 263.7V265.1M1617.5 263.7V265.1M1618.5 263.7V265.1M1619.5 263.7V265.1M1620.5 263.7V265.1M1621.5 263.7V265.1M1622.5 263.7V265.1M1623.5 263.7V265.1M1624.5 263.7V265.1M1625.5 263.7V265.1M1626.5 263.7V265.1M1627.5 263.7V265.1M1628.5 263.7V265.1M1629.5 263.7V265.1M1630.5 263.7V265.1M1631.5 263.7V265.1M1632.5 263.7V265.1M1633.5 263.7V265.1M1634.5 263.7V265.1M1635.5 263.7V265.1M1636.5 263.7V265.1M1637.5 263.7V265.1M1638.5 263.7V265.1M1639.5 263.7V265.1M1640.5 263.7V265.1M1641.5 263.7V265.1M1642.5 263.7V265.1M1643.5 263.7V265.1M1644.5 263.7V265.1M1645.5 263.7V265.1M1646.5 263.7V265.1M1647.5 263.7V265.1M1648.5 263.7V265.1M1649.5 263.7V265.1M1650.5 263.7V265.1M1651.5 263.7V265.1M1652.5 263.7V265.1M1653.5 263.7V265.1M1654.5 263.7V265.1M1655.5 263.7V265.1M1656.5 263.7V265.1M1657.5 263.7V265.1M1658.5 263.7V265.1M1659.5 263.7V265.1M1660.5 263.7V265.1M1661.5 263.7V265.1M1662.5 263.7V265.1M1663.5 263.7V265.1M1664.5 263.7V265.1M1665.5 263.7V265.1M1666.5 263.7V265.1M1667.5 263.7V265.1M1668.5 263.7V265.1M1669.5 263.7V265.1M1670.5 263.7V265.1M1671.5 263.7V265.1M1672.5 263.7V265.1M1673.5 263.7V265.1M1674.5 263.7V265.1M1675.5 263.7V265.1M1676.5 263.7V265.1M1677.5 263.7V265.1M1678.5 263.7V265.1M1679.5 263.7V265.1M1680.5 263.7V265.1M1681.5 263.7V265.1M1682.5 263.7V265.1M1683.5 263.7V265.1M1684.5 263.7V265.1M1685.5 263.7V265.1M1686.5 263.7V265.1M1687.5 263.7V265.1M1688.5 263.7V265.1M1689.5 263.7V265.1M1690.5 263.7V265.1M1691.5 263.7V265.1M1692.5 263.7V265.1M1693.5 263.7V265.1M1694.5 263.7V265.1M1695.5 263.7V265.1M1696.5 263.7V265.1M1697.5 263.7V265.1M1698.5 263.7V265.1M1699.5 263.7V265.1M1700.5 263.7V265.1M1701.5 263.7V265.1M1702.5 263.7V265.1M1703.5 263.7V265.1M1704.5 263.7V265.1M1705.5 263.7V265.1M1706.5 263.7V265.1M1707.5 263.7V265.1M1708.5 263.7V265.1M1709.5 263.7V265.1M1710.5 263.7V265.1M1711.5 263.7V265.1M1712.5 263.7V265.1M1713.5 263.7V265.1M1714.5 263.7V265.1M1715.5 263.7V265.1M1716.5 263.7V265.1M1717.5 263.7V265.1M1718.5 263.7V265.1M1719.5 263.7V265.1M1720.5 263.7V265.1M1721.5 263.7V265.1M1722.5 263.7V265.1M1723.5 263.7V265.1M1724.5 263.7V265.1M1725.5 263.7V265.1M1726.5 263.7V265.1M1727.5 263.7V265.1M1728.5 263.7V265.1M1729.5 263.7V265.1M1730.5 263.7V265.1M1731.5 263.7V265.1M1732.5 263.7V265.1M1733.5 263.7V265.1M1734.5 263.7V265.1M1735.5 263.7V265.1M1736.5 263.7V265.1M1737.5 263.7V265.1M1738.5 263.7V265.1M1739.5 263.7V265.1M1740.5 263.7V265.1M1741.5 263.7V265.1M1742.5 263.7V265.1M1743.5 263.7V265.1M1744.5 263.7V265.1M1745.5 263.7V265.1M1746.5 263.7V265.1M1747.5 263.7V265.1M1748.5 263.7V265.1M1749.5 263.7V265.1M1750.5 263.7V265.1" fill="none" stroke="#f4ee10" stroke-width="1.5"/>
<path d="M3.5 496.8V498.2M4.5 496.8V498.2M5.5 496.8V498.2M6.5 496.8V498.2M7.5 496.8V498.2M8.5 496.8V498.2M9.5 496.8V498.2M10.5 496.8V498.2M11.5 496.8V498.2M12.5 496.8V498.2M13.5 496.8V498.2M14.5 496.8V498.2M15.5 496.8V498.2M16.5 496.8V498.2M17.5 496.8V498.2M18.5 496.8V498.2M19.5 496.8V498.2M20.5 496.8V498.2M21.5 496.8V498.2M22.5 496.8V498.2M23.5 496.8V498.2M24.5 496.8V498.2M25.5 496.8V498.2M26.5 496.8V498.2M27.5 496.8V498.2M28.5 496.8V498.2M29.5 496.8V498.2M30.5 496.8V498.2M31.5 496.8V498.2M32.5 496.8V498.2M33.5 496.8V498.2M34.5 496.8V498.2M35.5 496.8V498.2M36.5 496.8V498.2M37.5 496.8V498.2M38.5 496.8V498.2M39.5 496.8V498.2M40.5 496.8V498.2M41.5 496.8V498.2M42.5 496.8V498.2M43.5 496.8V498.2M44.5 496.8V498.2M45.5 496.8V498.2M46.5 496.8V498.2M47.5 496.7V498.1M48.5 496.7V498.1M49.5 496.7V498.1M50.5 496.7V498.1M51.5 496.7V498.1M52.5 496.7V498.1M53.5 496.7V498.1M54.5 496.7V498.1M55.5 496.7V498.1M56.5 496.7V498.1M57.5 496.7V498.1M58.5 496.7V498.1M59.5 496.7V498.1M60.5 496.7V498.1M61.5 496.7V498.1M62.5 496.7V498.1M63.5 496.7V498.1M64.5 496.7V498.1M65.5 496.7V498.1M66.5 496.7V498.1M67.5 496.7V498.1M68.5 496.7V498.1M69.5 496.7V498.1M70.5 496.7V498.1M71.5 496.7V498.1M72.5 496.7V498.1M73.5 496.7V498.1M74.5 496.7V498.1M75.5 496.7V498.1M76.5 496.7V498.1M77.5 496.7V498.1M78.5 496.7V498.1M79.5 496.7V498.1M80.5 496.7V498.1M81.5 496.7V498.1M82.5 496.7V498.1M83.5 496.7V498.1M84.5 496.7V498.1M85.5 496.7V498.1M86.5 496.7V498.1M87.5 496.7V498.1M88.5 496.7V498.1M89.5 496.7V498.1M90.5 496.7V498.1M91.5 496.7V498.1M92.5 496.7V498.1M93.5 496.7V498.1M94.5 496.7V498.1M95.5 496.7V498.1M96.5 496.7V498.1M97.5 496.7V498.1M98.5 496.7V498.1M99.5 496.7V498.1M100.5 496.7V498.1M101.5 496.7V498.1M102.5 496.7V498.1M103.5 496.7V498.1M104.5 496.7V498.1M105.5 496.7V498.1M106.5 496.7V498.1M107.5 496.7V498.1M108.5 496.7V498.1M109.5 496.7V498.1M110.5 496.7V498.1M111.5 496.7V498.1M112.5 496.7V498.1M113.5 496.7V498.1M114.5 496.7V498.1M115.5 496.7V498.1M116.5 496.7V498.1M117.5 496.7V498.1M118.5 496.7V498.1M119.5 496.7V498.1M120.5 496.7V498.1M121.5 496.7V498.1M122.5 496.7V498.1M123.5 496.7V498.1M124.5 496.7V498.1M125.5 496.7V498.1M126.5 496.7V498.1M127.5 496.7V498.1M128.5 496.7V498.1M129.5 496.7V498.1M130.5 496.7V498.1M131.5 496.7V498.1M132.5 496.7V498.1M133.5 496.7V498.1M134.5 496.7V498.1M135.5 496.7V498.1M136.5 496.6V498.0M137.5 496.6V498.0M138.5 496.6V498.0M139.5 496.6V498.0M140.5 496.6V498.0M141.5 496.6V498.0M142.5 496.6V498.0M143.5 496.6V498.0M144.5 496.6V498.0M145.5 496.6V498.0M146.5 496.6V498.0M147.5 496.6V498.0M148.5 496.6V498.0M149.5 496.6V498.0M150.5 496.6V498.0M151.5 496.6V498.0M152.5 496.6V498.0M153.5 496.6V498.0M154.5 496.6V498.0M155.5 496.6V498.0M156.5 496.6V498.0M157.5 496.6V498.0M158.5 496.6V498.0M159.5 496.6V498.0M160.5 496.6V498.0M161.5 496.6V498.0M162.5 496.6V498.0M163.5 496.6V498.0M164.5 496.6V498.0M165.5 496.6V498.0M166.5 496.6V498.0M167.5 496.6V498.0M168.5 496.6V498.0M169.5 496.6V498.0M170.5 496.6V498.0M171.5 496.6V498.0M172.5 496.6V498.0M173.5 496.6V498.0M174.5 496.6V498.0M175.5 496.6V498.0M176.5 496.6V498.0M177.5 496.6V498.0M178.5 496.6V498.0M179.5 496.6V498.0M180.5 496.6V498.0M181.5 496.5V497.9M182.5 496.5V497.9M183.5 496.7V498.1M184.5 496.5V497.9M185.5 497.0V498.4M186.5 496.6V498.0M187.5 496.7V498.1M188.5 496.7V498.1M189.5 496.3V497.7M190.5 496.4V497.8M191.5 496.1V497.5M192.5 496.3V497.7M193.5 496.5V497.9M194.5 496.1V497.5M195.5 496.7V498.1M196.5 496.8V498.2M197.5 496.3V497.7M198.5 496.3V497.7M199.5 496.5V497.9M200.5 496.8V498.2M201.5 495.9V497.3M202.5 496.9V498.3M203.5 496.2V498.4M204.5 495.8V497.2M205.5 496.6V498.0M206.5 496.8V498.2M207.5 496.6V498.0M208.5 496.2V497.6M209.5 496.3V497.7M210.5 496.3V497.7M211.5 496.5V497.9M212.5 496.7V498.1M213.5 496.5V497.9M214.5 496.5V498.0M215.5 496.5V497.9M216.5 496.6V498.0M217.5 496.7V498.1M218.5 496.9V498.3M219.5 497.0V498.4M220.5 496.9V498.3M221.5 496.3V497.7M222.5 496.8V498.2M223.5 496.6V498.2M224.5 496.3V497.7M225.5 496.1V497.5M226.5 496.2V497.6M227.5 497.2V498.6M228.5 496.8V498.2M229.5 496.0V497.4M230.5 496.2V497.6M231.5 496.2V497.6M232.5 496.3V497.7M233.5 496.6V498.0M234.5 496.9V498.3M235.5 496.2V497.6M236.5 496.0V497.4M237.5 496.3V497.7M238.5 496.5V497.9M239.5 496.2V497.6M240.5 496.3V497.7M241.5 496.1V497.5M242.5 496.1V497.5M243.5 495.7V497.3M244.5 495.7V498.0M245.5 496.8V498.2M246.5 496.6V498.0M247.5 496.4V497.8M248.5 496.6V498.0M249.5 496.2V497.6M250.5 495.7V497.1M251.5 496.0V497.4M252.5 496.5V497.9M253.5 496.4V497.8M254.5 496.8V498.2M255.5 496.0V497.4M256.5 496.5V497.9M257.5 496.3V497.7M258.5 496.6V498.1M259.5 496.7V498.1M260.5 496.3V497.7M261.5 495.8V497.7M262.5 497.0V498.4M263.5 496.1V497.5M264.5 496.2V497.6M265.5 496.3V497.7M266.5 496.6V498.0M267.5 495.6V497.8M268.5 495.3V496.7M269.5 496.1V497.5M270.5 496.4V497.8M271.5 497.0V498.4M272.5 496.6V498.0M273.5 496.4V497.8M274.5 496.1V497.5M275.5 496.1V497.5M276.5 495.8V497.2M277.5 495.2V496.6M278.5 496.1V497.5M279.5 496.7V498.1M280.5 496.5V497.9M281.5 495.9V497.3M282.5 496.4V497.8M283.5 496.4V497.8M284.5 496.3V497.7M285.5 496.2V497.6M286.5 495.7V497.1M287.5 495.9V497.3M288.5 495.8V497.2M289.5 496.1V497.5M290.5 496.1V497.5M291.5 496.3V497.7M292.5 496.0V497.4M293.5 496.6V498.0M294.5 496.4V497.8M295.5 496.0V497.4M296.5 496.1V497.5M297.5 495.6V497.0M298.5 496.1V497.9M299.5 495.5V497.9M300.5 495.3V496.7M301.5 495.8V497.2M302.5 495.8V497.6M303.5 495.6V497.0M304.5 496.0V497.4M305.5 496.1V497.5M306.5 496.4V497.8M307.5 497.0V498.4M308.5 496.6V498.0M309.5 495.8V497.2M310.5 496.3V498.3M311.5 495.9V497.6M312.5 496.2V497.6M313.5 495.5V496.9M314.5 496.0V497.4M315.5 495.8V497.2M316.5 495.9V497.5M317.5 496.0V497.4M318.5 495.9V497.3M319.5 496.0V497.4M320.5 495.9V497.3M321.5 495.3V496.7M322.5 496.2V497.6M323.5 497.0V498.4M324.5 496.4V497.8M325.5 496.1V497.6M326.5 496.2V497.6M327.5 496.7V498.1M328.5 496.7V498.1M329.5 496.8V498.2M330.5 495.8V497.3M331.5 496.1V497.5M332.5 496.1V497.5M333.5 495.6V497.0M334.5 495.9V497.3M335.5 496.3V497.7M336.5 495.9V497.3M337.5 495.9V497.6M338.5 496.7V498.1M339.5 496.1V497.6M340.5 496.3V497.7M341.5 496.2V498.3M342.5 496.9V498.3M343.5 497.0V498.4M344.5 496.7V498.1M345.5 496.8V498.2M346.5 496.1V497.6M347.5 495.9V497.3M348.5 495.6V497.0M349.5 495.9V498.0M350.5 496.0V497.5M351.5 496.1V497.8M352.5 496.4V497.8M353.5 495.8V497.2M354.5 496.2V497.6M355.5 497.0V498.4M356.5 496.0V498.3M357.5 495.8V497.2M358.5 496.0V497.4M359.5 496.0V497.4M360.5 495.8V497.2M361.5 496.5V497.9M362.5 495.7V497.7M363.5 495.7V497.8M364.5 496.3V497.7M365.5 496.4V497.8M366.5 495.6V497.2M367.5 495.8V497.2M368.5 495.7V497.1M369.5 495.9V497.3M370.5 495.7V497.1M371.5 495.8V497.5M372.5 496.4V497.8M373.5 495.9V497.5M374.5 495.5V496.9M375.5 495.8V497.3M376.5 495.0V496.4M377.5 495.9V497.3M378.5 496.1V497.5M379.5 495.3V496.7M380.5 496.1V497.5M381.5 496.3V497.7M382.5 495.6V497.1M383.5 496.0V497.4M384.5 496.4V497.8M385.5 496.3V497.7M386.5 496.2V497.6M387.5 495.9V497.6M388.5 495.4V496.8M389.5 495.8V497.2M390.5 496.2V497.6M391.5 495.9V497.3M392.5 495.6V497.0M393.5 496.2V497.6M394.5 496.0V497.4M395.5 495.8V497.2M396.5 496.0V497.4M397.5 495.6V497.0M398.5 495.6V497.0M399.5 495.6V497.1M400.5 495.6V497.4M401.5 495.6V497.8M402.5 496.3V497.8M403.5 496.1V497.6M404.5 495.9V497.6M405.5 496.4V497.8M406.5 495.7V497.1M407.5 495.7V498.0M408.5 496.3V498.0M409.5 495.4V496.8M410.5 495.5V496.9M411.5 496.0V497.4M412.5 496.6V498.0M413.5 495.8V497.2M414.5 495.5V496.9M415.5 496.0V497.9M416.5 496.0V497.5M417.5 496.5V497.9M418.5 496.1V497.5M419.5 496.3V497.7M420.5 496.1V497.5M421.5 496.0V497.4M422.5 495.0V496.4M423.5 496.0V497.4M424.5 495.4V496.8M425.5 495.5V496.9M426.5 496.0V497.4M427.5 495.6V497.0M428.5 496.1V497.5M429.5 496.2V497.6M430.5 495.7V497.1M431.5 495.8V497.2M432.5 495.9V497.3M433.5 496.6V498.0M434.5 496.0V497.5M435.5 495.7V497.3M436.5 497.1V498.5M437.5 496.0V497.8M438.5 496.1V497.5M439.5 495.6V497.0M440.5 496.3V497.7M441.5 496.0V497.4M442.5 495.6V497.0M443.5 495.5V497.1M444.5 495.5V497.4M445.5 495.3V496.7M446.5 495.4V496.8M447.5 495.5V496.9M448.5 495.0V496.4M449.5 495.2V496.9M450.5 495.4V496.8M451.5 495.4V496.8M452.5 494.7V496.1M453.5 494.8V496.2M454.5 494.8V496.2M455.5 495.7V497.5M456.5 496.3V497.7M457.5 496.0V497.4M458.5 496.0V497.4M459.5 496.0V497.4M460.5 495.9V497.3M461.5 495.9V497.3M462.5 495.9V497.9M463.5 495.4V496.8M464.5 495.8V497.2M465.5 495.8V497.8M466.5 496.9V498.3M467.5 495.8V497.2M468.5 495.7V497.1M469.5 496.1V497.5M470.5 495.9V497.3M471.5 495.6V497.0M472.5 495.6V497.1M473.5 495.6V497.0M474.5 494.7V496.1M475.5 495.4V496.8M476.5 495.7V497.1M477.5 495.6V497.0M478.5 494.7V496.1M479.5 495.6V497.1M480.5 495.7V497.7M481.5 494.5V496.1M482.5 496.0V497.9M483.5 495.0V496.9M484.5 495.0V496.5M485.5 494.9V496.5M486.5 495.0V496.6M487.5 496.0V497.4M488.5 495.5V496.9M489.5 494.8V497.6M490.5 494.8V496.2M491.5 495.1V496.5M492.5 496.2V497.6M493.5 495.9V497.3M494.5 494.8V498.1M495.5 494.5V495.9M496.5 495.3V498.3M497.5 495.1V497.0M498.5 495.1V496.7M499.5 495.9V497.4M500.5 494.8V496.2M501.5 495.2V496.6M502.5 495.5V496.9M503.5 494.6V496.7M504.5 494.4V495.8M505.5 495.7V497.1M506.5 495.6V497.0M507.5 495.1V497.2M508.5 496.1V497.6M509.5 494.8V497.6M510.5 495.3V497.4M511.5 495.2V496.6M512.5 495.4V496.8M513.5 494.3V496.5M514.5 495.6V497.0M515.5 495.9V497.3M516.5 495.6V497.0M517.5 495.6V497.2M518.5 495.7V498.2M519.5 496.5V497.9M520.5 495.6V497.0M521.5 495.7V497.1M522.5 495.7V497.1M523.5 495.4V497.1M524.5 496.0V497.4M525.5 494.4V496.9M526.5 495.3V497.7M527.5 495.5V497.6M528.5 495.0V496.4M529.5 495.2V496.9M530.5 495.2V497.3M531.5 495.1V496.5M532.5 494.3V496.1M533.5 494.0V496.7M534.5 495.5V496.9M535.5 494.9V496.3M536.5 494.3V497.0M537.5 494.8V497.3M538.5 494.6V496.0M539.5 494.1V495.5M540.5 494.2V496.4M541.5 494.3V496.2M542.5 495.2V496.9M543.5 494.8V496.9M544.5 495.0V496.5M545.5 495.4V496.8M546.5 494.7V496.1M547.5 495.5V496.9M548.5 495.6V497.0M549.5 494.6V496.0M550.5 494.5V495.9M551.5 494.9V496.6M552.5 494.7V496.9M553.5 494.4V496.3M554.5 494.8V496.2M555.5 494.9V496.6M556.5 495.0V496.6M557.5 495.2V496.6M558.5 496.1V498.3M559.5 494.5V497.7M560.5 495.8V497.2M561.5 496.1V497.5M562.5 496.0V497.4M563.5 496.1V497.5M564.5 496.2V497.6M565.5 495.0V497.5M566.5 495.0V497.2M567.5 496.0V498.3M568.5 494.6V496.0M569.5 495.1V496.7M570.5 495.6V497.0M571.5 495.2V496.6M572.5 495.5V496.9M573.5 495.6V497.0M574.5 495.8V497.2M575.5 495.1V496.7M576.5 495.4V496.8M577.5 494.6V496.5M578.5 495.3V496.7M579.5 495.5V497.1M580.5 495.5V497.1M581.5 495.2V496.6M582.5 494.5V496.0M583.5 494.5V495.9M584.5 494.6V496.3M585.5 494.3V496.3M586.5 494.3V496.6M587.5 494.5V495.9M588.5 494.1V495.5M589.5 493.9V496.2M590.5 493.3V494.7M591.5 494.2V495.6M592.5 494.9V496.3M593.5 493.9V495.5M594.5 494.8V496.3M595.5 494.9V497.6M596.5 493.6V496.7M597.5 493.3V496.4M598.5 494.5V495.9M599.5 495.3V497.7M600.5 495.0V496.8M601.5 494.8V496.4M602.5 494.7V496.1M603.5 494.8V496.2M604.5 494.6V496.4M605.5 495.6V497.1M606.5 496.1V497.5M607.5 496.3V497.7M608.5 494.9V497.1M609.5 495.1V496.6M610.5 494.6V497.1M611.5 495.0V497.7M612.5 493.6V495.4M613.5 493.7V498.1M614.5 495.1V498.1M615.5 495.7V498.0M616.5 493.6V497.8M617.5 493.6V496.6M618.5 493.8V497.2M619.5 495.8V497.2M620.5 494.2V496.8M621.5 494.1V496.9M622.5 496.4V498.1M623.5 495.9V498.1M624.5 495.3V497.1M625.5 495.8V497.2M626.5 493.0V496.8M627.5 495.4V497.4M628.5 494.7V496.7M629.5 493.8V495.3M630.5 495.3V497.8M631.5 495.6V497.6M632.5 492.9V495.6M633.5 494.4V497.5M634.5 494.4V496.8M635.5 493.7V496.4M636.5 491.7V494.8M637.5 494.2V495.6M638.5 494.7V496.3M639.5 495.0V497.1M640.5 495.7V497.1M641.5 494.7V496.9M642.5 492.8V496.9M643.5 492.8V495.8M644.5 495.2V496.7M645.5 493.7V495.5M646.5 494.5V496.2M647.5 495.1V496.7M648.5 495.5V496.9M649.5 492.7V495.8M650.5 494.4V495.8M651.5 495.4V497.9M652.5 493.0V495.6M653.5 493.4V496.1M654.5 492.7V494.9M655.5 494.3V496.0M656.5 493.1V495.2M657.5 494.0V497.8M658.5 494.1V495.7M659.5 493.8V495.9M660.5 492.5V493.9M661.5 493.3V495.4M662.5 494.0V497.1M663.5 494.0V497.2M664.5 494.8V497.2M665.5 493.4V496.4M666.5 493.4V496.8M667.5 495.6V497.0M668.5 495.6V498.4M669.5 494.1V496.6M670.5 495.8V497.2M671.5 494.8V496.8M672.5 495.3V497.7M673.5 494.3V495.7M674.5 494.8V496.2M675.5 494.1V496.0M676.5 494.3V496.3M677.5 494.3V498.8M678.5 494.3V498.3M679.5 495.5V497.5M680.5 494.9V496.3M681.5 494.9V496.9M682.5 494.1V496.1M683.5 494.1V497.1M684.5 494.8V496.6M685.5 495.8V497.2M686.5 493.0V497.1M687.5 494.3V496.0M688.5 493.0V495.4M689.5 493.5V497.3M690.5 494.7V497.1M691.5 494.8V498.0M692.5 492.7V498.0M693.5 493.5V496.7M694.5 496.1V497.6M695.5 493.5V496.3M696.5 491.8V495.5M697.5 494.2V495.6M698.5 493.4V495.4M699.5 493.9V497.1M700.5 495.4V496.9M701.5 493.1V496.3M702.5 491.6V493.4M703.5 492.3V496.2M704.5 492.0V496.4M705.5 494.6V496.1M706.5 493.4V494.8M707.5 491.6V494.5M708.5 493.6V497.4M709.5 492.6V496.2M710.5 493.8V495.2M711.5 493.1V495.6M712.5 493.7V496.5M713.5 495.4V498.4M714.5 491.8V495.4M715.5 494.2V495.6M716.5 493.8V495.5M717.5 492.1V493.8M718.5 492.9V496.5M719.5 495.7V497.2M720.5 493.0V496.6M721.5 493.4V496.6M722.5 493.9V495.5M723.5 493.2V494.8M724.5 493.5V496.4M725.5 493.0V495.0M726.5 493.0V495.3M727.5 494.7V496.3M728.5 494.6V496.0M729.5 494.3V497.1M730.5 495.4V497.8M731.5 495.4V497.0M732.5 490.7V495.5M733.5 490.7V495.5M734.5 492.5V495.5M735.5 493.6V496.7M736.5 493.4V497.6M737.5 492.8V498.0M738.5 492.8V497.9M739.5 494.5V497.5M740.5 493.2V498.4M741.5 493.8V496.5M742.5 494.2V497.2M743.5 492.7V494.2M744.5 493.7V496.5M745.5 492.8V496.5M746.5 494.1V497.3M747.5 493.7V495.1M748.5 493.9V495.3M749.5 492.6V494.9M750.5 493.1V494.9M751.5 492.8V494.7M752.5 492.6V495.6M753.5 493.7V497.3M754.5 493.4V495.8M755.5 493.4V496.6M756.5 493.2V495.3M757.5 492.5V493.9M758.5 493.0V494.8M759.5 494.4V498.1M760.5 491.5V496.0M761.5 493.5V496.0M762.5 494.1V496.9M763.5 492.3V496.9M764.5 492.5V498.3M765.5 493.3V498.3M766.5 493.5V497.9M767.5 496.1V497.5M768.5 494.3V496.4M769.5 494.4V496.3M770.5 494.3V498.1M771.5 494.3V497.7M772.5 494.4V495.8M773.5 494.4V495.9M774.5 492.3V494.4M775.5 491.2V498.9M776.5 496.5V498.9M777.5 492.8V497.7M778.5 492.7V496.4M779.5 493.8V498.9M780.5 496.8V498.2M781.5 494.2V496.9M782.5 493.7V496.6M783.5 493.2V494.6M784.5 494.4V496.2M785.5 494.2V496.3M786.5 493.0V497.4M787.5 493.1V495.9M788.5 491.2V495.6M789.5 491.7V496.5M790.5 492.0V496.5M791.5 492.4V494.7M792.5 492.7V495.5M793.5 490.9V495.0M794.5 491.7V496.5M795.5 493.8V497.1M796.5 492.1V496.2M797.5 492.1V495.6M798.5 492.8V495.1M799.5 492.0V495.2M800.5 492.0V495.3M801.5 493.6V495.3M802.5 493.8V498.3M803.5 496.5V498.3M804.5 493.8V496.5M805.5 493.9V500.0M806.5 493.8V499.9M807.5 494.3V496.1M808.5 493.7V495.2M809.5 490.4V493.9M810.5 491.8V493.2M811.5 492.3V497.0M812.5 492.3V496.9M813.5 492.1V497.9M814.5 492.8V497.9M815.5 495.5V496.9M816.5 492.9V495.9M817.5 492.9V496.5M818.5 492.6V496.5M819.5 492.5V496.6M820.5 494.5V495.9M821.5 494.6V498.7M822.5 490.4V496.0M823.5 490.4V496.3M824.5 494.2V495.8M825.5 494.3V496.8M826.5 493.0V497.0M827.5 496.4V498.6M828.5 494.0V498.6M829.5 494.1V498.4M830.5 493.5V497.6M831.5 493.5V495.6M832.5 494.8V497.2M833.5 489.4V497.2M834.5 492.1V495.3M835.5 495.3V496.7M836.5 493.9V496.7M837.5 494.1V496.6M838.5 494.0V495.6M839.5 493.0V495.3M840.5 491.2V494.7M841.5 489.7V495.5M842.5 493.1V495.5M843.5 492.7V494.2M844.5 492.7V496.6M845.5 490.9V495.8M846.5 490.5V496.0M847.5 495.1V496.5M848.5 492.9V495.2M849.5 493.9V496.4M850.5 492.0V493.9M851.5 490.7V494.3M852.5 492.8V497.1M853.5 494.8V497.1M854.5 493.1V497.4M855.5 492.4V494.1M856.5 492.8V496.5M857.5 492.4V496.9M858.5 496.8V498.3M859.5 492.4V496.9M860.5 492.0V497.5M861.5 490.3V498.4M862.5 492.0V495.6M863.5 491.8V495.2M864.5 491.8V495.9M865.5 491.4V495.2M866.5 491.9V495.5M867.5 493.3V495.7M868.5 494.3V497.4M869.5 492.0V495.2M870.5 493.1V495.3M871.5 489.6V494.3M872.5 488.4V492.8M873.5 491.2V494.2M874.5 492.2V494.2M875.5 491.7V496.8M876.5 490.6V494.9M877.5 487.5V495.3M878.5 488.1V495.6M879.5 492.9V496.4M880.5 493.0V496.1M881.5 495.2V498.3M882.5 490.5V496.8M883.5 490.5V497.1M884.5 489.9V495.3M885.5 491.8V496.0M886.5 492.3V497.4M887.5 492.2V493.6M888.5 492.4V497.1M889.5 492.7V498.2M890.5 490.8V495.0M891.5 492.3V495.7M892.5 492.1V495.5M893.5 494.1V499.8M894.5 493.7V496.0M895.5 492.2V495.1M896.5 494.0V497.3M897.5 494.3V496.9M898.5 492.5V497.4M899.5 491.3V497.4M900.5 491.5V495.3M901.5 490.6V494.6M902.5 491.1V494.6M903.5 492.3V494.8M904.5 490.6V495.5M905.5 492.6V495.9M906.5 492.8V497.3M907.5 492.2V497.3M908.5 492.2V495.0M909.5 494.1V496.4M910.5 491.7V497.0M911.5 491.7V494.4M912.5 490.5V494.0M913.5 490.3V493.0M914.5 490.3V498.3M915.5 492.2V498.3M916.5 490.2V492.8M917.5 490.2V494.9M918.5 492.7V496.7M919.5 493.9V497.2M920.5 492.1V494.0M921.5 492.2V496.2M922.5 493.6V495.6M923.5 491.1V493.8M924.5 489.3V495.3M925.5 493.3V496.8M926.5 492.7V494.1M927.5 493.2V495.5M928.5 490.3V494.6M929.5 490.8V498.5M930.5 493.3V498.3M931.5 490.9V497.6M932.5 490.9V496.8M933.5 490.9V496.8M934.5 490.1V495.1M935.5 488.8V494.8M936.5 488.8V495.6M937.5 495.3V498.6M938.5 492.8V497.8M939.5 492.5V494.9M940.5 492.1V495.0M941.5 492.1V494.9M942.5 490.5V495.4M943.5 491.5V494.8M944.5 489.5V492.1M945.5 489.3V492.2M946.5 490.0V495.8M947.5 488.7V495.8M948.5 488.9V492.9M949.5 491.9V496.4M950.5 492.7V496.9M951.5 490.8V494.5M952.5 490.1V496.6M953.5 488.4V493.8M954.5 488.4V494.8M955.5 492.2V496.1M956.5 494.3V497.0M957.5 492.5V496.9M958.5 492.6V495.1M959.5 493.7V499.1M960.5 491.9V494.9M961.5 492.6V496.9M962.5 492.2V493.6M963.5 489.8V493.6M964.5 493.2V496.4M965.5 491.2V496.4M966.5 491.2V494.9M967.5 491.7V494.8M968.5 491.8V494.8M969.5 491.4V494.6M970.5 492.1V496.0M971.5 489.9V497.4M972.5 492.6V499.1M973.5 490.7V497.2M974.5 488.8V494.6M975.5 493.6V495.9M976.5 489.7V493.7M977.5 492.5V496.5M978.5 488.5V493.5M979.5 490.0V494.5M980.5 490.3V494.4M981.5 491.7V498.2M982.5 490.7V494.4M983.5 485.7V492.4M984.5 488.8V493.3M985.5 489.7V498.8M986.5 491.9V498.8M987.5 491.9V495.6M988.5 490.2V493.8M989.5 488.7V494.3M990.5 488.7V496.9M991.5 486.0V492.3M992.5 489.7V492.4M993.5 492.4V498.1M994.5 487.5V497.1M995.5 487.2V495.4M996.5 490.4V495.1M997.5 490.7V496.7M998.5 489.7V494.0M999.5 491.2V497.2M1000.5 487.6V497.2M1001.5 492.4V497.3M1002.5 490.5V497.5M1003.5 490.5V495.2M1004.5 488.3V491.8M1005.5 487.7V492.0M1006.5 486.9V494.0M1007.5 491.1V494.0M1008.5 490.3V495.3M1009.5 488.4V494.7M1010.5 488.4V492.6M1011.5 488.5V491.4M1012.5 489.4V494.3M1013.5 491.9V495.1M1014.5 487.7V491.9M1015.5 487.7V490.4M1016.5 490.4V493.8M1017.5 488.2V494.1M1018.5 488.2V493.5M1019.5 490.0V496.5M1020.5 489.4V496.4M1021.5 482.6V490.3M1022.5 490.1V491.5M1023.5 491.4V498.5M1024.5 490.3V497.0M1025.5 487.3V492.9M1026.5 485.5V491.3M1027.5 484.5V487.9M1028.5 487.9V494.2M1029.5 482.1V492.4M1030.5 481.4V488.6M1031.5 488.6V491.0M1032.5 489.1V495.0M1033.5 489.7V494.3M1034.5 489.2V494.3M1035.5 489.1V494.1M1036.5 488.7V496.0M1037.5 489.6V496.0M1038.5 488.0V491.6M1039.5 491.3V495.8M1040.5 491.1V496.4M1041.5 490.4V498.3M1042.5 490.4V495.4M1043.5 490.2V494.5M1044.5 489.2V498.9M1045.5 485.4V496.0M1046.5 483.4V490.1M1047.5 485.4V493.1M1048.5 488.8V492.3M1049.5 485.6V491.8M1050.5 484.9V489.5M1051.5 487.8V492.5M1052.5 491.6V494.2M1053.5 491.6V496.8M1054.5 486.3V495.5M1055.5 486.3V489.9M1056.5 485.8V495.6M1057.5 485.2V494.8M1058.5 491.2V494.6M1059.5 486.3V491.2M1060.5 483.8V488.2M1061.5 487.5V489.8M1062.5 485.7V490.5M1063.5 484.8V491.6M1064.5 481.8V486.7M1065.5 486.7V491.2M1066.5 487.5V491.3M1067.5 484.8V489.6M1068.5 484.8V489.1M1069.5 484.7V487.9M1070.5 487.5V489.7M1071.5 488.2V494.3M1072.5 487.8V494.7M1073.5 486.2V492.4M1074.5 485.7V492.9M1075.5 486.1V492.4M1076.5 489.0V494.6M1077.5 486.4V493.9M1078.5 480.5V486.4M1079.5 480.5V493.2M1080.5 489.1V496.0M1081.5 487.8V493.0M1082.5 487.9V494.4M1083.5 484.3V493.7M1084.5 486.3V493.6M1085.5 485.8V489.5M1086.5 485.8V491.8M1087.5 482.5V488.1M1088.5 483.7V489.2M1089.5 487.2V492.7M1090.5 485.6V493.8M1091.5 485.6V494.1M1092.5 484.2V489.9M1093.5 485.9V490.8M1094.5 482.7V489.9M1095.5 483.0V493.8M1096.5 486.2V492.2M1097.5 485.2V489.1M1098.5 485.1V490.6M1099.5 480.3V488.8M1100.5 488.8V493.0M1101.5 480.2V489.7M1102.5 480.4V490.2M1103.5 480.4V491.1M1104.5 484.5V494.5M1105.5 480.8V490.9M1106.5 484.3V490.9M1107.5 488.5V494.4M1108.5 481.8V493.4M1109.5 483.8V492.0M1110.5 488.6V495.8M1111.5 483.2V494.2M1112.5 485.5V492.9M1113.5 477.6V485.7M1114.5 477.6V488.8M1115.5 484.8V492.7M1116.5 480.8V489.6M1117.5 483.2V490.7M1118.5 485.1V489.2M1119.5 485.1V491.5M1120.5 484.9V491.5M1121.5 482.8V490.5M1122.5 486.3V491.0M1123.5 485.9V489.0M1124.5 485.7V492.7M1125.5 488.4V492.7M1126.5 486.7V493.6M1127.5 485.2V491.8M1128.5 487.0V492.4M1129.5 486.6V489.8M1130.5 486.9V492.3M1131.5 483.3V489.7M1132.5 480.9V490.0M1133.5 484.4V489.5M1134.5 487.7V490.7M1135.5 482.4V490.5M1136.5 481.0V488.0M1137.5 481.0V490.1M1138.5 486.3V490.9M1139.5 482.1V491.0M1140.5 484.5V490.2M1141.5 485.4V491.4M1142.5 484.9V496.1M1143.5 476.4V486.3M1144.5 480.6V490.9M1145.5 480.6V489.4M1146.5 487.2V496.6M1147.5 482.0V496.6M1148.5 482.0V493.4M1149.5 477.6V484.7M1150.5 483.3V492.0M1151.5 488.2V494.0M1152.5 479.6V488.2M1153.5 479.6V489.3M1154.5 486.1V490.9M1155.5 479.3V490.9M1156.5 484.3V488.6M1157.5 484.2V488.7M1158.5 488.1V494.5M1159.5 483.7V490.6M1160.5 483.7V491.5M1161.5 483.3V488.0M1162.5 483.8V488.4M1163.5 479.5V487.1M1164.5 481.9V489.1M1165.5 483.2V494.5M1166.5 479.3V492.2M1167.5 479.4V492.4M1168.5 482.8V492.4M1169.5 482.8V489.3M1170.5 487.0V493.1M1171.5 486.1V494.5M1172.5 478.3V486.1M1173.5 480.5V489.3M1174.5 481.5V489.3M1175.5 478.0V492.1M1176.5 483.1V492.1M1177.5 481.8V486.8M1178.5 475.8V482.2M1179.5 482.2V487.6M1180.5 481.2V491.1M1181.5 481.2V495.1M1182.5 484.4V492.6M1183.5 483.5V490.4M1184.5 484.5V490.5M1185.5 490.1V498.7M1186.5 487.8V495.3M1187.5 486.4V494.2M1188.5 486.0V488.2M1189.5 486.0V491.7M1190.5 486.6V491.3M1191.5 485.8V492.7M1192.5 480.4V486.8M1193.5 486.8V493.2M1194.5 479.2V491.3M1195.5 484.2V495.2M1196.5 482.6V489.6M1197.5 478.9V489.0M1198.5 484.3V487.6M1199.5 482.5V485.5M1200.5 483.3V497.4M1201.5 474.7V495.3M1202.5 474.7V485.8M1203.5 479.8V488.5M1204.5 479.8V487.6M1205.5 484.9V490.3M1206.5 484.7V489.3M1207.5 487.6V492.4M1208.5 486.2V489.9M1209.5 483.2V488.9M1210.5 483.6V486.5M1211.5 482.8V490.0M1212.5 486.8V492.9M1213.5 485.9V490.7M1214.5 477.1V485.9M1215.5 483.9V491.0M1216.5 483.3V489.1M1217.5 485.4V496.8M1218.5 486.2V492.5M1219.5 480.0V489.4M1220.5 488.7V490.1M1221.5 483.0V493.0M1222.5 475.9V484.1M1223.5 479.1V490.9M1224.5 483.5V493.1M1225.5 480.4V487.2M1226.5 485.5V494.1M1227.5 482.8V495.1M1228.5 479.7V487.5M1229.5 483.7V487.1M1230.5 479.3V487.3M1231.5 479.5V494.2M1232.5 481.1V488.0M1233.5 481.3V483.8M1234.5 483.5V490.5M1235.5 483.1V485.9M1236.5 483.4V491.1M1237.5 483.4V492.2M1238.5 491.4V497.7M1239.5 484.1V497.2M1240.5 481.5V492.1M1241.5 482.7V490.9M1242.5 482.2V487.0M1243.5 480.9V493.2M1244.5 484.2V493.2M1245.5 482.3V485.2M1246.5 477.6V487.8M1247.5 477.6V486.8M1248.5 484.8V490.0M1249.5 486.1V493.3M1250.5 481.7V487.7M1251.5 481.7V491.6M1252.5 476.3V487.6M1253.5 481.0V494.5M1254.5 490.2V496.2M1255.5 481.5V490.2M1256.5 481.9V493.0M1257.5 481.9V490.4M1258.5 478.6V495.4M1259.5 476.4V492.7M1260.5 487.7V492.7M1261.5 476.8V487.7M1262.5 485.9V492.5M1263.5 479.6V495.3M1264.5 479.6V486.8M1265.5 482.0V489.0M1266.5 484.7V493.5M1267.5 484.2V492.0M1268.5 482.8V487.8M1269.5 485.3V488.7M1270.5 481.4V486.4M1271.5 486.3V491.1M1272.5 485.4V492.9M1273.5 485.4V492.9M1274.5 487.3V494.9M1275.5 477.3V492.7M1276.5 477.0V489.4M1277.5 478.7V493.5M1278.5 478.7V489.2M1279.5 479.6V490.9M1280.5 479.7V488.1M1281.5 488.1V493.7M1282.5 482.2V494.8M1283.5 483.1V490.6M1284.5 484.1V490.8M1285.5 483.1V490.9M1286.5 483.3V490.7M1287.5 484.9V493.5M1288.5 484.9V490.1M1289.5 483.8V489.0M1290.5 483.8V491.8M1291.5 484.2V491.8M1292.5 481.3V494.6M1293.5 482.2V489.7M1294.5 484.5V492.7M1295.5 479.5V489.9M1296.5 477.2V490.6M1297.5 477.8V482.6M1298.5 482.6V487.6M1299.5 484.9V487.6M1300.5 485.3V494.1M1301.5 486.3V492.4M1302.5 487.1V488.5M1303.5 481.8V487.8M1304.5 481.2V485.5M1305.5 481.3V486.9M1306.5 481.6V492.0M1307.5 485.8V494.5M1308.5 480.1V490.4M1309.5 484.2V487.7M1310.5 485.1V490.1M1311.5 486.3V498.4M1312.5 485.2V498.4M1313.5 486.9V491.9M1314.5 487.4V496.1M1315.5 489.1V496.1M1316.5 489.4V497.0M1317.5 484.5V489.4M1318.5 488.5V492.6M1319.5 485.9V492.6M1320.5 486.1V488.5M1321.5 478.7V488.3M1322.5 485.3V494.9M1323.5 484.7V491.4M1324.5 482.1V489.1M1325.5 479.7V491.4M1326.5 479.7V488.2M1327.5 480.4V490.4M1328.5 484.9V491.7M1329.5 485.4V491.7M1330.5 488.5V497.5M1331.5 489.0V494.8M1332.5 482.8V493.0M1333.5 482.8V490.3M1334.5 484.9V493.4M1335.5 478.4V486.7M1336.5 478.4V499.2M1337.5 485.0V494.8M1338.5 485.8V491.3M1339.5 487.6V489.6M1340.5 482.9V488.7M1341.5 482.0V488.9M1342.5 482.7V487.7M1343.5 485.8V490.6M1344.5 487.4V493.4M1345.5 485.4V489.8M1346.5 485.6V492.4M1347.5 484.2V488.6M1348.5 484.2V492.7M1349.5 482.3V492.7M1350.5 485.9V490.2M1351.5 485.6V490.2M1352.5 483.4V486.7M1353.5 481.9V486.0M1354.5 480.7V485.8M1355.5 482.1V489.2M1356.5 482.1V484.2M1357.5 481.2V486.8M1358.5 483.8V490.2M1359.5 481.9V488.9M1360.5 483.7V492.2M1361.5 488.6V493.3M1362.5 485.6V495.3M1363.5 489.4V499.4M1364.5 488.5V489.9M1365.5 484.2V493.7M1366.5 484.2V491.6M1367.5 487.8V491.6M1368.5 484.3V489.8M1369.5 485.6V488.6M1370.5 485.6V490.0M1371.5 487.4V489.7M1372.5 480.7V489.6M1373.5 477.4V486.4M1374.5 478.0V492.0M1375.5 489.1V492.9M1376.5 481.8V489.1M1377.5 486.8V492.7M1378.5 487.3V492.7M1379.5 489.2V496.3M1380.5 486.9V493.8M1381.5 484.5V492.7M1382.5 486.6V497.3M1383.5 486.6V492.9M1384.5 491.6V498.9M1385.5 484.8V493.1M1386.5 482.3V489.2M1387.5 482.1V493.5M1388.5 487.4V494.5M1389.5 492.7V503.6M1390.5 492.3V499.8M1391.5 489.1V493.5M1392.5 484.9V492.4M1393.5 483.8V490.5M1394.5 483.8V493.5M1395.5 484.6V494.2M1396.5 488.9V494.2M1397.5 489.4V496.3M1398.5 488.9V497.3M1399.5 488.7V499.1M1400.5 487.6V492.3M1401.5 488.1V492.3M1402.5 490.7V492.1M1403.5 487.4V492.7M1404.5 487.8V493.1M1405.5 484.0V493.1M1406.5 485.9V491.7M1407.5 486.0V487.4M1408.5 475.7V486.2M1409.5 437.6V475.7M1410.5 422.4V437.6M1411.5 412.4V422.4M1412.5 407.1V412.4M1413.5 402.4V407.1M1414.5 399.9V402.4M1415.5 397.5V399.9M1416.5 395.0V397.5M1417.5 392.6V395.0M1418.5 392.6V395.5M1419.5 395.5V398.4M1420.5 398.4V401.2M1421.5 401.2V406.2M1422.5 406.2V414.3M1423.5 414.3V422.3M1424.5 422.3V429.8M1425.5 429.8V436.4M1426.5 436.4V443.1M1427.5 443.1V449.8M1428.5 449.8V454.8M1429.5 454.8V459.5M1430.5 459.5V464.2M1431.5 464.2V468.8M1432.5 468.8V473.5M1433.5 473.5V476.0M1434.5 476.0V478.4M1435.5 478.4V480.7M1436.5 480.7V483.0M1437.5 483.0V485.4M1438.5 485.4V487.7M1439.5 487.7V490.0M1440.5 489.9V491.3M1441.5 490.7V492.1M1442.5 491.3V492.7M1443.5 491.9V493.3M1444.5 492.5V493.9M1445.5 493.0V494.4M1446.5 493.6V495.0M1447.5 494.2V495.6M1448.5 494.7V496.1M1449.5 495.1V496.5M1450.5 495.3V496.7M1451.5 495.4V496.8M1452.5 495.6V497.0M1453.5 495.8V497.2M1454.5 496.0V497.4M1455.5 496.2V497.6M1456.5 496.4V497.8M1457.5 496.6V498.0M1458.5 496.8V498.2M1459.5 497.0V498.4M1460.5 497.0V498.4M1461.5 497.0V498.4M1462.5 497.0V498.4M1463.5 497.0V498.4M1464.5 497.0V498.4M1465.5 497.0V498.4M1466.5 497.0V498.4M1467.5 497.0V498.4M1468.5 497.0V498.4M1469.5 497.0V498.4M1470.5 497.0V498.4M1471.5 497.0V498.4M1472.5 497.0V498.4M1473.5 497.0V498.4M1474.5 497.0V498.4M1475.5 497.0V498.4M1476.5 497.0V498.4M1477.5 497.0V498.4M1478.5 497.0V498.4M1479.5 497.0V498.4M1480.5 497.0V498.4M1481.5 497.0V498.4M1482.5 497.0V498.4M1483.5 497.0V498.4M1484.5 497.0V498.4M1485.5 497.0V498.4M1486.5 497.0V498.4M1487.5 497.0V498.4M1488.5 497.0V498.4M1489.5 497.0V498.4M1490.5 497.0V498.4M1491.5 497.0V498.4M1492.5 497.0V498.4M1493.5 497.0V498.4M1494.5 497.0V498.4M1495.5 497.0V498.4M1496.5 497.0V498.4M1497.5 497.0V498.4M1498.5 497.0V498.4M1499.5 497.0V498.4M1500.5 497.0V498.4M1501.5 497.0V498.4M1502.5 497.0V498.4M1503.5 497.0V498.4M1504.5 497.0V498.4M1505.5 497.0V498.4M1506.5 497.0V498.4M1507.5 497.0V498.4M1508.5 497.0V498.4M1509.5 497.0V498.4M1510.5 497.0V498.4M1511.5 497.0V498.4M1512.5 497.0V498.4M1513.5 497.0V498.4M1514.5 497.0V498.4M1515.5 497.0V498.4M1516.5 497.0V498.4M1517.5 497.0V498.4M1518.5 497.0V498.4M1519.5 497.0V498.4M1520.5 497.0V498.4M1521.5 497.0V498.4M1522.5 497.0V498.4M1523.5 497.0V498.4M1524.5 497.0V498.4M1525.5 497.0V498.4M1526.5 497.0V498.4M1527.5 497.0V498.4M1528.5 497.0V498.4M1529.5 497.0V498.4M1530.5 497.0V498.4M1531.5 497.0V498.4M1532.5 497.0V498.4M1533.5 497.0V498.4M1534.5 497.0V498.4M1535.5 497.0V498.4M1536.5 497.0V498.4M1537.5 497.0V498.4M1538.5 497.0V498.4M1539.5 497.0V498.4M1540.5 497.0V498.4M1541.5 497.0V498.4M1542.5 497.0V498.4M1543.5 497.0V498.4M1544.5 497.0V498.4M1545.5 497.0V498.4M1546.5 497.0V498.4M1547.5 497.0V498.4M1548.5 497.0V498.4M1549.5 497.0V498.4M1550.5 497.0V498.4M1551.5 497.0V498.4M1552.5 497.0V498.4M1553.5 497.0V498.4M1554.5 497.0V498.4M1555.5 497.0V498.4M1556.5 497.0V498.4M1557.5 497.0V498.4M1558.5 497.0V498.4M1559.5 497.0V498.4M1560.5 497.0V498.4M1561.5 497.0V498.4M1562.5 497.0V498.4M1563.5 497.0V498.4M1564.5 497.0V498.4M1565.5 497.0V498.4M1566.5 497.0V498.4M1567.5 497.0V498.4M1568.5 497.0V498.4M1569.5 497.0V498.4M1570.5 497.0V498.4M1571.5 497.0V498.4M1572.5 497.0V498.4M1573.5 497.0V498.4M1574.5 497.0V498.4M1575.5 497.0V498.4M1576.5 497.0V498.4M1577.5 497.0V498.4M1578.5 497.0V498.4M1579.5 497.0V498.4M1580.5 497.0V498.4M1581.5 497.0V498.4M1582.5 497.0V498.4M1583.5 497.0V498.4M1584.5 497.0V498.4M1585.5 497.0V498.4M1586.5 497.0V498.4M1587.5 497.0V498.4M1588.5 497.0V498.4M1589.5 497.0V498.4M1590.5 497.0V498.4M1591.5 497.0V498.4M1592.5 497.0V498.4M1593.5 497.0V498.4M1594.5 497.0V498.4M1595.5 497.0V498.4M1596.5 497.0V498.4M1597.5 497.0V498.4M1598.5 497.0V498.4M1599.5 497.0V498.4M1600.5 497.0V498.4M1601.5 497.0V498.4M1602.5 497.0V498.4M1603.5 497.0V498.4M1604.5 497.0V498.4M1605.5 497.1V498.5M1606.5 497.1V498.5M1607.5 497.1V498.5M1608.5 497.1V498.5M1609.5 497.1V498.5M1610.5 497.1V498.5M1611.5 497.1V498.5M1612.5 497.1V498.5M1613.5 497.1V498.5M1614.5 497.1V498.5M1615.5 497.1V498.5M1616.5 497.1V498.5M1617.5 497.1V498.5M1618.5 497.1V498.5M1619.5 497.1V498.5M1620.5 497.1V498.5M1621.5 497.1V498.5M1622.5 497.1V498.5M1623.5 497.1V498.5M1624.5 497.1V498.5M1625.5 497.1V498.5M1626.5 497.1V498.5M1627.5 497.1V498.5M1628.5 497.1V498.5M1629.5 497.1V498.5M1630.5 497.1V498.5M1631.5 497.1V498.5M1632.5 497.1V498.5M1633.5 497.1V498.5M1634.5 497.1V498.5M1635.5 497.1V498.5M1636.5 497.1V498.5M1637.5 497.1V498.5M1638.5 497.1V498.5M1639.5 497.1V498.5M1640.5 497.1V498.5M1641.5 497.1V498.5M1642.5 497.1V498.5M1643.5 497.1V498.5M1644.5 497.1V498.5M1645.5 497.1V498.5M1646.5 497.1V498.5M1647.5 497.1V498.5M1648.5 497.1V498.5M1649.5 497.1V498.5M1650.5 497.1V498.5M1651.5 497.1V498.5M1652.5 497.1V498.5M1653.5 497.1V498.5M1654.5 497.1V498.5M1655.5 497.1V498.5M1656.5 497.1V498.5M1657.5 497.1V498.5M1658.5 497.1V498.5M1659.5 497.1V498.5M1660.5 497.1V498.5M1661.5 497.1V498.5M1662.5 497.1V498.5M1663.5 497.1V498.5M1664.5 497.1V498.5M1665.5 497.1V498.5M1666.5 497.1V498.5M1667.5 497.1V498.5M1668.5 497.1V498.5M1669.5 497.1V498.5M1670.5 497.1V498.5M1671.5 497.1V498.5M1672.5 497.1V498.5M1673.5 497.1V498.5M1674.5 497.1V498.5M1675.5 497.1V498.5M1676.5 497.1V498.5M1677.5 497.1V498.5M1678.5 497.1V498.5M1679.5 497.1V498.5M1680.5 497.1V498.5M1681.5 497.1V498.5M1682.5 497.1V498.5M1683.5 497.1V498.5M1684.5 497.1V498.5M1685.5 497.1V498.5M1686.5 497.1V498.5M1687.5 497.1V498.5M1688.5 497.1V498.5M1689.5 497.1V498.5M1690.5 497.1V498.5M1691.5 497.1V498.5M1692.5 497.1V498.5M1693.5 497.1V498.5M1694.5 497.1V498.5M1695.5 497.1V498.5M1696.5 497.1V498.5M1697.5 497.1V498.5M1698.5 497.1V498.5M1699.5 497.1V498.5M1700.5 497.1V498.5M1701.5 497.1V498.5M1702.5 497.1V498.5M1703.5 497.1V498.5M1704.5 497.1V498.5M1705.5 497.1V498.5M1706.5 497.1V498.5M1707.5 497.1V498.5M1708.5 497.1V498.5M1709.5 497.1V498.5M1710.5 497.1V498.5M1711.5 497.1V498.5M1712.5 497.1V498.5M1713.5 497.1V498.5M1714.5 497.1V498.5M1715.5 497.1V498.5M1716.5 497.1V498.5M1717.5 497.1V498.5M1718.5 497.1V498.5M1719.5 497.1V498.5M1720.5 497.1V498.5M1721.5 497.1V498.5M1722.5 497.1V498.5M1723.5 497.1V498.5M1724.5 497.1V498.5M1725.5 497.1V498.5M1726.5 497.1V498.5M1727.5 497.1V498.5M1728.5 497.1V498.5M1729.5 497.1V498.5M1730.5 497.1V498.5M1731.5 497.1V498.5M1732.5 497.1V498.5M1733.5 497.1V498.5M1734.5 497.1V498.5M1735.5 497.1V498.5M1736.5 497.1V498.5M1737.5 497.1V498.5M1738.5 497.1V498.5M1739.5 497.1V498.5M1740.5 497.1V498.5M1741.5 497.1V498.5M1742.5 497.1V498.5M1743.5 497.1V498.5M1744.5 497.1V498.5M1745.5 497.1V498.5M1746.5 497.1V498.5M1747.5 497.1V498.5M1748.5 497.1V498.5M1749.5 497.1V498.5M1750.5 497.1V498.5" fill="none" stroke="#1ec0d0" stroke-width="1.5"/>
<path d="M3.5 732.6V734.0M4.5 732.6V734.0M5.5 732.6V734.0M6.5 732.6V734.0M7.5 732.6V734.0M8.5 732.6V734.0M9.5 732.6V734.0M10.5 732.6V734.0M11.5 732.6V734.0M12.5 732.6V734.0M13.5 732.6V734.0M14.5 732.6V734.0M15.5 732.6V734.0M16.5 732.6V734.0M17.5 732.6V734.0M18.5 732.6V734.0M19.5 732.6V734.0M20.5 732.6V734.0M21.5 732.6V734.0M22.5 732.6V734.0M23.5 732.6V734.0M24.5 732.6V734.0M25.5 732.6V734.0M26.5 732.6V734.0M27.5 732.6V734.0M28.5 732.6V734.0M29.5 732.6V734.0M30.5 732.6V734.0M31.5 732.6V734.0M32.5 732.6V734.0M33.5 732.6V734.0M34.5 732.6V734.0M35.5 732.6V734.0M36.5 732.6V734.0M37.5 732.6V734.0M38.5 732.6V734.0M39.5 732.6V734.0M40.5 732.6V734.0M41.5 732.6V734.0M42.5 732.6V734.0M43.5 732.6V734.0M44.5 732.6V734.0M45.5 732.6V734.0M46.5 732.6V734.0M47.5 732.6V734.0M48.5 732.6V734.0M49.5 732.6V734.0M50.5 732.6V734.0M51.5 732.6V734.0M52.5 732.6V734.0M53.5 732.6V734.0M54.5 732.6V734.0M55.5 733.3V737.4M56.5 736.3V738.0M57.5 734.0V741.8M58.5 734.0V740.7M59.5 733.7V739.8M60.5 734.1V739.6M61.5 734.2V737.4M62.5 732.9V738.1M63.5 731.6V736.3M64.5 734.1V738.8M65.5 732.5V738.1M66.5 734.7V738.5M67.5 734.7V738.7M68.5 732.7V738.0M69.5 732.0V741.5M70.5 731.6V735.7M71.5 729.4V737.5M72.5 733.4V739.7M73.5 729.5V739.4M74.5 733.5V738.6M75.5 732.9V739.8M76.5 732.7V736.5M77.5 732.6V738.8M78.5 733.7V738.4M79.5 732.0V737.2M80.5 732.0V738.1M81.5 732.4V737.5M82.5 734.2V738.9M83.5 732.6V735.0M84.5 732.6V735.8M85.5 731.8V735.3M86.5 734.0V737.2M87.5 735.3V737.8M88.5 731.6V735.6M89.5 732.9V734.4M90.5 732.1V734.8M91.5 733.1V734.8M92.5 732.3V734.7M93.5 732.9V734.9M94.5 732.9V734.9M95.5 732.1V735.0M96.5 732.8V735.0M97.5 732.1V735.4M98.5 732.7V736.0M99.5 732.5V733.9M100.5 732.6V734.1M101.5 732.6V734.4M102.5 733.2V734.6M103.5 732.6V734.0M104.5 733.4V734.8M105.5 732.8V734.2M106.5 732.9V734.3M107.5 732.7V734.1M108.5 732.7V734.1M109.5 732.8V734.2M110.5 732.7V734.1M111.5 732.8V734.2M112.5 732.8V734.2M113.5 732.7V734.1M114.5 732.7V734.1M115.5 732.7V734.1M116.5 732.7V734.1M117.5 732.8V734.2M118.5 732.8V734.2M119.5 732.7V734.1M120.5 732.7V734.1M121.5 732.6V734.0M122.5 732.7V734.1M123.5 732.6V734.0M124.5 732.6V734.0M125.5 732.8V734.2M126.5 732.7V734.1M127.5 732.7V734.1M128.5 732.7V734.1M129.5 732.7V734.1M130.5 732.7V734.1M131.5 732.7V734.1M132.5 732.6V734.0M133.5 732.7V734.1M134.5 732.7V734.1M135.5 732.7V734.1M136.5 732.6V734.0M137.5 732.8V734.2M138.5 732.8V734.2M139.5 732.7V734.1M140.5 732.7V734.1M141.5 732.6V734.0M142.5 732.6V734.0M143.5 732.5V733.9M144.5 732.6V734.0M145.5 732.6V734.0M146.5 732.6V734.0M147.5 732.7V734.1M148.5 732.7V734.1M149.5 732.6V734.0M150.5 732.7V734.1M151.5 732.6V734.0M152.5 732.7V734.1M153.5 732.6V734.0M154.5 732.5V733.9M155.5 732.5V733.9M156.5 732.6V734.0M157.5 732.7V734.1M158.5 732.6V734.0M159.5 732.7V734.1M160.5 732.5V733.9M161.5 732.5V733.9M162.5 732.7V734.1M163.5 732.6V734.0M164.5 732.6V734.0M165.5 732.4V733.8M166.5 732.7V734.1M167.5 733.2V736.6M168.5 735.2V739.5M169.5 739.5V744.1M170.5 743.6V750.3M171.5 745.3V747.7M172.5 742.4V747.5M173.5 742.4V749.9M174.5 743.6V748.3M175.5 741.7V751.0M176.5 741.7V746.6M177.5 741.1V746.8M178.5 738.5V743.5M179.5 740.9V745.5M180.5 738.7V746.0M181.5 737.3V745.3M182.5 739.5V745.4M183.5 736.9V744.0M184.5 739.3V741.8M185.5 740.0V745.8M186.5 736.9V742.7M187.5 740.0V745.0M188.5 735.9V740.7M189.5 737.9V742.7M190.5 738.7V743.0M191.5 739.2V742.7M192.5 738.0V742.7M193.5 737.5V745.4M194.5 738.8V743.5M195.5 738.6V742.2M196.5 737.7V743.1M197.5 735.6V743.9M198.5 732.1V742.8M199.5 735.6V743.4M200.5 735.6V740.0M201.5 735.8V744.2M202.5 739.6V745.3M203.5 734.0V742.4M204.5 735.5V740.9M205.5 737.1V744.0M206.5 735.1V744.0M207.5 736.0V741.4M208.5 734.3V741.7M209.5 736.6V744.0M210.5 735.5V744.0M211.5 735.0V741.4M212.5 731.3V750.8M213.5 735.7V750.8M214.5 734.8V745.6M215.5 736.8V747.1M216.5 736.8V743.2M217.5 734.6V744.3M218.5 734.6V745.0M219.5 737.7V747.9M220.5 738.6V743.5M221.5 737.9V748.6M222.5 742.0V746.5M223.5 743.6V749.5M224.5 743.0V757.5M225.5 742.4V750.2M226.5 741.4V753.9M227.5 741.4V757.5M228.5 741.0V749.0M229.5 739.1V750.2M230.5 739.2V744.7M231.5 739.7V748.6M232.5 739.8V746.6M233.5 738.8V746.7M234.5 738.5V747.5M235.5 744.7V757.5M236.5 740.9V748.3M237.5 738.9V745.6M238.5 738.9V752.2M239.5 744.1V751.2M240.5 740.7V750.7M241.5 740.1V743.1M242.5 738.5V746.4M243.5 741.0V746.6M244.5 739.1V746.6M245.5 739.1V746.4M246.5 738.8V746.4M247.5 737.5V745.1M248.5 738.2V757.5M249.5 741.0V757.5M250.5 743.1V748.5M251.5 738.2V744.4M252.5 735.2V748.1M253.5 742.7V748.1M254.5 740.4V746.7M255.5 739.1V757.5M256.5 738.3V757.5M257.5 736.6V746.7M258.5 741.0V745.9M259.5 739.5V745.3M260.5 742.8V747.3M261.5 740.0V757.5M262.5 739.1V745.5M263.5 741.4V746.8M264.5 740.5V747.9M265.5 739.8V747.1M266.5 733.6V748.0M267.5 735.4V748.0M268.5 735.4V741.6M269.5 734.7V744.3M270.5 734.7V740.9M271.5 737.2V749.3M272.5 740.5V749.4M273.5 729.3V751.7M274.5 735.1V747.4M275.5 733.6V743.5M276.5 734.7V741.6M277.5 735.2V740.2M278.5 734.3V742.8M279.5 733.1V743.3M280.5 739.4V743.6M281.5 738.9V744.9M282.5 738.7V743.1M283.5 730.1V742.2M284.5 732.1V738.7M285.5 735.8V743.7M286.5 735.6V742.0M287.5 735.6V742.2M288.5 730.2V742.0M289.5 732.2V743.8M290.5 738.9V743.8M291.5 732.9V743.0M292.5 732.9V742.5M293.5 739.8V742.1M294.5 739.3V746.5M295.5 736.1V744.4M296.5 737.6V744.6M297.5 736.5V743.3M298.5 738.9V742.8M299.5 733.8V745.6M300.5 732.2V740.7M301.5 732.2V741.3M302.5 734.9V740.1M303.5 737.8V745.3M304.5 737.0V740.1M305.5 737.1V741.5M306.5 736.2V740.7M307.5 738.5V742.7M308.5 735.4V748.6M309.5 737.0V740.9M310.5 736.0V740.6M311.5 733.5V742.0M312.5 735.3V741.7M313.5 733.0V738.6M314.5 732.7V738.7M315.5 733.5V739.0M316.5 734.5V741.1M317.5 733.8V742.4M318.5 736.4V741.6M319.5 736.4V742.4M320.5 735.4V745.9M321.5 737.1V742.0M322.5 737.4V740.7M323.5 735.4V740.5M324.5 736.0V741.7M325.5 735.2V743.0M326.5 735.1V741.9M327.5 737.5V739.3M328.5 736.6V742.2M329.5 735.8V741.5M330.5 736.5V743.4M331.5 737.0V743.3M332.5 735.8V739.8M333.5 734.3V736.8M334.5 733.1V737.2M335.5 732.1V739.2M336.5 732.1V741.0M337.5 735.8V741.4M338.5 733.9V741.1M339.5 736.4V741.1M340.5 734.4V741.0M341.5 735.3V746.0M342.5 726.0V746.0M343.5 737.5V742.1M344.5 735.9V741.7M345.5 733.7V745.4M346.5 730.3V742.9M347.5 735.7V741.9M348.5 734.9V740.9M349.5 735.7V740.2M350.5 733.7V744.0M351.5 734.2V746.6M352.5 735.9V746.6M353.5 733.6V742.2M354.5 735.2V741.7M355.5 734.9V738.6M356.5 735.0V743.9M357.5 733.8V740.3M358.5 736.1V739.6M359.5 735.7V738.9M360.5 735.7V743.4M361.5 733.6V737.6M362.5 733.9V743.8M363.5 736.1V741.1M364.5 736.1V741.4M365.5 732.5V739.4M366.5 732.5V739.3M367.5 737.7V744.1M368.5 735.8V744.1M369.5 733.5V740.2M370.5 733.6V739.4M371.5 732.6V741.7M372.5 736.2V739.5M373.5 736.7V739.0M374.5 736.5V738.9M375.5 733.3V739.0M376.5 733.1V742.1M377.5 733.1V742.8M378.5 734.8V743.9M379.5 733.0V739.7M380.5 732.3V741.0M381.5 734.5V740.2M382.5 733.7V742.1M383.5 733.3V740.6M384.5 734.8V743.1M385.5 733.4V736.7M386.5 734.1V738.1M387.5 729.8V739.3M388.5 734.5V739.5M389.5 728.9V738.7M390.5 732.4V742.5M391.5 735.5V740.0M392.5 735.5V739.6M393.5 734.8V738.4M394.5 733.9V740.5M395.5 735.8V742.3M396.5 734.0V739.5M397.5 733.4V738.1M398.5 732.3V738.9M399.5 732.0V736.0M400.5 732.0V739.1M401.5 733.1V738.3M402.5 733.2V738.9M403.5 729.1V738.0M404.5 729.1V740.5M405.5 735.1V739.0M406.5 731.1V739.0M407.5 732.7V739.0M408.5 731.5V737.1M409.5 734.9V740.6M410.5 734.1V742.4M411.5 733.1V742.4M412.5 733.5V740.8M413.5 733.5V737.6M414.5 733.7V738.7M415.5 731.9V738.7M416.5 733.9V739.6M417.5 731.6V738.6M418.5 732.2V739.0M419.5 732.2V737.0M420.5 732.9V739.1M421.5 735.8V739.7M422.5 733.5V738.5M423.5 735.3V739.5M424.5 730.1V738.7M425.5 732.3V738.7M426.5 734.8V737.2M427.5 733.3V736.8M428.5 730.5V739.8M429.5 733.5V741.1M430.5 733.5V738.3M431.5 732.1V739.1M432.5 735.3V739.2M433.5 735.3V739.6M434.5 735.2V738.7M435.5 735.2V744.0M436.5 733.5V736.5M437.5 733.5V736.6M438.5 733.0V738.1M439.5 733.3V737.5M440.5 733.3V740.4M441.5 734.0V741.3M442.5 730.4V741.3M443.5 735.1V739.5M444.5 734.1V740.6M445.5 733.5V740.6M446.5 734.0V740.4M447.5 732.5V740.4M448.5 733.9V741.1M449.5 734.8V741.1M450.5 733.7V740.0M451.5 731.2V738.6M452.5 731.3V738.9M453.5 730.9V738.8M454.5 732.9V738.2M455.5 732.5V739.3M456.5 732.5V737.1M457.5 732.1V737.1M458.5 734.8V738.6M459.5 732.1V740.1M460.5 732.0V739.5M461.5 730.5V738.6M462.5 732.1V738.6M463.5 736.6V738.6M464.5 734.9V739.0M465.5 733.0V738.2M466.5 732.2V739.6M467.5 735.4V740.5M468.5 731.1V739.0M469.5 732.0V739.0M470.5 732.3V739.0M471.5 735.0V742.6M472.5 732.6V742.6M473.5 732.6V744.3M474.5 731.0V742.2M475.5 733.5V743.4M476.5 732.5V743.4M477.5 732.1V741.5M478.5 735.2V738.6M479.5 734.7V736.8M480.5 732.9V736.5M481.5 731.4V735.4M482.5 730.4V735.4M483.5 735.3V737.8M484.5 730.9V737.1M485.5 730.0V738.6M486.5 732.1V737.9M487.5 729.0V734.8M488.5 732.3V737.0M489.5 731.9V737.3M490.5 732.5V737.3M491.5 733.1V735.7M492.5 729.4V737.4M493.5 733.0V736.7M494.5 733.5V738.1M495.5 732.9V737.0M496.5 734.4V739.1M497.5 732.9V739.7M498.5 733.0V739.4M499.5 737.1V740.2M500.5 735.0V738.5M501.5 732.6V738.4M502.5 729.0V738.5M503.5 732.4V739.6M504.5 731.0V737.5M505.5 731.2V740.1M506.5 733.4V740.1M507.5 733.2V737.7M508.5 731.7V738.5M509.5 730.6V732.6M510.5 731.2V738.2M511.5 732.8V738.5M512.5 732.8V738.0M513.5 734.0V740.0M514.5 731.9V738.1M515.5 731.9V735.9M516.5 731.9V734.8M517.5 732.0V736.4M518.5 732.7V738.1M519.5 732.8V739.1M520.5 733.5V737.3M521.5 734.5V738.8M522.5 730.6V737.6M523.5 732.1V739.6M524.5 730.4V737.7M525.5 730.4V733.9M526.5 728.8V738.8M527.5 731.8V738.8M528.5 731.5V735.5M529.5 731.5V739.4M530.5 735.3V739.6M531.5 730.0V736.9M532.5 734.0V738.9M533.5 731.9V736.8M534.5 732.7V736.6M535.5 735.0V737.8M536.5 731.4V737.6M537.5 731.4V738.3M538.5 731.5V736.6M539.5 730.8V736.6M540.5 729.4V735.7M541.5 733.1V740.4M542.5 731.0V738.4M543.5 731.0V735.8M544.5 730.2V735.6M545.5 732.6V738.4M546.5 729.0V737.3M547.5 729.5V739.2M548.5 729.5V738.0M549.5 733.1V738.9M550.5 732.7V736.1M551.5 732.7V738.3M552.5 729.4V737.8M553.5 730.2V737.1M554.5 732.8V738.3M555.5 732.4V737.2M556.5 725.0V737.2M557.5 730.8V737.7M558.5 731.5V737.7M559.5 729.8V738.9M560.5 729.8V736.4M561.5 733.9V738.0M562.5 731.8V736.0M563.5 731.8V738.5M564.5 728.9V738.6M565.5 732.7V737.0M566.5 730.5V735.2M567.5 730.5V738.1M568.5 733.9V736.7M569.5 731.5V736.6M570.5 732.4V734.4M571.5 732.1V737.4M572.5 730.8V738.1M573.5 733.0V736.7M574.5 731.7V737.1M575.5 732.4V737.9M576.5 729.5V736.1M577.5 729.2V735.2M578.5 730.1V736.4M579.5 733.0V735.9M580.5 730.3V733.3M581.5 732.6V734.1M582.5 730.7V733.1M583.5 731.0V733.2M584.5 730.1V732.2M585.5 730.0V731.4M586.5 729.3V730.7M587.5 729.3V730.7M588.5 729.3V730.7M589.5 729.3V730.7M590.5 729.3V730.7M591.5 729.3V730.7M592.5 729.3V730.7M593.5 729.3V730.7M594.5 729.3V730.7M595.5 730.0V736.0M596.5 736.0V743.7M597.5 737.1V744.1M598.5 737.1V742.9M599.5 737.1V745.4M600.5 737.1V747.7M601.5 739.1V744.6M602.5 736.2V744.6M603.5 735.3V743.9M604.5 736.8V747.9M605.5 735.8V746.4M606.5 733.2V742.5M607.5 738.7V748.6M608.5 737.0V748.6M609.5 735.4V745.6M610.5 733.8V745.7M611.5 734.9V744.2M612.5 736.9V743.2M613.5 735.3V744.7M614.5 738.6V744.8M615.5 736.8V742.6M616.5 736.8V743.1M617.5 737.2V744.5M618.5 736.5V745.2M619.5 739.2V749.3M620.5 734.1V744.1M621.5 734.3V744.2M622.5 736.0V744.2M623.5 737.8V744.2M624.5 736.8V741.7M625.5 734.1V740.7M626.5 737.8V746.2M627.5 736.6V746.9M628.5 734.7V746.4M629.5 734.3V741.1M630.5 734.1V746.5M631.5 733.2V741.1M632.5 733.4V737.4M633.5 733.4V744.3M634.5 735.3V744.3M635.5 729.7V742.7M636.5 731.4V745.2M637.5 729.2V742.1M638.5 729.2V740.3M639.5 731.9V742.1M640.5 735.6V743.4M641.5 735.6V744.1M642.5 735.6V739.2M643.5 730.1V740.3M644.5 732.0V740.3M645.5 732.8V746.2M646.5 732.8V741.8M647.5 738.0V743.3M648.5 738.0V742.6M649.5 733.6V744.8M650.5 736.4V744.8M651.5 733.5V743.6M652.5 733.5V743.9M653.5 732.6V736.1M654.5 731.2V740.9M655.5 733.2V738.5M656.5 734.9V741.6M657.5 734.9V740.9M658.5 737.8V746.6M659.5 734.3V738.7M660.5 734.7V743.8M661.5 735.4V744.9M662.5 737.6V744.7M663.5 736.3V745.3M664.5 733.0V742.5M665.5 737.8V743.9M666.5 738.5V745.3M667.5 737.8V746.1M668.5 733.0V741.2M669.5 733.0V740.1M670.5 737.2V743.7M671.5 734.1V743.5M672.5 731.8V743.0M673.5 732.6V742.9M674.5 736.5V742.2M675.5 734.1V742.4M676.5 733.9V741.3M677.5 734.8V738.5M678.5 733.0V740.9M679.5 727.2V738.8M680.5 733.1V739.8M681.5 736.6V744.1M682.5 732.7V741.5M683.5 731.5V741.5M684.5 737.0V742.7M685.5 733.1V742.7M686.5 733.1V742.6M687.5 734.2V741.0M688.5 730.1V739.9M689.5 733.9V744.0M690.5 734.8V739.5M691.5 733.7V739.5M692.5 733.7V742.4M693.5 735.0V742.4M694.5 733.5V742.1M695.5 736.2V741.9M696.5 734.0V744.3M697.5 733.0V743.0M698.5 734.0V742.7M699.5 732.7V741.1M700.5 734.8V741.1M701.5 735.9V741.1M702.5 736.1V743.7M703.5 733.0V745.8M704.5 733.0V743.8M705.5 734.4V745.5M706.5 734.4V743.8M707.5 735.7V742.0M708.5 735.7V743.1M709.5 730.3V741.9M710.5 736.2V741.2M711.5 737.5V747.4M712.5 739.1V742.9M713.5 731.2V739.1M714.5 733.4V742.3M715.5 736.1V747.4M716.5 738.0V744.1M717.5 735.4V741.8M718.5 731.3V741.4M719.5 730.2V743.2M720.5 730.2V743.2M721.5 733.2V742.1M722.5 734.1V743.9M723.5 735.4V746.1M724.5 732.1V744.7M725.5 736.8V744.7M726.5 731.3V744.5M727.5 733.3V741.9M728.5 733.1V744.2M729.5 733.1V748.3M730.5 740.1V752.3M731.5 745.7V757.5M732.5 740.6V757.5M733.5 739.4V748.6M734.5 738.6V746.6M735.5 738.6V757.5M736.5 735.4V749.8M737.5 745.5V756.0M738.5 738.2V755.2M739.5 732.3V757.5M740.5 731.8V757.5M741.5 750.6V756.1M742.5 748.2V757.5M743.5 730.1V757.5M744.5 743.3V757.5M745.5 744.6V757.5M746.5 745.5V757.5M747.5 751.0V757.5M748.5 751.0V757.5M749.5 751.5V757.5M750.5 743.5V757.5M751.5 739.5V757.5M752.5 753.7V757.5M753.5 748.1V757.5M754.5 748.1V757.5M755.5 747.9V757.5M756.5 737.4V757.5M757.5 745.7V757.5M758.5 752.9V757.5M759.5 740.5V757.5M760.5 747.3V757.5M761.5 754.0V757.5M762.5 751.9V757.5M763.5 756.1V757.5M764.5 750.9V757.5M765.5 750.4V757.5M766.5 751.5V757.5M767.5 752.8V757.5M768.5 754.3V757.5M769.5 738.3V757.5M770.5 755.5V757.5M771.5 752.8V757.5M772.5 743.0V757.5M773.5 743.0V757.5M774.5 752.3V757.5M775.5 749.9V757.5M776.5 751.1V757.5M777.5 751.1V757.5M778.5 741.1V757.5M779.5 741.1V757.5M780.5 751.7V757.5M781.5 739.7V757.5M782.5 739.7V757.5M783.5 752.1V757.5M784.5 741.6V757.5M785.5 750.7V757.5M786.5 750.9V757.5M788.5 747.5V757.5M789.5 744.3V757.5M790.5 750.2V757.5M791.5 737.7V757.5M792.5 739.1V757.5M793.5 749.1V757.5M794.5 751.8V757.5M795.5 740.7V755.8M796.5 740.7V757.5M797.5 749.7V757.5M798.5 754.8V757.5M799.5 741.2V757.5M800.5 740.6V757.5M801.5 740.6V757.2M802.5 754.2V757.5M803.5 739.6V757.5M804.5 745.3V757.5M805.5 736.7V757.5M806.5 743.9V757.5M807.5 745.6V757.5M808.5 743.5V757.5M809.5 737.1V757.5M810.5 746.1V757.5M811.5 746.1V757.5M812.5 745.4V757.5M813.5 744.0V757.5M814.5 749.0V757.5M815.5 752.0V757.5M816.5 749.0V757.5M817.5 745.3V757.5M818.5 742.5V757.5M819.5 752.0V757.5M820.5 739.3V757.5M821.5 750.6V757.5M822.5 731.5V757.5M823.5 740.4V757.5M824.5 743.6V757.5M825.5 746.9V756.9M826.5 748.2V757.5M827.5 738.3V757.5M828.5 750.1V757.5M829.5 749.5V757.5M830.5 747.0V757.5M831.5 733.2V752.7M832.5 738.6V757.5M833.5 742.4V757.5M834.5 745.0V757.5M835.5 742.8V757.5M836.5 744.0V755.9M837.5 745.6V757.5M838.5 752.6V757.5M839.5 745.9V757.5M840.5 745.9V757.5M841.5 747.6V757.5M842.5 739.8V757.5M843.5 754.9V757.5M844.5 745.5V757.5M845.5 739.2V757.5M846.5 747.0V756.1M847.5 735.5V757.2M848.5 746.6V757.2M849.5 734.7V750.3M850.5 742.8V757.5M851.5 746.9V754.4M852.5 736.3V752.0M853.5 731.0V756.0M854.5 736.2V748.0M855.5 739.1V757.5M856.5 739.4V750.0M857.5 737.8V755.7M858.5 747.7V757.5M859.5 743.5V757.5M860.5 734.8V757.4M861.5 734.8V757.5M862.5 741.7V757.5M863.5 740.7V757.5M864.5 741.3V757.0M865.5 736.9V757.0M866.5 738.5V751.4M867.5 738.5V748.9M868.5 737.7V751.4M869.5 737.6V752.5M870.5 732.8V748.9M871.5 739.3V751.9M872.5 746.5V757.5M873.5 743.6V757.5M874.5 741.7V757.5M875.5 739.9V752.7M876.5 745.2V757.5M877.5 743.5V755.7M878.5 736.6V750.8M879.5 744.7V750.8M880.5 742.1V752.7M881.5 743.6V757.5M882.5 735.6V757.5M883.5 738.2V757.5M884.5 736.4V757.5M885.5 747.9V756.4M886.5 732.5V748.6M887.5 741.8V755.6M888.5 733.0V755.6M889.5 736.6V757.5M890.5 740.7V757.5M891.5 740.7V753.7M892.5 738.5V757.5M893.5 736.5V748.3M894.5 740.6V757.5M895.5 739.8V748.8M896.5 729.9V752.9M897.5 739.1V751.7M898.5 740.1V751.0M899.5 739.1V753.0M900.5 737.7V751.9M901.5 737.8V749.2M902.5 737.8V748.7M903.5 742.1V750.9M904.5 735.6V750.9M905.5 743.4V755.9M906.5 745.8V757.5M907.5 734.7V749.7M908.5 739.6V754.2M909.5 733.1V757.4M910.5 733.1V751.1M911.5 735.0V757.4M912.5 742.7V757.5M913.5 732.9V751.2M914.5 739.9V751.3M915.5 736.5V750.8M916.5 733.8V751.1M917.5 736.8V751.1M918.5 733.8V757.5M919.5 733.6V748.4M920.5 732.8V748.5M921.5 734.0V747.9M922.5 733.4V747.9M923.5 735.1V744.1M924.5 734.4V751.1M925.5 742.2V748.7M926.5 729.2V745.1M927.5 729.2V748.2M928.5 739.3V754.2M929.5 743.4V751.7M930.5 738.3V753.8M931.5 734.6V747.5M932.5 738.1V747.0M933.5 740.3V752.2M934.5 733.8V748.9M935.5 731.8V750.2M936.5 729.8V756.7M937.5 731.2V751.5M938.5 736.3V751.9M939.5 729.6V746.5M940.5 736.6V751.5M941.5 732.1V746.7M942.5 737.4V747.0M943.5 743.9V751.8M944.5 738.3V749.7M945.5 731.7V756.0M946.5 739.9V753.5M947.5 732.2V749.0M948.5 736.7V743.7M949.5 728.8V739.1M950.5 728.8V757.5M951.5 738.7V746.9M952.5 737.0V744.0M953.5 743.8V756.4M954.5 730.7V753.3M955.5 739.1V753.3M956.5 740.0V752.7M957.5 729.4V753.3M958.5 731.0V749.7M959.5 732.2V747.2M960.5 730.1V746.6M961.5 734.0V746.3M962.5 734.1V749.7M963.5 730.9V749.1M964.5 730.6V746.3M965.5 735.2V743.3M966.5 731.7V748.1M967.5 726.0V745.8M968.5 730.7V745.9M969.5 727.1V744.8M970.5 727.1V745.3M971.5 726.7V744.7M972.5 730.0V747.1M973.5 730.0V745.2M974.5 727.8V744.5M975.5 727.8V741.3M976.5 727.5V741.3M977.5 717.1V737.5M978.5 731.5V746.7M979.5 734.9V740.9M980.5 734.0V748.1M981.5 725.7V743.9M982.5 722.6V740.4M983.5 728.2V742.2M984.5 727.4V742.6M985.5 723.4V741.7M986.5 729.6V744.7M987.5 732.1V747.9M988.5 732.3V749.1M989.5 729.8V747.5M990.5 738.7V756.5M991.5 735.9V746.0M992.5 736.4V743.2M993.5 726.3V751.1M994.5 726.3V744.3M995.5 733.2V755.4M996.5 728.3V740.6M997.5 728.3V739.8M998.5 726.3V751.5M999.5 731.4V749.1M1000.5 733.3V745.2M1001.5 734.2V750.1M1002.5 729.6V741.7M1003.5 728.7V743.7M1004.5 724.1V736.5M1005.5 731.3V743.8M1006.5 730.8V740.3M1007.5 726.8V740.3M1008.5 727.8V742.7M1009.5 726.5V738.4M1010.5 728.4V747.4M1011.5 733.3V740.5M1012.5 723.9V741.6M1013.5 724.6V743.8M1014.5 728.9V739.7M1015.5 726.1V742.3M1016.5 715.1V742.3M1017.5 715.1V741.2M1018.5 724.6V737.8M1019.5 720.5V741.3M1020.5 729.0V752.7M1021.5 727.9V740.1M1022.5 729.1V743.6M1023.5 728.4V738.5M1024.5 726.3V740.4M1025.5 726.3V738.2M1026.5 726.0V741.5M1027.5 725.1V741.5M1028.5 725.1V745.8M1029.5 725.2V739.6M1030.5 722.5V736.3M1031.5 720.8V741.2M1032.5 726.9V752.7M1033.5 724.8V752.7M1034.5 718.7V739.9M1035.5 732.1V739.9M1036.5 727.3V734.3M1037.5 722.3V733.2M1038.5 727.0V743.1M1039.5 722.2V738.9M1040.5 722.2V743.5M1041.5 719.7V744.3M1042.5 718.1V734.1M1043.5 728.1V746.2M1044.5 728.6V743.3M1045.5 717.5V743.3M1046.5 731.0V745.1M1047.5 728.4V741.7M1048.5 723.4V737.8M1049.5 729.9V740.5M1050.5 730.5V743.4M1051.5 720.6V741.3M1052.5 727.1V741.3M1053.5 729.1V741.3M1054.5 729.1V739.2M1055.5 727.2V740.5M1056.5 721.5V740.6M1057.5 725.2V740.6M1058.5 728.2V738.0M1059.5 715.3V736.5M1060.5 715.3V732.8M1061.5 718.2V736.2M1062.5 721.7V743.2M1063.5 720.8V742.3M1064.5 730.0V738.0M1065.5 721.5V734.2M1066.5 728.1V740.4M1067.5 729.0V739.1M1068.5 729.0V751.6M1069.5 726.1V739.0M1070.5 722.3V739.0M1071.5 724.2V752.0M1072.5 724.2V747.7M1073.5 720.9V746.3M1074.5 733.2V746.3M1075.5 722.8V740.4M1076.5 722.0V733.3M1077.5 728.8V742.6M1078.5 726.5V745.6M1079.5 732.6V745.9M1080.5 725.5V745.9M1081.5 727.0V743.2M1082.5 719.5V734.1M1083.5 724.7V740.6M1084.5 725.2V742.0M1085.5 724.0V742.0M1086.5 724.6V740.8M1087.5 725.3V735.3M1088.5 727.5V744.5M1089.5 724.1V731.9M1090.5 721.6V739.6M1091.5 727.4V745.1M1092.5 723.4V741.2M1093.5 728.5V736.4M1094.5 732.0V741.4M1095.5 730.7V745.7M1096.5 723.0V738.8M1097.5 717.1V730.6M1098.5 716.9V725.7M1099.5 722.3V738.3M1100.5 726.7V741.8M1101.5 730.6V743.2M1102.5 723.9V738.9M1103.5 723.9V744.9M1104.5 728.9V740.5M1105.5 723.8V740.5M1106.5 726.4V737.6M1107.5 724.0V740.5M1108.5 725.5V736.6M1109.5 736.1V749.0M1110.5 723.3V739.5M1111.5 722.5V743.6M1112.5 722.5V737.2M1113.5 721.3V734.9M1114.5 721.3V739.5M1115.5 722.5V736.2M1116.5 727.1V741.3M1117.5 720.7V736.8M1118.5 721.5V735.2M1119.5 720.2V740.3M1120.5 722.2V738.9M1121.5 723.8V743.3M1122.5 722.1V740.0M1123.5 724.3V734.1M1124.5 729.8V737.0M1125.5 715.6V737.0M1126.5 731.5V738.6M1127.5 732.8V742.5M1128.5 729.1V739.7M1129.5 722.2V737.7M1130.5 722.5V741.3M1131.5 722.3V735.1M1132.5 726.7V739.1M1133.5 720.3V731.0M1134.5 717.7V733.9M1135.5 719.7V729.2M1136.5 716.4V744.4M1137.5 727.0V744.4M1138.5 726.2V735.8M1139.5 719.7V731.1M1140.5 726.8V742.8M1141.5 724.4V733.1M1142.5 725.0V735.4M1143.5 730.6V742.1M1144.5 731.8V737.6M1145.5 720.5V735.0M1146.5 715.4V740.0M1147.5 723.2V732.6M1148.5 726.4V735.5M1149.5 723.7V739.5M1150.5 723.0V735.8M1151.5 726.6V738.0M1152.5 719.9V740.1M1153.5 719.9V735.9M1154.5 725.3V731.2M1155.5 728.0V743.4M1156.5 727.1V742.5M1157.5 723.9V734.0M1158.5 723.9V733.4M1159.5 725.6V736.5M1160.5 720.7V731.1M1161.5 720.0V739.5M1162.5 721.9V732.3M1163.5 725.6V734.1M1164.5 717.2V741.0M1165.5 726.5V733.9M1166.5 714.5V731.9M1167.5 714.5V747.3M1168.5 728.8V737.0M1169.5 717.0V743.9M1170.5 716.3V734.1M1171.5 726.9V735.8M1172.5 730.3V741.7M1173.5 724.4V741.7M1174.5 721.3V738.5M1175.5 729.0V740.7M1176.5 723.5V740.7M1177.5 729.1V740.2M1178.5 720.1V737.9M1179.5 720.1V731.9M1180.5 725.1V732.0M1181.5 730.0V743.4M1182.5 724.2V746.5M1183.5 722.6V742.4M1184.5 735.6V738.8M1185.5 722.5V736.9M1186.5 727.6V736.9M1187.5 717.8V735.6M1188.5 717.5V739.7M1189.5 722.9V738.8M1190.5 720.6V734.3M1191.5 723.2V738.0M1192.5 723.2V737.1M1193.5 723.2V734.5M1194.5 725.3V736.4M1195.5 721.5V736.4M1196.5 720.9V733.8M1197.5 724.7V737.9M1198.5 721.3V737.8M1199.5 721.2V738.6M1200.5 719.7V734.7M1201.5 719.7V732.0M1202.5 722.2V738.8M1203.5 724.7V738.0M1204.5 726.0V736.4M1205.5 722.0V737.1M1206.5 728.1V737.1M1207.5 724.4V741.6M1208.5 716.1V738.3M1209.5 723.6V731.3M1210.5 727.2V736.1M1211.5 717.2V732.0M1212.5 724.9V736.3M1213.5 729.4V734.1M1214.5 714.5V732.1M1215.5 720.6V738.5M1216.5 720.9V741.3M1217.5 722.6V732.6M1218.5 718.7V728.6M1219.5 727.6V738.8M1220.5 724.3V741.0M1221.5 719.8V734.8M1222.5 721.7V740.3M1223.5 722.3V737.1M1224.5 725.0V737.4M1225.5 726.3V738.6M1226.5 727.0V739.1M1227.5 721.1V740.4M1228.5 714.7V738.8M1229.5 723.7V735.2M1230.5 724.8V735.2M1231.5 721.7V731.5M1232.5 721.7V732.9M1233.5 729.6V738.1M1234.5 719.8V738.1M1235.5 719.8V736.2M1236.5 722.2V730.0M1237.5 717.4V724.9M1238.5 721.7V736.8M1239.5 725.5V734.5M1240.5 726.6V737.9M1241.5 722.4V735.1M1242.5 721.9V735.3M1243.5 721.7V733.3M1244.5 721.4V734.5M1245.5 722.2V739.9M1246.5 723.5V729.1M1247.5 725.1V742.3M1248.5 726.3V735.1M1249.5 717.9V727.1M1250.5 719.9V735.3M1251.5 727.6V739.0M1252.5 725.4V739.0M1253.5 711.0V732.3M1254.5 717.9V733.8M1255.5 723.5V739.4M1256.5 728.8V743.6M1257.5 725.8V736.2M1258.5 723.7V744.3M1259.5 724.1V750.2M1260.5 719.8V728.9M1261.5 723.4V735.3M1262.5 726.6V735.3M1263.5 721.6V735.2M1264.5 719.0V736.9M1265.5 724.5V736.1M1266.5 722.7V738.0M1267.5 724.2V733.7M1268.5 724.2V738.3M1269.5 722.2V743.4M1270.5 728.4V743.4M1271.5 726.1V732.1M1272.5 726.4V739.8M1273.5 722.1V737.6M1274.5 728.3V737.7M1275.5 711.7V734.1M1276.5 723.8V735.0M1277.5 721.1V733.7M1278.5 721.4V733.5M1279.5 725.5V733.5M1280.5 720.4V731.9M1281.5 725.2V733.0M1282.5 717.9V732.1M1283.5 717.2V740.0M1284.5 717.2V734.4M1285.5 716.1V740.5M1286.5 722.6V740.5M1287.5 721.7V736.6M1288.5 722.3V730.7M1289.5 727.4V735.0M1290.5 719.5V730.1M1291.5 715.8V730.9M1292.5 722.8V730.9M1293.5 723.1V740.4M1294.5 713.6V735.4M1295.5 723.4V742.0M1296.5 715.1V738.6M1297.5 715.1V731.1M1298.5 720.9V733.2M1299.5 729.3V737.2M1300.5 725.7V734.2M1301.5 726.6V732.8M1302.5 721.3V734.3M1303.5 721.3V731.7M1304.5 726.2V738.4M1305.5 725.7V744.2M1306.5 722.0V744.2M1307.5 722.0V739.0M1308.5 722.1V741.8M1309.5 714.3V729.8M1310.5 714.3V741.4M1311.5 716.8V732.6M1312.5 722.8V742.0M1313.5 725.1V735.0M1314.5 723.8V735.0M1315.5 717.4V731.7M1316.5 716.4V734.4M1317.5 717.7V742.7M1318.5 726.0V742.4M1319.5 720.7V737.5M1320.5 717.3V738.6M1321.5 714.2V724.3M1322.5 716.0V731.7M1323.5 718.2V731.1M1324.5 720.8V741.7M1325.5 722.6V735.3M1326.5 715.6V733.9M1327.5 721.8V734.0M1328.5 720.8V728.8M1329.5 718.9V737.5M1330.5 719.4V738.2M1331.5 720.3V740.4M1332.5 710.1V734.4M1333.5 725.8V743.1M1334.5 723.7V737.4M1335.5 723.5V736.8M1336.5 716.4V732.6M1337.5 714.7V740.3M1338.5 721.8V734.3M1339.5 712.4V729.7M1340.5 728.3V734.1M1341.5 726.5V732.9M1342.5 714.4V733.7M1343.5 722.2V731.3M1344.5 722.2V735.0M1345.5 723.5V741.3M1346.5 721.1V742.5M1347.5 720.1V739.5M1348.5 727.7V738.2M1349.5 729.2V746.8M1350.5 722.8V738.8M1351.5 724.8V732.6M1352.5 722.0V733.9M1353.5 725.0V737.5M1354.5 721.3V737.5M1355.5 723.3V736.9M1356.5 721.8V730.0M1357.5 722.0V735.7M1358.5 721.3V732.3M1359.5 724.9V735.5M1360.5 720.5V733.2M1361.5 720.0V734.0M1362.5 721.8V730.1M1363.5 722.3V740.7M1364.5 717.7V731.7M1365.5 717.5V736.4M1366.5 717.5V730.9M1367.5 720.8V736.9M1368.5 720.8V745.4M1369.5 717.5V737.1M1370.5 717.5V745.9M1371.5 723.7V745.9M1372.5 723.1V734.2M1373.5 718.5V742.1M1374.5 709.4V735.5M1375.5 715.9V735.5M1376.5 722.5V745.0M1377.5 721.1V732.5M1378.5 729.5V735.7M1379.5 725.8V739.5M1380.5 724.0V736.9M1381.5 718.9V733.3M1382.5 714.6V735.1M1383.5 717.0V732.1M1384.5 723.7V737.2M1385.5 718.2V730.3M1386.5 718.4V728.9M1387.5 726.4V733.3M1388.5 723.2V739.9M1389.5 715.9V740.0M1390.5 720.1V740.0M1391.5 726.8V733.9M1392.5 727.1V741.3M1393.5 728.1V739.9M1394.5 716.6V732.5M1395.5 719.3V736.0M1396.5 719.8V735.0M1397.5 717.9V741.9M1398.5 724.6V737.6M1399.5 715.2V743.1M1400.5 715.2V734.2M1401.5 723.4V734.1M1402.5 725.1V735.9M1403.5 725.1V735.3M1404.5 724.0V736.4M1405.5 721.4V733.4M1406.5 721.2V737.7M1407.5 719.3V732.1M1408.5 713.5V730.2M1409.5 702.0V731.8M1410.5 712.7V757.5M1411.5 743.0V757.5M1412.5 742.8V757.5M1413.5 756.8V757.5M1416.5 747.8V757.5M1417.5 737.3V749.9M1418.5 731.0V739.4M1419.5 731.9V737.6M1420.5 736.7V740.4M1421.5 739.9V741.6M1422.5 740.8V742.5M1423.5 741.6V743.3M1424.5 742.3V744.0M1425.5 741.8V743.5M1426.5 740.8V742.4M1427.5 739.7V741.4M1428.5 739.8V741.5M1429.5 741.1V742.7M1430.5 742.3V744.0M1431.5 743.4V745.0M1432.5 742.7V744.4M1433.5 741.4V743.0M1434.5 740.0V741.6M1435.5 738.6V740.2M1436.5 737.3V739.0M1437.5 736.3V738.0M1438.5 735.7V737.4M1439.5 735.1V736.8M1440.5 734.5V736.1M1441.5 733.8V735.5M1442.5 733.4V735.1M1443.5 733.1V734.8M1444.5 732.9V734.6M1445.5 732.7V734.4M1446.5 732.6V734.3M1447.5 732.6V734.2M1448.5 732.6V734.2M1449.5 732.6V734.2M1450.5 732.6V734.2M1451.5 732.6V734.2M1452.5 732.6V734.2M1453.5 732.6V734.2M1454.5 732.6V734.2M1455.5 732.6V734.2M1456.5 732.6V734.2M1457.5 732.6V734.2M1458.5 732.6V734.2M1459.5 732.6V734.2M1460.5 732.6V734.2M1461.5 732.6V734.2M1462.5 732.6V734.2M1463.5 732.6V734.2M1464.5 732.6V734.2M1465.5 732.6V734.2M1466.5 732.6V734.2M1467.5 732.6V734.2M1468.5 732.6V734.2M1469.5 732.6V734.2M1470.5 732.6V734.2M1471.5 732.6V734.2M1472.5 732.6V734.2M1473.5 732.6V734.2M1474.5 732.6V734.2M1475.5 732.6V734.2M1476.5 732.6V734.2M1477.5 732.6V734.2M1478.5 732.6V734.2M1479.5 732.6V734.2M1480.5 732.6V734.2M1481.5 732.6V734.2M1482.5 732.6V734.2M1483.5 732.6V734.2M1484.5 732.6V734.2M1485.5 732.6V734.2M1486.5 732.6V734.2M1487.5 732.6V734.2M1488.5 732.6V734.2M1489.5 732.6V734.2M1490.5 732.6V734.2M1491.5 732.6V734.2M1492.5 732.6V734.2M1493.5 732.6V734.2M1494.5 732.6V734.2M1495.5 732.6V734.2M1496.5 732.6V734.2M1497.5 732.6V734.2M1498.5 732.6V734.2M1499.5 732.6V734.2M1500.5 732.6V734.2M1501.5 732.6V734.2M1502.5 732.6V734.2M1503.5 732.6V734.2M1504.5 732.6V734.2M1505.5 732.6V734.2M1506.5 732.6V734.2M1507.5 732.6V734.2M1508.5 732.6V734.2M1509.5 732.6V734.2M1510.5 732.6V734.2M1511.5 732.6V734.2M1512.5 732.6V734.2M1513.5 732.6V734.2M1514.5 732.6V734.2M1515.5 732.6V734.2M1516.5 732.6V734.2M1517.5 732.6V734.2M1518.5 732.6V734.2M1519.5 732.6V734.2M1520.5 732.6V734.2M1521.5 732.6V734.2M1522.5 732.6V734.2M1523.5 732.6V734.2M1524.5 732.6V734.2M1525.5 732.6V734.2M1526.5 732.6V734.2M1527.5 732.6V734.2M1528.5 732.6V734.2M1529.5 732.6V734.2M1530.5 732.6V734.2M1531.5 732.6V734.2M1532.5 732.6V734.2M1533.5 732.6V734.2M1534.5 732.6V734.2M1535.5 732.6V734.2M1536.5 732.6V734.2M1537.5 732.6V734.2M1538.5 732.6V734.2M1539.5 732.6V734.2M1540.5 732.6V734.2M1541.5 732.6V734.2M1542.5 732.6V734.2M1543.5 732.6V734.2M1544.5 732.6V734.2M1545.5 732.6V734.2M1546.5 732.6V734.2M1547.5 732.6V734.2M1548.5 732.6V734.2M1549.5 732.6V734.2M1550.5 732.6V734.2M1551.5 732.6V734.2M1552.5 732.6V734.2M1553.5 732.6V734.2M1554.5 732.6V734.2M1555.5 732.6V734.2M1556.5 732.6V734.2M1557.5 732.6V734.2M1558.5 732.6V734.2M1559.5 732.6V734.2M1560.5 732.6V734.2M1561.5 732.6V734.2M1562.5 732.6V734.2M1563.5 732.6V734.2M1564.5 732.6V734.2M1565.5 732.6V734.2M1566.5 732.6V734.2M1567.5 732.6V734.2M1568.5 732.6V734.2M1569.5 732.6V734.2M1570.5 732.6V734.2M1571.5 732.6V734.2M1572.5 732.6V734.2M1573.5 732.6V734.2M1574.5 732.6V734.2M1575.5 732.6V734.2M1576.5 732.6V734.2M1577.5 732.6V734.2M1578.5 732.6V734.2M1579.5 732.6V734.2M1580.5 732.6V734.2M1581.5 732.6V734.2M1582.5 732.6V734.2M1583.5 732.6V734.2M1584.5 732.6V734.2M1585.5 732.6V734.2M1586.5 732.6V734.2M1587.5 732.6V734.2M1588.5 732.6V734.2M1589.5 732.6V734.2M1590.5 732.6V734.2M1591.5 732.6V734.2M1592.5 732.6V734.2M1593.5 732.6V734.2M1594.5 732.6V734.2M1595.5 732.6V734.2M1596.5 732.6V734.2M1597.5 732.6V734.2M1598.5 732.6V734.2M1599.5 732.6V734.2M1600.5 732.6V734.2M1601.5 732.6V734.2M1602.5 732.6V734.2M1603.5 732.6V734.2M1604.5 732.6V734.2M1605.5 732.6V734.2M1606.5 732.6V734.2M1607.5 732.6V734.2M1608.5 732.6V734.2M1609.5 732.6V734.2M1610.5 732.6V734.2M1611.5 732.6V734.2M1612.5 732.6V734.2M1613.5 732.6V734.2M1614.5 732.6V734.2M1615.5 732.6V734.2M1616.5 732.6V734.2M1617.5 732.6V734.2M1618.5 732.6V734.2M1619.5 732.6V734.2M1620.5 732.6V734.2M1621.5 732.6V734.2M1622.5 732.6V734.2M1623.5 732.6V734.2M1624.5 732.6V734.2M1625.5 732.6V734.2M1626.5 732.6V734.2M1627.5 732.6V734.2M1628.5 732.6V734.2M1629.5 732.6V734.2M1630.5 732.6V734.2M1631.5 732.6V734.2M1632.5 732.6V734.2M1633.5 732.6V734.2M1634.5 732.6V734.2M1635.5 732.6V734.2M1636.5 732.6V734.2M1637.5 732.6V734.2M1638.5 732.6V734.2M1639.5 732.6V734.2M1640.5 732.6V734.2M1641.5 732.6V734.2M1642.5 732.6V734.2M1643.5 732.6V734.2M1644.5 732.6V734.2M1645.5 732.6V734.2M1646.5 732.6V734.2M1647.5 732.6V734.2M1648.5 732.6V734.2M1649.5 732.6V734.2M1650.5 732.6V734.2M1651.5 732.6V734.2M1652.5 732.6V734.2M1653.5 732.6V734.2M1654.5 732.6V734.2M1655.5 732.6V734.2M1656.5 732.6V734.2M1657.5 732.6V734.2M1658.5 732.6V734.2M1659.5 732.6V734.2M1660.5 732.6V734.2M1661.5 732.6V734.2M1662.5 732.6V734.2M1663.5 732.6V734.2M1664.5 732.6V734.2M1665.5 732.6V734.2M1666.5 732.6V734.2M1667.5 732.6V734.2M1668.5 732.6V734.2M1669.5 732.6V734.2M1670.5 732.6V734.2M1671.5 732.6V734.2M1672.5 732.6V734.2M1673.5 732.6V734.2M1674.5 732.6V734.2M1675.5 732.6V734.2M1676.5 732.6V734.2M1677.5 732.6V734.2M1678.5 732.6V734.2M1679.5 732.6V734.2M1680.5 732.6V734.2M1681.5 732.6V734.2M1682.5 732.6V734.2M1683.5 732.6V734.2M1684.5 732.6V734.2M1685.5 732.6V734.2M1686.5 732.6V734.2M1687.5 732.6V734.2M1688.5 732.6V734.2M1689.5 732.6V734.2M1690.5 732.6V734.2M1691.5 732.6V734.2M1692.5 732.6V734.2M1693.5 732.6V734.2M1694.5 732.6V734.2M1695.5 732.6V734.2M1696.5 732.6V734.2M1697.5 732.6V734.2M1698.5 732.6V734.2M1699.5 732.6V734.2M1700.5 732.6V734.2M1701.5 732.6V734.2M1702.5 732.6V734.2M1703.5 732.6V734.2M1704.5 732.6V734.2M1705.5 732.6V734.2M1706.5 732.6V734.2M1707.5 732.6V734.2M1708.5 732.6V734.2M1709.5 732.6V734.2M1710.5 732.6V734.2M1711.5 732.6V734.2M1712.5 732.6V734.2M1713.5 732.6V734.2M1714.5 732.6V734.2M1715.5 732.6V734.2M1716.5 732.6V734.2M1717.5 732.6V734.2M1718.5 732.6V734.2M1719.5 732.6V734.2M1720.5 732.6V734.2M1721.5 732.6V734.2M1722.5 732.6V734.2M1723.5 732.6V734.2M1724.5 732.6V734.2M1725.5 732.6V734.2M1726.5 732.6V734.2M1727.5 732.6V734.2M1728.5 732.6V734.2M1729.5 732.6V734.2M1730.5 732.6V734.2M1731.5 732.6V734.2M1732.5 732.6V734.2M1733.5 732.6V734.2M1734.5 732.6V734.2M1735.5 732.6V734.2M1736.5 732.6V734.2M1737.5 732.6V734.2M1738.5 732.6V734.2M1739.5 732.6V734.2M1740.5 732.6V734.2M1741.5 732.6V734.2M1742.5 732.6V734.2M1743.5 732.6V734.2M1744.5 732.6V734.2M1745.5 732.6V734.2M1746.5 732.6V734.2M1747.5 732.6V734.2M1748.5 732.6V734.2M1749.5 732.6V734.2M1750.5 732.6V734.2" fill="none" stroke="#e8204c" stroke-width="1.5"/>
<path d="M3.5 911.6V913.0M4.5 911.6V913.0M5.5 911.6V913.0M6.5 911.6V913.0M7.5 911.6V913.0M8.5 911.6V913.0M9.5 911.6V913.0M10.5 911.6V913.0M11.5 911.6V913.0M12.5 911.6V913.0M13.5 911.6V913.0M14.5 911.6V913.0M15.5 911.6V913.0M16.5 911.6V913.0M17.5 911.6V913.0M18.5 911.6V913.0M19.5 911.6V913.0M20.5 911.6V913.0M21.5 911.6V913.0M22.5 911.6V913.0M23.5 911.6V913.0M24.5 911.6V913.0M25.5 911.6V913.0M26.5 911.6V913.0M27.5 911.6V913.0M28.5 911.6V913.0M29.5 911.6V913.0M30.5 911.6V913.0M31.5 911.6V913.0M32.5 911.6V913.0M33.5 911.6V913.0M34.5 911.6V913.0M35.5 911.6V913.0M36.5 911.6V913.0M37.5 911.6V913.0M38.5 911.6V913.0M39.5 911.6V913.0M40.5 911.6V913.0M41.5 911.6V913.0M42.5 911.6V913.0M43.5 911.6V913.0M44.5 911.6V913.0M45.5 911.6V913.0M46.5 911.6V913.0M47.5 911.6V913.0M48.5 911.6V913.0M49.5 911.6V913.0M50.5 911.6V913.0M51.5 911.6V913.0M52.5 911.6V913.0M53.5 911.6V913.0M54.5 911.6V913.0M55.5 912.3V916.4M56.5 915.3V917.0M57.5 913.0V920.8M58.5 913.0V919.7M59.5 912.7V918.8M60.5 913.1V918.6M61.5 913.2V916.4M62.5 911.9V917.1M63.5 910.6V915.3M64.5 913.1V917.8M65.5 911.5V917.1M66.5 913.7V917.5M67.5 913.7V917.7M68.5 911.7V917.0M69.5 911.0V920.5M70.5 910.6V914.7M71.5 908.4V916.5M72.5 912.4V918.7M73.5 908.5V918.4M74.5 912.5V917.6M75.5 911.9V918.8M76.5 911.7V915.5M77.5 911.6V917.8M78.5 912.7V917.4M79.5 911.0V916.2M80.5 911.0V917.1M81.5 911.4V916.5M82.5 913.2V917.9M83.5 911.6V914.0M84.5 911.6V914.8M85.5 910.8V914.3M86.5 913.0V916.2M87.5 914.3V916.8M88.5 910.6V914.6M89.5 911.9V913.4M90.5 911.1V913.8M91.5 912.1V913.8M92.5 911.3V913.7M93.5 911.9V913.9M94.5 911.9V913.9M95.5 911.1V914.0M96.5 911.8V914.0M97.5 911.1V914.4M98.5 911.7V915.0M99.5 911.5V912.9M100.5 911.6V913.1M101.5 911.6V913.4M102.5 912.2V913.6M103.5 911.6V913.0M104.5 912.4V913.8M105.5 911.8V913.2M106.5 911.9V913.3M107.5 911.7V913.1M108.5 911.7V913.1M109.5 911.8V913.2M110.5 911.7V913.1M111.5 911.8V913.2M112.5 911.8V913.2M113.5 911.7V913.1M114.5 911.7V913.1M115.5 911.7V913.1M116.5 911.7V913.1M117.5 911.8V913.2M118.5 911.8V913.2M119.5 911.7V913.1M120.5 911.7V913.1M121.5 911.6V913.0M122.5 911.7V913.1M123.5 911.6V913.0M124.5 911.6V913.0M125.5 911.8V913.2M126.5 911.7V913.1M127.5 911.7V913.1M128.5 911.7V913.1M129.5 911.7V913.1M130.5 911.7V913.1M131.5 911.7V913.1M132.5 911.6V913.0M133.5 911.7V913.1M134.5 911.7V913.1M135.5 911.7V913.1M136.5 911.6V913.0M137.5 911.8V913.2M138.5 911.8V913.2M139.5 911.7V913.1M140.5 911.7V913.1M141.5 911.6V913.0M142.5 911.6V913.0M143.5 911.5V912.9M144.5 911.6V913.0M145.5 911.6V913.0M146.5 911.6V913.0M147.5 911.7V913.1M148.5 911.7V913.1M149.5 911.6V913.0M150.5 911.7V913.1M151.5 911.6V913.0M152.5 911.7V913.1M153.5 911.6V913.0M154.5 911.5V912.9M155.5 911.5V912.9M156.5 911.6V913.0M157.5 911.7V913.1M158.5 911.6V913.0M159.5 911.7V913.1M160.5 911.5V912.9M161.5 911.5V912.9M162.5 911.7V913.1M163.5 911.6V913.0M164.5 911.6V913.0M165.5 911.4V912.8M166.5 911.7V913.1M167.5 912.2V915.6M168.5 914.2V918.5M169.5 918.5V923.1M170.5 922.6V929.3M171.5 924.3V926.7M172.5 921.4V926.5M173.5 921.4V928.9M174.5 922.6V927.3M175.5 920.7V930.0M176.5 920.7V925.6M177.5 920.1V925.8M178.5 917.5V922.5M179.5 919.9V924.5M180.5 917.7V925.0M181.5 916.3V924.3M182.5 918.5V924.4M183.5 915.9V923.0M184.5 918.3V920.8M185.5 919.0V924.8M186.5 915.9V921.7M187.5 919.0V924.0M188.5 914.9V919.7M189.5 916.9V921.7M190.5 917.7V922.0M191.5 918.2V921.7M192.5 917.0V921.7M193.5 916.5V924.4M194.5 917.8V922.5M195.5 917.6V921.2M196.5 916.7V922.1M197.5 914.6V922.9M198.5 911.1V921.8M199.5 914.6V922.4M200.5 914.6V919.0M201.5 914.8V923.2M202.5 918.6V924.3M203.5 913.0V921.4M204.5 914.5V919.9M205.5 916.1V923.0M206.5 914.1V923.0M207.5 915.0V920.4M208.5 913.3V920.7M209.5 915.6V923.0M210.5 914.5V923.0M211.5 914.0V920.4M212.5 910.3V929.8M213.5 914.7V929.8M214.5 913.8V924.6M215.5 915.8V926.1M216.5 915.8V922.2M217.5 913.6V923.3M218.5 913.6V924.0M219.5 916.7V926.9M220.5 917.6V922.5M221.5 916.9V927.6M222.5 921.0V925.5M223.5 922.6V928.5M224.5 922.0V936.5M225.5 921.4V929.2M226.5 920.4V932.9M227.5 920.4V944.8M228.5 920.0V928.0M229.5 918.1V929.2M230.5 918.2V923.7M231.5 918.7V927.6M232.5 918.8V925.6M233.5 917.8V925.7M234.5 917.5V926.5M235.5 923.7V952.0M236.5 919.9V927.3M237.5 917.9V924.6M238.5 917.9V931.2M239.5 923.1V930.2M240.5 919.7V929.7M241.5 919.1V922.1M242.5 917.5V925.4M243.5 920.0V925.6M244.5 918.1V925.6M245.5 918.1V925.4M246.5 917.8V925.4M247.5 916.5V924.1M248.5 917.2V943.8M249.5 920.0V949.3M250.5 922.1V927.5M251.5 917.2V923.4M252.5 914.2V927.1M253.5 921.7V927.1M254.5 919.4V925.7M255.5 918.1V942.5M256.5 917.3V942.5M257.5 915.6V925.7M258.5 920.0V924.9M259.5 918.5V924.3M260.5 921.8V926.3M261.5 919.0V938.4M262.5 918.1V924.5M263.5 920.4V925.8M264.5 919.5V926.9M265.5 918.8V926.1M266.5 912.6V927.0M267.5 914.4V927.0M268.5 914.4V920.6M269.5 913.7V923.3M270.5 913.7V919.9M271.5 916.2V928.3M272.5 919.5V928.4M273.5 908.3V930.7M274.5 914.1V926.4M275.5 912.6V922.5M276.5 913.7V920.6M277.5 914.2V919.2M278.5 913.3V921.8M279.5 912.1V922.3M280.5 918.4V922.6M281.5 917.9V923.9M282.5 917.7V922.1M283.5 909.1V921.2M284.5 911.1V917.7M285.5 914.8V922.7M286.5 914.6V921.0M287.5 914.6V921.2M288.5 909.2V921.0M289.5 911.2V922.8M290.5 917.9V922.8M291.5 911.9V922.0M292.5 911.9V921.5M293.5 918.8V921.1M294.5 918.3V925.5M295.5 915.1V923.4M296.5 916.6V923.6M297.5 915.5V922.3M298.5 917.9V921.8M299.5 912.8V924.6M300.5 911.2V919.7M301.5 911.2V920.3M302.5 913.9V919.1M303.5 916.8V924.3M304.5 916.0V919.1M305.5 916.1V920.5M306.5 915.2V919.7M307.5 917.5V921.7M308.5 914.4V927.6M309.5 916.0V919.9M310.5 915.0V919.6M311.5 912.5V921.0M312.5 914.3V920.7M313.5 912.0V917.6M314.5 911.7V917.7M315.5 912.5V918.0M316.5 913.5V920.1M317.5 912.8V921.4M318.5 915.4V920.6M319.5 915.4V921.4M320.5 914.4V924.9M321.5 916.1V921.0M322.5 916.4V919.7M323.5 914.4V919.5M324.5 915.0V920.7M325.5 914.2V922.0M326.5 914.1V920.9M327.5 916.5V918.3M328.5 915.6V921.2M329.5 914.8V920.5M330.5 915.5V922.4M331.5 916.0V922.3M332.5 914.8V918.8M333.5 913.3V915.8M334.5 912.1V916.2M335.5 911.1V918.2M336.5 911.1V920.0M337.5 914.8V920.4M338.5 912.9V920.1M339.5 915.4V920.1M340.5 913.4V920.0M341.5 914.3V925.0M342.5 905.0V925.0M343.5 916.5V921.1M344.5 914.9V920.7M345.5 912.7V924.4M346.5 909.3V921.9M347.5 914.7V920.9M348.5 913.9V919.9M349.5 914.7V919.2M350.5 912.7V923.0M351.5 913.2V925.6M352.5 914.9V925.6M353.5 912.6V921.2M354.5 914.2V920.7M355.5 913.9V917.6M356.5 914.0V922.9M357.5 912.8V919.3M358.5 915.1V918.6M359.5 914.7V917.9M360.5 914.7V922.4M361.5 912.6V916.6M362.5 912.9V922.8M363.5 915.1V920.1M364.5 915.1V920.4M365.5 911.5V918.4M366.5 911.5V918.3M367.5 916.7V923.1M368.5 914.8V923.1M369.5 912.5V919.2M370.5 912.6V918.4M371.5 911.6V920.7M372.5 915.2V918.5M373.5 915.7V918.0M374.5 915.5V917.9M375.5 912.3V918.0M376.5 912.1V921.1M377.5 912.1V921.8M378.5 913.8V922.9M379.5 912.0V918.7M380.5 911.3V920.0M381.5 913.5V919.2M382.5 912.7V921.1M383.5 912.3V919.6M384.5 913.8V922.1M385.5 912.4V915.7M386.5 913.1V917.1M387.5 908.8V918.3M388.5 913.5V918.5M389.5 907.9V917.7M390.5 911.4V921.5M391.5 914.5V919.0M392.5 914.5V918.6M393.5 913.8V917.4M394.5 912.9V919.5M395.5 914.8V921.3M396.5 913.0V918.5M397.5 912.4V917.1M398.5 911.3V917.9M399.5 911.0V915.0M400.5 911.0V918.1M401.5 912.1V917.3M402.5 912.2V917.9M403.5 908.1V917.0M404.5 908.1V919.5M405.5 914.1V918.0M406.5 910.1V918.0M407.5 911.7V918.0M408.5 910.5V916.1M409.5 913.9V919.6M410.5 913.1V921.4M411.5 912.1V921.4M412.5 912.5V919.8M413.5 912.5V916.6M414.5 912.7V917.7M415.5 910.9V917.7M416.5 912.9V918.6M417.5 910.6V917.6M418.5 911.2V918.0M419.5 911.2V916.0M420.5 911.9V918.1M421.5 914.8V918.7M422.5 912.5V917.5M423.5 914.3V918.5M424.5 909.1V917.7M425.5 911.3V917.7M426.5 913.8V916.2M427.5 912.3V915.8M428.5 909.5V918.8M429.5 912.5V920.1M430.5 912.5V917.3M431.5 911.1V918.1M432.5 914.3V918.2M433.5 914.3V918.6M434.5 914.2V917.7M435.5 914.2V923.0M436.5 912.5V915.5M437.5 912.5V915.6M438.5 912.0V917.1M439.5 912.3V916.5M440.5 912.3V919.4M441.5 913.0V920.3M442.5 909.4V920.3M443.5 914.1V918.5M444.5 913.1V919.6M445.5 912.5V919.6M446.5 913.0V919.4M447.5 911.5V919.4M448.5 912.9V920.1M449.5 913.8V920.1M450.5 912.7V919.0M451.5 910.2V917.6M452.5 910.3V917.9M453.5 909.9V917.8M454.5 911.9V917.2M455.5 911.5V918.3M456.5 911.5V916.1M457.5 911.1V916.1M458.5 913.8V917.6M459.5 911.1V919.1M460.5 911.0V918.5M461.5 909.5V917.6M462.5 911.1V917.6M463.5 915.6V917.6M464.5 913.9V918.0M465.5 912.0V917.2M466.5 911.2V918.6M467.5 914.4V919.5M468.5 910.1V918.0M469.5 911.0V918.0M470.5 911.3V918.0M471.5 914.0V921.6M472.5 911.6V921.6M473.5 911.6V923.3M474.5 910.0V921.2M475.5 912.5V922.4M476.5 911.5V922.4M477.5 911.1V920.5M478.5 914.2V917.6M479.5 913.7V915.8M480.5 911.9V915.5M481.5 910.4V914.4M482.5 909.4V914.4M483.5 914.3V916.8M484.5 909.9V916.1M485.5 909.0V917.6M486.5 911.1V916.9M487.5 908.0V913.8M488.5 911.3V916.0M489.5 910.9V916.3M490.5 911.5V916.3M491.5 912.1V914.7M492.5 908.4V916.4M493.5 912.0V915.7M494.5 912.5V917.1M495.5 911.9V916.0M496.5 913.4V918.1M497.5 911.9V918.7M498.5 912.0V918.4M499.5 916.1V919.2M500.5 914.0V917.5M501.5 911.6V917.4M502.5 908.0V917.5M503.5 911.4V918.6M504.5 910.0V916.5M505.5 910.2V919.1M506.5 912.4V919.1M507.5 912.2V916.7M508.5 910.7V917.5M509.5 909.6V911.6M510.5 910.2V917.2M511.5 911.8V917.5M512.5 911.8V917.0M513.5 913.0V919.0M514.5 910.9V917.1M515.5 910.9V914.9M516.5 910.9V913.8M517.5 911.0V915.4M518.5 911.7V917.1M519.5 911.8V918.1M520.5 912.5V916.3M521.5 913.5V917.8M522.5 909.6V916.6M523.5 911.1V918.6M524.5 909.4V916.7M525.5 909.4V912.9M526.5 907.8V917.8M527.5 910.8V917.8M528.5 910.5V914.5M529.5 910.5V918.4M530.5 914.3V918.6M531.5 909.0V915.9M532.5 913.0V917.9M533.5 910.9V915.8M534.5 911.7V915.6M535.5 914.0V916.8M536.5 910.4V916.6M537.5 910.4V917.3M538.5 910.5V915.6M539.5 909.8V915.6M540.5 908.4V914.7M541.5 912.1V919.4M542.5 910.0V917.4M543.5 910.0V914.8M544.5 909.2V914.6M545.5 911.6V917.4M546.5 908.0V916.3M547.5 908.5V918.2M548.5 908.5V917.0M549.5 912.1V917.9M550.5 911.7V915.1M551.5 911.7V917.3M552.5 908.4V916.8M553.5 909.2V916.1M554.5 911.8V917.3M555.5 911.4V916.2M556.5 904.0V916.2M557.5 909.8V916.7M558.5 910.5V916.7M559.5 908.8V917.9M560.5 908.8V915.4M561.5 912.9V917.0M562.5 910.8V915.0M563.5 910.8V917.5M564.5 907.9V917.6M565.5 911.7V916.0M566.5 909.5V914.2M567.5 909.5V917.1M568.5 912.9V915.7M569.5 910.5V915.6M570.5 911.4V913.4M571.5 911.1V916.4M572.5 909.8V917.1M573.5 912.0V915.7M574.5 910.7V916.1M575.5 911.4V916.9M576.5 908.5V915.1M577.5 908.2V914.2M578.5 909.1V915.4M579.5 912.0V914.9M580.5 909.3V912.3M581.5 911.6V913.1M582.5 909.7V912.1M583.5 910.0V912.2M584.5 909.1V911.2M585.5 909.0V910.4M586.5 908.3V909.7M587.5 908.3V909.7M588.5 908.3V909.7M589.5 908.3V909.7M590.5 908.3V909.7M591.5 908.3V909.7M592.5 908.3V909.7M593.5 908.3V909.7M594.5 908.3V909.7M595.5 909.0V915.0M596.5 915.0V922.7M597.5 916.1V923.1M598.5 916.1V921.9M599.5 916.1V924.4M600.5 916.1V926.7M601.5 918.1V923.6M602.5 915.2V923.6M603.5 914.3V922.9M604.5 915.8V926.9M605.5 914.8V925.4M606.5 912.2V921.5M607.5 917.7V927.6M608.5 916.0V927.6M609.5 914.4V924.6M610.5 912.8V924.7M611.5 913.9V923.2M612.5 915.9V922.2M613.5 914.3V923.7M614.5 917.6V923.8M615.5 915.8V921.6M616.5 915.8V922.1M617.5 916.2V923.5M618.5 915.5V924.2M619.5 918.2V928.3M620.5 913.1V923.1M621.5 913.3V923.2M622.5 915.0V923.2M623.5 916.8V923.2M624.5 915.8V920.7M625.5 913.1V919.7M626.5 916.8V925.2M627.5 915.6V925.9M628.5 913.7V925.4M629.5 913.3V920.1M630.5 913.1V925.5M631.5 912.2V920.1M632.5 912.4V916.4M633.5 912.4V923.3M634.5 914.3V923.3M635.5 908.7V921.7M636.5 910.4V924.2M637.5 908.2V921.1M638.5 908.2V919.3M639.5 910.9V921.1M640.5 914.6V922.4M641.5 914.6V923.1M642.5 914.6V918.2M643.5 909.1V919.3M644.5 911.0V919.3M645.5 911.8V925.2M646.5 911.8V920.8M647.5 917.0V922.3M648.5 917.0V921.6M649.5 912.6V923.8M650.5 915.4V923.8M651.5 912.5V922.6M652.5 912.5V922.9M653.5 911.6V915.1M654.5 910.2V919.9M655.5 912.2V917.5M656.5 913.9V920.6M657.5 913.9V919.9M658.5 916.8V925.6M659.5 913.3V917.7M660.5 913.7V922.8M661.5 914.4V923.9M662.5 916.6V923.7M663.5 915.3V924.3M664.5 912.0V921.5M665.5 916.8V922.9M666.5 917.5V924.3M667.5 916.8V925.1M668.5 912.0V920.2M669.5 912.0V919.1M670.5 916.2V922.7M671.5 913.1V922.5M672.5 910.8V922.0M673.5 911.6V921.9M674.5 915.5V921.2M675.5 913.1V921.4M676.5 912.9V920.3M677.5 913.8V917.5M678.5 912.0V919.9M679.5 906.2V917.8M680.5 912.1V918.8M681.5 915.6V923.1M682.5 911.7V920.5M683.5 910.5V920.5M684.5 916.0V921.7M685.5 912.1V921.7M686.5 912.1V921.6M687.5 913.2V920.0M688.5 909.1V918.9M689.5 912.9V923.0M690.5 913.8V918.5M691.5 912.7V918.5M692.5 912.7V921.4M693.5 914.0V921.4M694.5 912.5V921.1M695.5 915.2V920.9M696.5 913.0V923.3M697.5 912.0V922.0M698.5 913.0V921.7M699.5 911.7V920.1M700.5 913.8V920.1M701.5 914.9V920.1M702.5 915.1V922.7M703.5 912.0V924.8M704.5 912.0V922.8M705.5 913.4V924.5M706.5 913.4V922.8M707.5 914.7V921.0M708.5 914.7V922.1M709.5 909.3V920.9M710.5 915.2V920.2M711.5 916.5V926.4M712.5 918.1V921.9M713.5 910.2V918.1M714.5 912.4V921.3M715.5 915.1V926.4M716.5 917.0V923.1M717.5 914.4V920.8M718.5 910.3V920.4M719.5 909.2V922.2M720.5 909.2V922.2M721.5 912.2V921.1M722.5 913.1V922.9M723.5 914.4V925.1M724.5 911.1V923.7M725.5 915.8V923.7M726.5 910.3V923.5M727.5 912.3V920.9M728.5 912.1V923.2M729.5 912.1V927.3M730.5 919.1V931.3M731.5 924.7V937.5M732.5 919.6V937.5M733.5 918.4V927.6M734.5 917.6V925.6M735.5 917.6V940.3M736.5 914.4V928.8M737.5 925.0V935.5M738.5 918.3V935.3M739.5 913.0V944.5M740.5 913.0V946.9M741.5 932.4V937.9M742.5 930.5V945.3M743.5 913.0V941.6M744.5 926.7V955.3M745.5 928.6V955.3M746.5 929.5V947.3M747.5 935.0V952.9M748.5 935.0V956.4M749.5 935.5V963.5M750.5 927.5V963.5M751.5 923.5V951.2M752.5 937.7V951.6M753.5 932.1V949.2M754.5 932.1V945.9M755.5 931.9V945.9M756.5 921.4V949.1M757.5 929.7V953.2M758.5 936.9V956.2M759.5 924.5V956.2M760.5 931.3V952.8M761.5 938.0V948.2M762.5 935.9V948.5M763.5 940.1V952.9M764.5 934.9V961.9M765.5 934.4V950.6M766.5 935.5V948.2M767.5 936.8V952.4M768.5 938.3V947.3M769.5 922.3V950.1M770.5 939.5V955.1M771.5 936.8V953.6M772.5 927.0V945.6M773.5 927.0V953.4M774.5 936.3V955.0M775.5 933.9V947.2M776.5 935.1V946.6M777.5 935.1V951.5M778.5 925.1V951.5M779.5 925.1V947.9M780.5 935.7V947.9M781.5 923.7V946.4M782.5 923.7V962.5M783.5 936.1V959.8M784.5 925.6V945.3M785.5 934.7V947.8M786.5 934.9V947.2M787.5 945.2V960.0M788.5 931.5V952.1M789.5 928.3V957.3M790.5 933.4V947.5M791.5 920.1V944.2M792.5 920.6V946.0M793.5 929.8V941.5M794.5 931.6V946.4M795.5 919.7V934.8M796.5 919.7V937.7M797.5 928.7V952.9M798.5 933.8V948.5M799.5 920.2V942.8M800.5 919.6V942.5M801.5 919.6V936.2M802.5 933.2V944.3M803.5 918.6V944.3M804.5 924.3V952.3M805.5 915.7V944.9M806.5 922.9V942.3M807.5 924.6V942.3M808.5 922.5V937.1M809.5 916.1V940.6M810.5 925.1V941.6M811.5 925.1V946.4M812.5 924.4V942.7M813.5 923.0V942.9M814.5 928.0V937.4M815.5 931.0V940.4M816.5 928.0V939.9M817.5 924.3V939.1M818.5 921.5V939.1M819.5 931.0V945.4M820.5 918.3V945.0M821.5 929.6V944.8M822.5 910.5V952.2M823.5 919.4V954.8M824.5 922.6V949.4M825.5 925.9V935.9M826.5 927.2V938.2M827.5 917.3V938.5M828.5 929.1V938.5M829.5 928.5V945.3M830.5 926.0V943.3M831.5 912.2V931.7M832.5 917.6V943.3M833.5 921.4V939.8M834.5 924.0V939.8M835.5 921.8V947.1M836.5 923.0V934.9M837.5 924.6V941.3M838.5 931.6V942.5M839.5 924.9V938.6M840.5 924.9V941.7M841.5 926.6V941.7M842.5 918.8V937.5M843.5 933.9V952.2M844.5 924.5V946.4M845.5 918.2V941.4M846.5 926.0V935.1M847.5 914.5V936.2M848.5 925.6V936.2M849.5 913.7V929.3M850.5 921.8V936.5M851.5 925.9V933.4M852.5 915.3V931.0M853.5 910.0V935.0M854.5 915.2V927.0M855.5 918.1V944.7M856.5 918.4V929.0M857.5 916.8V934.7M858.5 926.7V936.9M859.5 922.5V936.9M860.5 913.8V936.4M861.5 913.8V938.1M862.5 920.7V936.7M863.5 919.7V942.5M864.5 920.3V936.0M865.5 915.9V936.0M866.5 917.5V930.4M867.5 917.5V927.9M868.5 916.7V930.4M869.5 916.6V931.5M870.5 911.8V927.9M871.5 918.3V930.9M872.5 925.5V944.4M873.5 922.6V939.4M874.5 920.7V939.7M875.5 918.9V931.7M876.5 924.2V939.2M877.5 922.5V934.7M878.5 915.6V929.8M879.5 923.7V929.8M880.5 921.1V931.7M881.5 922.6V936.5M882.5 914.6V936.5M883.5 917.2V936.9M884.5 915.4V937.6M885.5 926.9V935.4M886.5 911.5V927.6M887.5 920.8V934.6M888.5 912.0V934.6M889.5 915.6V937.6M890.5 919.7V937.6M891.5 919.7V932.7M892.5 917.5V938.3M893.5 915.5V927.3M894.5 919.6V939.2M895.5 918.8V927.8M896.5 908.9V931.9M897.5 918.1V930.7M898.5 919.1V930.0M899.5 918.1V932.0M900.5 916.7V930.9M901.5 916.8V928.1M902.5 916.8V927.6M903.5 921.1V929.8M904.5 914.7V929.8M905.5 922.4V934.8M906.5 924.8V939.1M907.5 913.9V928.6M908.5 918.7V933.1M909.5 912.3V936.2M910.5 912.3V930.0M911.5 914.2V936.1M912.5 921.8V936.1M913.5 912.2V930.1M914.5 919.0V930.1M915.5 915.7V929.6M916.5 913.1V929.9M917.5 916.0V929.8M918.5 913.1V936.5M919.5 913.0V927.3M920.5 912.2V927.3M921.5 913.4V926.7M922.5 912.8V926.7M923.5 914.5V923.1M924.5 913.8V929.7M925.5 921.3V927.5M926.5 908.9V924.0M927.5 908.9V927.0M928.5 918.5V932.6M929.5 922.4V930.2M930.5 917.6V932.2M931.5 914.1V926.3M932.5 917.4V925.8M933.5 919.4V930.6M934.5 913.4V927.5M935.5 911.5V928.7M936.5 909.7V934.7M937.5 911.0V929.9M938.5 915.7V930.2M939.5 909.5V925.2M940.5 916.0V929.8M941.5 911.8V925.3M942.5 916.7V925.6M943.5 922.7V930.0M944.5 917.6V928.0M945.5 911.5V933.8M946.5 919.0V931.5M947.5 912.0V927.4M948.5 916.0V922.4M949.5 908.9V918.3M950.5 908.9V938.5M951.5 917.9V925.3M952.5 916.3V922.7M953.5 922.4V933.9M954.5 910.7V931.0M955.5 918.2V931.0M956.5 919.0V930.4M957.5 909.4V930.9M958.5 911.0V927.7M959.5 912.0V925.4M960.5 910.1V924.8M961.5 913.6V924.6M962.5 913.7V927.6M963.5 910.9V927.0M964.5 910.6V924.5M965.5 914.7V921.8M966.5 911.6V926.1M967.5 906.5V924.0M968.5 910.7V924.0M969.5 907.5V923.1M970.5 907.5V923.5M971.5 907.1V922.9M972.5 910.0V925.0M973.5 910.0V923.3M974.5 908.2V922.7M975.5 908.2V919.8M976.5 907.9V919.8M977.5 898.9V916.5M978.5 911.3V924.5M979.5 914.3V919.5M980.5 913.5V925.7M981.5 906.3V922.0M982.5 903.7V919.0M983.5 908.5V920.5M984.5 907.8V920.8M985.5 904.4V920.0M986.5 909.7V922.5M987.5 911.8V925.3M988.5 912.0V926.3M989.5 909.8V924.8M990.5 917.3V932.4M991.5 915.0V923.5M992.5 915.4V921.1M993.5 906.8V927.8M994.5 906.8V922.0M995.5 912.7V931.3M996.5 908.5V918.8M997.5 908.5V918.2M998.5 906.8V927.9M999.5 911.1V925.9M1000.5 912.6V922.6M1001.5 913.4V926.7M1002.5 909.6V919.7M1003.5 908.8V921.3M1004.5 905.0V915.3M1005.5 910.9V921.4M1006.5 910.5V918.4M1007.5 907.2V918.4M1008.5 908.0V920.4M1009.5 907.0V916.8M1010.5 908.5V924.4M1011.5 912.6V918.6M1012.5 904.7V919.5M1013.5 905.3V921.3M1014.5 908.9V917.9M1015.5 906.6V920.0M1016.5 897.4V920.0M1017.5 897.4V919.1M1018.5 905.3V916.3M1019.5 901.8V919.2M1020.5 908.9V928.7M1021.5 908.0V918.1M1022.5 909.0V921.1M1023.5 908.4V916.8M1024.5 906.6V918.4M1025.5 906.6V916.5M1026.5 906.4V919.3M1027.5 905.6V919.3M1028.5 905.6V922.9M1029.5 905.7V917.7M1030.5 903.4V914.9M1031.5 902.1V919.0M1032.5 907.1V928.6M1033.5 905.3V928.6M1034.5 900.3V917.9M1035.5 911.4V917.9M1036.5 907.4V913.3M1037.5 903.3V912.3M1038.5 907.2V920.6M1039.5 903.1V917.1M1040.5 903.1V920.9M1041.5 901.0V921.5M1042.5 899.7V913.0M1043.5 908.0V923.1M1044.5 908.4V920.7M1045.5 899.2V920.7M1046.5 910.4V922.1M1047.5 908.2V919.4M1048.5 904.0V916.1M1049.5 909.5V918.3M1050.5 910.0V920.7M1051.5 901.7V918.9M1052.5 907.2V919.0M1053.5 908.7V919.0M1054.5 908.7V917.2M1055.5 907.2V918.3M1056.5 902.4V918.4M1057.5 905.5V918.4M1058.5 908.0V916.1M1059.5 897.3V914.9M1060.5 897.3V911.9M1061.5 899.7V914.6M1062.5 902.5V920.5M1063.5 901.8V919.7M1064.5 909.5V916.1M1065.5 902.3V913.0M1066.5 907.9V918.1M1067.5 908.6V917.0M1068.5 908.6V927.4M1069.5 906.2V916.9M1070.5 903.0V916.9M1071.5 904.6V927.7M1072.5 904.6V924.1M1073.5 901.8V922.9M1074.5 912.1V922.9M1075.5 903.4V918.1M1076.5 902.7V912.1M1077.5 908.3V919.8M1078.5 906.5V922.4M1079.5 911.5V922.6M1080.5 905.6V922.6M1081.5 906.8V920.3M1082.5 900.6V912.8M1083.5 904.9V918.1M1084.5 905.3V919.3M1085.5 904.3V919.3M1086.5 904.8V918.3M1087.5 905.3V913.7M1088.5 907.2V921.4M1089.5 904.3V910.9M1090.5 902.2V917.3M1091.5 907.1V921.9M1092.5 903.8V918.5M1093.5 908.0V914.5M1094.5 910.9V918.7M1095.5 909.8V922.3M1096.5 903.4V916.6M1097.5 898.5V909.7M1098.5 898.3V905.6M1099.5 902.8V916.2M1100.5 906.4V919.1M1101.5 909.7V920.2M1102.5 904.1V916.6M1103.5 904.1V921.6M1104.5 908.3V917.9M1105.5 904.0V917.9M1106.5 906.2V915.5M1107.5 904.1V917.9M1108.5 905.4V914.6M1109.5 914.2V925.0M1110.5 903.6V917.0M1111.5 902.9V920.5M1112.5 902.9V915.2M1113.5 901.9V913.3M1114.5 901.9V917.1M1115.5 902.9V914.3M1116.5 906.7V918.6M1117.5 901.4V914.8M1118.5 902.1V913.5M1119.5 901.0V917.7M1120.5 902.6V916.6M1121.5 904.0V920.2M1122.5 902.6V917.5M1123.5 904.4V912.5M1124.5 908.9V915.0M1125.5 897.2V915.0M1126.5 910.4V916.3M1127.5 911.4V919.6M1128.5 908.4V917.2M1129.5 902.6V915.5M1130.5 902.9V918.5M1131.5 902.7V913.4M1132.5 906.4V916.7M1133.5 901.0V909.9M1134.5 898.9V912.4M1135.5 900.5V908.5M1136.5 897.8V921.1M1137.5 906.6V921.1M1138.5 906.0V913.9M1139.5 900.5V910.1M1140.5 906.5V919.8M1141.5 904.4V911.7M1142.5 904.9V913.6M1143.5 909.6V919.2M1144.5 910.6V915.4M1145.5 901.2V913.3M1146.5 896.9V917.4M1147.5 903.4V911.3M1148.5 906.1V913.7M1149.5 903.9V917.0M1150.5 903.3V913.9M1151.5 906.3V915.7M1152.5 900.7V917.5M1153.5 900.7V914.0M1154.5 905.2V910.1M1155.5 907.4V920.3M1156.5 906.7V919.5M1157.5 904.0V912.4M1158.5 904.0V911.9M1159.5 905.4V914.5M1160.5 901.3V910.0M1161.5 900.7V917.0M1162.5 902.3V911.0M1163.5 905.4V912.5M1164.5 898.4V918.3M1165.5 906.2V912.3M1166.5 896.1V910.6M1167.5 896.1V923.5M1168.5 908.1V914.9M1169.5 898.2V920.6M1170.5 897.6V912.5M1171.5 906.5V913.9M1172.5 909.3V918.8M1173.5 904.4V918.8M1174.5 901.9V916.1M1175.5 908.3V918.0M1176.5 903.6V918.0M1177.5 908.3V917.5M1178.5 900.8V915.6M1179.5 900.8V910.6M1180.5 905.0V910.8M1181.5 909.1V920.2M1182.5 904.2V922.8M1183.5 902.9V919.4M1184.5 913.7V916.4M1185.5 902.8V914.8M1186.5 907.0V914.8M1187.5 898.9V913.7M1188.5 898.6V917.1M1189.5 903.1V916.4M1190.5 901.2V912.6M1191.5 903.4V915.7M1192.5 903.4V914.9M1193.5 903.4V912.8M1194.5 905.1V914.4M1195.5 902.0V914.4M1196.5 901.5V912.2M1197.5 904.6V915.6M1198.5 901.8V915.5M1199.5 901.7V916.2M1200.5 900.4V913.0M1201.5 900.4V910.7M1202.5 902.6V916.4M1203.5 904.6V915.7M1204.5 905.7V914.4M1205.5 902.3V914.9M1206.5 907.4V914.9M1207.5 904.4V918.7M1208.5 897.5V916.0M1209.5 903.7V910.1M1210.5 906.7V914.1M1211.5 898.3V910.7M1212.5 904.8V914.3M1213.5 908.5V912.4M1214.5 896.1V910.7M1215.5 901.2V916.1M1216.5 901.4V918.4M1217.5 902.9V911.1M1218.5 899.6V907.8M1219.5 907.0V916.3M1220.5 904.2V918.1M1221.5 900.5V913.0M1222.5 902.1V917.6M1223.5 902.5V914.9M1224.5 904.8V915.2M1225.5 906.0V916.2M1226.5 906.5V916.6M1227.5 901.6V917.6M1228.5 896.3V916.3M1229.5 903.8V913.3M1230.5 904.6V913.3M1231.5 902.1V910.2M1232.5 902.1V911.4M1233.5 908.6V915.7M1234.5 900.5V915.7M1235.5 900.5V914.2M1236.5 902.5V909.0M1237.5 898.5V904.7M1238.5 902.0V914.7M1239.5 905.2V912.7M1240.5 906.1V915.6M1241.5 902.6V913.3M1242.5 902.2V913.4M1243.5 902.0V911.7M1244.5 901.8V912.7M1245.5 902.4V917.2M1246.5 903.5V908.3M1247.5 904.9V919.2M1248.5 905.8V913.2M1249.5 898.9V906.6M1250.5 900.5V913.3M1251.5 906.9V916.5M1252.5 905.1V916.5M1253.5 893.2V910.8M1254.5 898.9V912.1M1255.5 903.6V916.8M1256.5 907.9V920.3M1257.5 905.5V914.1M1258.5 903.7V920.9M1259.5 904.0V925.7M1260.5 900.4V908.0M1261.5 903.4V913.4M1262.5 906.1V913.4M1263.5 902.0V913.3M1264.5 899.8V914.7M1265.5 904.4V914.1M1266.5 902.9V915.6M1267.5 904.1V912.0M1268.5 904.1V915.9M1269.5 902.5V920.1M1270.5 907.6V920.1M1271.5 905.7V910.7M1272.5 905.9V917.1M1273.5 902.3V915.3M1274.5 907.5V915.3M1275.5 893.7V912.4M1276.5 903.8V913.1M1277.5 901.5V912.0M1278.5 901.8V911.9M1279.5 905.2V911.9M1280.5 900.9V910.5M1281.5 904.9V911.4M1282.5 898.8V910.7M1283.5 898.2V917.3M1284.5 898.2V912.6M1285.5 897.3V917.6M1286.5 902.7V917.6M1287.5 902.0V914.4M1288.5 902.5V909.4M1289.5 906.7V913.1M1290.5 900.2V909.0M1291.5 897.0V909.7M1292.5 902.9V909.7M1293.5 903.1V917.6M1294.5 895.2V913.4M1295.5 903.4V918.9M1296.5 896.5V916.0M1297.5 896.5V909.8M1298.5 901.3V911.5M1299.5 908.3V914.8M1300.5 905.3V912.3M1301.5 906.0V911.2M1302.5 901.6V912.5M1303.5 901.6V910.3M1304.5 905.7V915.8M1305.5 905.3V920.7M1306.5 902.2V920.7M1307.5 902.2V916.4M1308.5 902.2V918.7M1309.5 895.8V908.7M1310.5 895.8V918.4M1311.5 897.9V911.0M1312.5 902.9V918.9M1313.5 904.8V913.1M1314.5 903.7V913.1M1315.5 898.4V910.3M1316.5 897.5V912.5M1317.5 898.6V919.4M1318.5 905.5V919.2M1319.5 901.1V915.1M1320.5 898.2V916.0M1321.5 895.7V904.1M1322.5 897.2V910.2M1323.5 899.0V909.8M1324.5 901.2V918.6M1325.5 902.7V913.2M1326.5 896.8V912.1M1327.5 902.0V912.1M1328.5 901.2V907.9M1329.5 899.5V915.1M1330.5 900.0V915.7M1331.5 900.8V917.5M1332.5 892.2V912.5M1333.5 905.3V919.7M1334.5 903.6V915.0M1335.5 903.4V914.5M1336.5 897.5V911.0M1337.5 896.1V917.4M1338.5 902.0V912.4M1339.5 894.1V908.5M1340.5 907.3V912.2M1341.5 905.9V911.2M1342.5 895.8V911.9M1343.5 902.3V909.9M1344.5 902.3V913.0M1345.5 903.4V918.2M1346.5 901.4V919.2M1347.5 900.6V916.7M1348.5 906.9V915.6M1349.5 908.2V922.8M1350.5 902.8V916.1M1351.5 904.4V911.0M1352.5 902.1V912.0M1353.5 904.6V915.0M1354.5 901.5V915.0M1355.5 903.2V914.5M1356.5 901.9V908.8M1357.5 902.1V913.5M1358.5 901.5V910.7M1359.5 904.5V913.4M1360.5 900.8V911.4M1361.5 900.4V912.1M1362.5 901.9V908.9M1363.5 902.3V917.7M1364.5 898.5V910.1M1365.5 898.4V914.1M1366.5 898.4V909.5M1367.5 901.1V914.5M1368.5 901.1V921.6M1369.5 898.4V914.7M1370.5 898.4V922.0M1371.5 903.5V922.0M1372.5 903.0V912.2M1373.5 899.1V918.8M1374.5 891.5V913.3M1375.5 897.0V913.3M1376.5 902.5V921.2M1377.5 901.3V910.8M1378.5 908.3V913.5M1379.5 905.2V916.6M1380.5 903.7V914.4M1381.5 899.5V911.5M1382.5 895.9V913.0M1383.5 897.9V910.4M1384.5 903.5V914.7M1385.5 898.9V908.9M1386.5 899.1V907.8M1387.5 905.7V911.5M1388.5 903.1V917.0M1389.5 897.0V917.0M1390.5 900.5V917.0M1391.5 906.1V912.0M1392.5 906.3V918.1M1393.5 907.1V917.0M1394.5 897.5V910.8M1395.5 899.8V913.7M1396.5 900.2V912.8M1397.5 898.6V918.6M1398.5 904.2V915.0M1399.5 896.4V919.6M1400.5 896.4V912.2M1401.5 903.2V912.1M1402.5 904.6V913.6M1403.5 904.6V913.1M1404.5 903.7V914.0M1405.5 901.5V911.5M1406.5 901.3V915.1M1407.5 899.8V910.4M1408.5 894.9V908.8M1409.5 881.7V906.6M1410.5 898.0V939.3M1411.5 923.2V937.0M1412.5 923.2V936.7M1413.5 936.7V943.3M1414.5 943.3V948.8M1415.5 938.2V948.8M1416.5 927.6V938.2M1417.5 917.2V927.6M1418.5 910.2V917.2M1419.5 911.5V916.2M1420.5 916.2V919.4M1421.5 919.1V920.5M1422.5 919.9V921.3M1423.5 920.8V922.2M1424.5 921.5V922.9M1425.5 920.9V922.3M1426.5 919.9V921.3M1427.5 918.8V920.2M1428.5 919.0V920.4M1429.5 920.2V921.6M1430.5 921.5V922.9M1431.5 922.6V924.0M1432.5 921.9V923.3M1433.5 920.5V921.9M1434.5 919.1V920.5M1435.5 917.7V919.1M1436.5 916.4V917.8M1437.5 915.5V916.9M1438.5 914.8V916.2M1439.5 914.2V915.6M1440.5 913.6V915.0M1441.5 913.0V914.4M1442.5 912.5V913.9M1443.5 912.3V913.7M1444.5 912.1V913.5M1445.5 911.8V913.2M1446.5 911.7V913.1M1447.5 911.7V913.1M1448.5 911.7V913.1M1449.5 911.7V913.1M1450.5 911.7V913.1M1451.5 911.7V913.1M1452.5 911.7V913.1M1453.5 911.7V913.1M1454.5 911.7V913.1M1455.5 911.7V913.1M1456.5 911.7V913.1M1457.5 911.7V913.1M1458.5 911.7V913.1M1459.5 911.7V913.1M1460.5 911.7V913.1M1461.5 911.7V913.1M1462.5 911.7V913.1M1463.5 911.7V913.1M1464.5 911.7V913.1M1465.5 911.7V913.1M1466.5 911.7V913.1M1467.5 911.7V913.1M1468.5 911.7V913.1M1469.5 911.7V913.1M1470.5 911.7V913.1M1471.5 911.7V913.1M1472.5 911.7V913.1M1473.5 911.7V913.1M1474.5 911.7V913.1M1475.5 911.7V913.1M1476.5 911.7V913.1M1477.5 911.7V913.1M1478.5 911.7V913.1M1479.5 911.7V913.1M1480.5 911.7V913.1M1481.5 911.7V913.1M1482.5 911.7V913.1M1483.5 911.7V913.1M1484.5 911.7V913.1M1485.5 911.7V913.1M1486.5 911.7V913.1M1487.5 911.7V913.1M1488.5 911.7V913.1M1489.5 911.7V913.1M1490.5 911.7V913.1M1491.5 911.7V913.1M1492.5 911.7V913.1M1493.5 911.7V913.1M1494.5 911.7V913.1M1495.5 911.7V913.1M1496.5 911.7V913.1M1497.5 911.7V913.1M1498.5 911.7V913.1M1499.5 911.7V913.1M1500.5 911.7V913.1M1501.5 911.7V913.1M1502.5 911.7V913.1M1503.5 911.7V913.1M1504.5 911.7V913.1M1505.5 911.7V913.1M1506.5 911.7V913.1M1507.5 911.7V913.1M1508.5 911.7V913.1M1509.5 911.7V913.1M1510.5 911.7V913.1M1511.5 911.7V913.1M1512.5 911.7V913.1M1513.5 911.7V913.1M1514.5 911.7V913.1M1515.5 911.7V913.1M1516.5 911.7V913.1M1517.5 911.7V913.1M1518.5 911.7V913.1M1519.5 911.7V913.1M1520.5 911.7V913.1M1521.5 911.7V913.1M1522.5 911.7V913.1M1523.5 911.7V913.1M1524.5 911.7V913.1M1525.5 911.7V913.1M1526.5 911.7V913.1M1527.5 911.7V913.1M1528.5 911.7V913.1M1529.5 911.7V913.1M1530.5 911.7V913.1M1531.5 911.7V913.1M1532.5 911.7V913.1M1533.5 911.7V913.1M1534.5 911.7V913.1M1535.5 911.7V913.1M1536.5 911.7V913.1M1537.5 911.7V913.1M1538.5 911.7V913.1M1539.5 911.7V913.1M1540.5 911.7V913.1M1541.5 911.7V913.1M1542.5 911.7V913.1M1543.5 911.7V913.1M1544.5 911.7V913.1M1545.5 911.7V913.1M1546.5 911.7V913.1M1547.5 911.7V913.1M1548.5 911.7V913.1M1549.5 911.7V913.1M1550.5 911.7V913.1M1551.5 911.7V913.1M1552.5 911.7V913.1M1553.5 911.7V913.1M1554.5 911.7V913.1M1555.5 911.7V913.1M1556.5 911.7V913.1M1557.5 911.7V913.1M1558.5 911.7V913.1M1559.5 911.7V913.1M1560.5 911.7V913.1M1561.5 911.7V913.1M1562.5 911.7V913.1M1563.5 911.7V913.1M1564.5 911.7V913.1M1565.5 911.7V913.1M1566.5 911.7V913.1M1567.5 911.7V913.1M1568.5 911.7V913.1M1569.5 911.7V913.1M1570.5 911.7V913.1M1571.5 911.7V913.1M1572.5 911.7V913.1M1573.5 911.7V913.1M1574.5 911.7V913.1M1575.5 911.7V913.1M1576.5 911.7V913.1M1577.5 911.7V913.1M1578.5 911.7V913.1M1579.5 911.7V913.1M1580.5 911.7V913.1M1581.5 911.7V913.1M1582.5 911.7V913.1M1583.5 911.7V913.1M1584.5 911.7V913.1M1585.5 911.7V913.1M1586.5 911.7V913.1M1587.5 911.7V913.1M1588.5 911.7V913.1M1589.5 911.7V913.1M1590.5 911.7V913.1M1591.5 911.7V913.1M1592.5 911.7V913.1M1593.5 911.7V913.1M1594.5 911.7V913.1M1595.5 911.7V913.1M1596.5 911.7V913.1M1597.5 911.7V913.1M1598.5 911.7V913.1M1599.5 911.7V913.1M1600.5 911.7V913.1M1601.5 911.7V913.1M1602.5 911.7V913.1M1603.5 911.7V913.1M1604.5 911.7V913.1M1605.5 911.7V913.1M1606.5 911.7V913.1M1607.5 911.7V913.1M1608.5 911.7V913.1M1609.5 911.7V913.1M1610.5 911.7V913.1M1611.5 911.7V913.1M1612.5 911.7V913.1M1613.5 911.7V913.1M1614.5 911.7V913.1M1615.5 911.7V913.1M1616.5 911.7V913.1M1617.5 911.7V913.1M1618.5 911.7V913.1M1619.5 911.7V913.1M1620.5 911.7V913.1M1621.5 911.7V913.1M1622.5 911.7V913.1M1623.5 911.7V913.1M1624.5 911.7V913.1M1625.5 911.7V913.1M1626.5 911.7V913.1M1627.5 911.7V913.1M1628.5 911.7V913.1M1629.5 911.7V913.1M1630.5 911.7V913.1M1631.5 911.7V913.1M1632.5 911.7V913.1M1633.5 911.7V913.1M1634.5 911.7V913.1M1635.5 911.7V913.1M1636.5 911.7V913.1M1637.5 911.7V913.1M1638.5 911.7V913.1M1639.5 911.7V913.1M1640.5 911.7V913.1M1641.5 911.7V913.1M1642.5 911.7V913.1M1643.5 911.7V913.1M1644.5 911.7V913.1M1645.5 911.7V913.1M1646.5 911.7V913.1M1647.5 911.7V913.1M1648.5 911.7V913.1M1649.5 911.7V913.1M1650.5 911.7V913.1M1651.5 911.7V913.1M1652.5 911.7V913.1M1653.5 911.7V913.1M1654.5 911.7V913.1M1655.5 911.7V913.1M1656.5 911.7V913.1M1657.5 911.7V913.1M1658.5 911.7V913.1M1659.5 911.7V913.1M1660.5 911.7V913.1M1661.5 911.7V913.1M1662.5 911.7V913.1M1663.5 911.7V913.1M1664.5 911.7V913.1M1665.5 911.7V913.1M1666.5 911.7V913.1M1667.5 911.7V913.1M1668.5 911.7V913.1M1669.5 911.7V913.1M1670.5 911.7V913.1M1671.5 911.7V913.1M1672.5 911.7V913.1M1673.5 911.7V913.1M1674.5 911.7V913.1M1675.5 911.7V913.1M1676.5 911.7V913.1M1677.5 911.7V913.1M1678.5 911.7V913.1M1679.5 911.7V913.1M1680.5 911.7V913.1M1681.5 911.7V913.1M1682.5 911.7V913.1M1683.5 911.7V913.1M1684.5 911.7V913.1M1685.5 911.7V913.1M1686.5 911.7V913.1M1687.5 911.7V913.1M1688.5 911.7V913.1M1689.5 911.7V913.1M1690.5 911.7V913.1M1691.5 911.7V913.1M1692.5 911.7V913.1M1693.5 911.7V913.1M1694.5 911.7V913.1M1695.5 911.7V913.1M1696.5 911.7V913.1M1697.5 911.7V913.1M1698.5 911.7V913.1M1699.5 911.7V913.1M1700.5 911.7V913.1M1701.5 911.7V913.1M1702.5 911.7V913.1M1703.5 911.7V913.1M1704.5 911.7V913.1M1705.5 911.7V913.1M1706.5 911.7V913.1M1707.5 911.7V913.1M1708.5 911.7V913.1M1709.5 911.7V913.1M1710.5 911.7V913.1M1711.5 911.7V913.1M1712.5 911.7V913.1M1713.5 911.7V913.1M1714.5 911.7V913.1M1715.5 911.7V913.1M1716.5 911.7V913.1M1717.5 911.7V913.1M1718.5 911.7V913.1M1719.5 911.7V913.1M1720.5 911.7V913.1M1721.5 911.7V913.1M1722.5 911.7V913.1M1723.5 911.7V913.1M1724.5 911.7V913.1M1725.5 911.7V913.1M1726.5 911.7V913.1M1727.5 911.7V913.1M1728.5 911.7V913.1M1729.5 911.7V913.1M1730.5 911.7V913.1M1731.5 911.7V913.1M1732.5 911.7V913.1M1733.5 911.7V913.1M1734.5 911.7V913.1M1735.5 911.7V913.1M1736.5 911.7V913.1M1737.5 911.7V913.1M1738.5 911.7V913.1M1739.5 911.7V913.1M1740.5 911.7V913.1M1741.5 911.7V913.1M1742.5 911.7V913.1M1743.5 911.7V913.1M1744.5 911.7V913.1M1745.5 911.7V913.1M1746.5 911.7V913.1M1747.5 911.7V913.1M1748.5 911.7V913.1M1749.5 911.7V913.1M1750.5 911.7V913.1" fill="none" stroke="#8ec63a" stroke-width="1.5"/><line x1="3" y1="266.5" x2="1751" y2="266.5" stroke="#c4c4c4" stroke-width="1.6" stroke-dasharray="5.5 4.5"/>
<line x1="3" y1="500.3" x2="1751" y2="500.3" stroke="#c4c4c4" stroke-width="1.6" stroke-dasharray="5.5 4.5"/>
<line x1="3" y1="734.0" x2="1751" y2="734.0" stroke="#c4c4c4" stroke-width="1.6" stroke-dasharray="5.5 4.5"/>
<line x1="3" y1="913.0" x2="1751" y2="913.0" stroke="#c4c4c4" stroke-width="1.6" stroke-dasharray="5.5 4.5"/><g font-family='"Liberation Sans", sans-serif' font-size="13"><text x="1745" y="108.3" fill="#e6e020" text-anchor="end">3.5 V</text>
<text x="1745" y="131.3" fill="#e6e020" text-anchor="end">3 V</text>
<text x="1745" y="154.3" fill="#e6e020" text-anchor="end">2.5 V</text>
<text x="1745" y="177.3" fill="#e6e020" text-anchor="end">2 V</text>
<text x="1745" y="200.3" fill="#e6e020" text-anchor="end">1.5 V</text>
<text x="1745" y="223.3" fill="#e6e020" text-anchor="end">1 V</text>
<text x="1745" y="246.3" fill="#e6e020" text-anchor="end">500 mV</text>
<text x="1745" y="269.3" fill="#e6e020" text-anchor="end">0 V</text>
<text x="1745" y="318.8" fill="#22c0d0" text-anchor="end">4 V</text>
<text x="1745" y="341.9" fill="#22c0d0" text-anchor="end">3.5 V</text>
<text x="1745" y="365.0" fill="#22c0d0" text-anchor="end">3 V</text>
<text x="1745" y="388.1" fill="#22c0d0" text-anchor="end">2.5 V</text>
<text x="1745" y="411.2" fill="#22c0d0" text-anchor="end">2 V</text>
<text x="1745" y="434.2" fill="#22c0d0" text-anchor="end">1.5 V</text>
<text x="1745" y="457.3" fill="#22c0d0" text-anchor="end">1 V</text>
<text x="1745" y="480.4" fill="#22c0d0" text-anchor="end">500 mV</text>
<text x="1745" y="503.5" fill="#22c0d0" text-anchor="end">0 V</text>
<text x="1745" y="553.3" fill="#e2405e" text-anchor="end">4 V</text>
<text x="1745" y="576.5" fill="#e2405e" text-anchor="end">3.5 V</text>
<text x="1745" y="599.7" fill="#e2405e" text-anchor="end">3 V</text>
<text x="1745" y="622.9" fill="#e2405e" text-anchor="end">2.5 V</text>
<text x="1745" y="646.1" fill="#e2405e" text-anchor="end">2 V</text>
<text x="1745" y="669.3" fill="#e2405e" text-anchor="end">1.5 V</text>
<text x="1745" y="692.5" fill="#e2405e" text-anchor="end">1 V</text>
<text x="1745" y="715.7" fill="#e2405e" text-anchor="end">500 mV</text>
<text x="1745" y="738.9" fill="#e2405e" text-anchor="end">0 V</text>
<text x="1745" y="777.1" fill="#8cc43c" text-anchor="end">3 V</text>
<text x="1745" y="800.4" fill="#8cc43c" text-anchor="end">2.5 V</text>
<text x="1745" y="823.7" fill="#8cc43c" text-anchor="end">2 V</text>
<text x="1745" y="847.0" fill="#8cc43c" text-anchor="end">1.5 V</text>
<text x="1745" y="870.3" fill="#8cc43c" text-anchor="end">1 V</text>
<text x="1745" y="893.6" fill="#8cc43c" text-anchor="end">500 mV</text>
<text x="1745" y="916.9" fill="#8cc43c" text-anchor="end">0 V</text>
<text x="1745" y="940.2" fill="#8cc43c" text-anchor="end">-500 mV</text>
<text x="1745" y="963.5" fill="#8cc43c" text-anchor="end">-1 V</text>
<text x="1745" y="986.8" fill="#8cc43c" text-anchor="end">-1.5 V</text>
<text x="55.5" y="985.5" fill="#b4b4b4" text-anchor="middle">0 s</text>
<text x="230.5" y="985.5" fill="#b4b4b4" text-anchor="middle">4 ms</text>
<text x="405.5" y="985.5" fill="#b4b4b4" text-anchor="middle">8 ms</text>
<text x="580.5" y="985.5" fill="#b4b4b4" text-anchor="middle">12 ms</text>
<text x="754.5" y="985.5" fill="#b4b4b4" text-anchor="middle">16 ms</text>
<text x="929.5" y="985.5" fill="#b4b4b4" text-anchor="middle">20 ms</text>
<text x="1104.5" y="985.5" fill="#b4b4b4" text-anchor="middle">24 ms</text>
<text x="1279.5" y="985.5" fill="#b4b4b4" text-anchor="middle">28 ms</text>
<text x="1454.5" y="985.5" fill="#b4b4b4" text-anchor="middle">32 ms</text>
<text x="1629.5" y="985.5" fill="#b4b4b4" text-anchor="middle">36 ms</text></g><g font-family='"Liberation Sans", sans-serif'><path d="M8.5 253.0 h23.5 l9.5 12.5 l-9.5 12.5 h-23.5 q-2 0 -2 -2 v-21.0 q0 -2 2 -2z" fill="#1c1a06" stroke="#f4ee10" stroke-width="1.5" stroke-linejoin="round"/>
<text x="17.8" y="269.7" fill="#f4ee10" font-size="11.5" text-anchor="middle">C</text>
<text x="27.5" y="269.7" fill="#f4ee10" font-size="11.5" text-anchor="middle">1</text>
<text x="54" y="272.3" fill="#e6e020" font-size="19.5" textLength="114.5" lengthAdjust="spacingAndGlyphs">U_LP-bottom</text>
<path d="M8.5 487.0 h23.5 l9.5 12.5 l-9.5 12.5 h-23.5 q-2 0 -2 -2 v-21.0 q0 -2 2 -2z" fill="#061a1c" stroke="#1ec0d0" stroke-width="1.5" stroke-linejoin="round"/>
<text x="17.8" y="503.7" fill="#1ec0d0" font-size="11.5" text-anchor="middle">C</text>
<text x="27.5" y="503.7" fill="#1ec0d0" font-size="11.5" text-anchor="middle">2</text>
<text x="54" y="506.3" fill="#22c0d0" font-size="19.5" textLength="126.5" lengthAdjust="spacingAndGlyphs">U_BPP-bottom</text>
<path d="M8.5 721.0 h23.5 l9.5 12.5 l-9.5 12.5 h-23.5 q-2 0 -2 -2 v-21.0 q0 -2 2 -2z" fill="#1c080c" stroke="#e8204c" stroke-width="1.5" stroke-linejoin="round"/>
<text x="17.8" y="737.7" fill="#f0f0f0" font-size="11.5" text-anchor="middle">C</text>
<text x="27.5" y="737.7" fill="#f0f0f0" font-size="11.5" text-anchor="middle">3</text>
<text x="54" y="740.3" fill="#e2405e" font-size="19.5" textLength="101.0" lengthAdjust="spacingAndGlyphs">U_LP-upper</text>
<path d="M8.5 862.7 h23.5 l9.5 12.5 l-9.5 12.5 h-23.5 q-2 0 -2 -2 v-21.0 q0 -2 2 -2z" fill="#8ec63a" stroke="#8ec63a" stroke-width="1.5" stroke-linejoin="round"/>
<text x="17.8" y="879.4" fill="#102000" font-size="11.5" text-anchor="middle">C</text>
<text x="27.5" y="879.4" fill="#102000" font-size="11.5" text-anchor="middle">4</text>
<text x="54" y="882.0" fill="#8cc43c" font-size="19.5" textLength="113.5" lengthAdjust="spacingAndGlyphs">U_BPP-upper</text></g><path d="M45 57 h20 l-10 10z" fill="#f48c1c"/><path d="M45.8 67.8 h18.4 v19.4 h-5 l-4.2 6 l-4.2 -6 h-5z" fill="#000" stroke="#f48c1c" stroke-width="1.8"/><text x="55" y="83.3" fill="#f48c1c" font-size="15" font-weight="bold" text-anchor="middle" font-family='"Liberation Sans", sans-serif'>T</text><path d="M1710 64 h31 q3 0 3 3 v30z" fill="#555"/><circle cx="1737" cy="70.5" r="3.8" fill="none" stroke="#aaa" stroke-width="1.4"/><line x1="1734.2" y1="73.5" x2="1728.5" y2="79.5" stroke="#aaa" stroke-width="2.6" stroke-linecap="round"/></svg>

<!-- overview bar -->
<svg class="a" style="left:0;top:0" width="1920" height="60">
<path d="M593 36.6 H586.6 V52.4 H593" fill="none" stroke="#e6e6e6" stroke-width="1.4"/>
<path d="M1161 36.6 H1167.4 V52.4 H1161" fill="none" stroke="#e6e6e6" stroke-width="1.4"/>
<rect x="587" y="44" width="580" height="2" fill="#bdbdbd"/>
<path d="M596 33 h15 l-7.5 5.2z" fill="#f48c1c"/>
<path d="M597.3 40.6 h12.4 v11.8 h-3.6 l-2.6 3.6 l-2.6 -3.6 h-3.6z" fill="#000" stroke="#f48c1c" stroke-width="1.6"/>
<text x="603.5" y="50.8" fill="#f48c1c" font-size="11" font-weight="bold" text-anchor="middle" font-family='"Liberation Sans", sans-serif'>T</text>
</svg>

<!-- three dots -->
<div class="a" style="left:1760px;top:501px;width:4px;height:4px;border-radius:2px;background:#c4c4c4"></div>
<div class="a" style="left:1760px;top:510px;width:4px;height:4px;border-radius:2px;background:#c4c4c4"></div>
<div class="a" style="left:1760px;top:518px;width:4px;height:4px;border-radius:2px;background:#c4c4c4"></div>

<!-- right panel -->
<div class="a rpanel"></div>
<svg class="a" style="left:0;top:0" width="1920" height="30"><g fill="#fff">
<path d="M1785.9 4H1803.8L1800.9 9H1796V25.8H1790.7V9H1785.9Z"/>
<circle cx="1806" cy="17.8" r="8.1"/>
<path d="M1815 4H1820V25.8H1815Z"/>
<path d="M1824.2 16.5L1830.2 25.8H1822.2Z"/>
<path d="M1831.5 25.8V9.2L1835.8 4.3H1836.2V9.2H1838.6V14.3H1836.2V25.8Z"/>
<path d="M1838 25.7V10.1H1844.5V12Q1846 10.1 1848.3 10.1V14.6Q1844.5 14.6 1844.5 18V25.7Z"/>
<path d="M1866.1 25.7V9.9H1870.8V11.2Q1872.4 9.8 1874.6 9.8Q1879.9 9.8 1879.9 15.5V25.7H1875.2V16.2Q1875.2 14.2 1873 14.2Q1870.8 14.2 1870.8 16.4V25.7Z"/>
<path d="M1881.9 10.25H1886.8V25.7H1881.9Z"/><circle cx="1884.35" cy="6.5" r="2.6"/>
<path d="M1887.8 10.25H1893.4L1895.5 13.5L1897.6 10.25H1903.3L1898.4 17.9L1903.3 25.7H1897.6L1895.5 22.3L1893.4 25.7H1887.8L1892.6 17.9Z"/>
</g>
<circle cx="1856.5" cy="17.9" r="5.9" fill="none" stroke="#fff" stroke-width="4.7"/>
<path d="M1803.2 15.4Q1806 12.8 1808.8 15.4Z" fill="#2d2d2d"/>
<path d="M1803.2 19.6H1815V21.1H1808.8Q1806 23 1803.2 21.1Z" fill="#2d2d2d"/>
<path d="M1814.8 25.9H1819.7L1830.9 9.2H1825.9Z" fill="#1ec3e6"/>
</svg>
<div class="a" style="left:1769px;top:30px;width:151px;text-align:center;color:#e6e6e6;font-size:15px;font-weight:bold">Add New...</div>
<div class="a btn" style="left:1777px;top:54px">Cursors</div>
<div class="a btn" style="left:1849px;top:54px">Callout</div>
<div class="a btn" style="left:1777px;top:100px">Measure</div>
<div class="a btn" style="left:1849px;top:100px">Search</div>
<div class="a btn" style="left:1777px;top:146px">Results<br>Table</div>
<div class="a btn" style="left:1849px;top:146px">Plot</div>
<div class="a sep" style="left:1773px;top:189px;width:144px"></div>
<div class="a btn" style="left:1777px;top:196px"><svg width="30" height="28" viewBox="0 0 30 28"><rect x="3.5" y="2.5" width="22" height="19" fill="none" stroke="#cfcfcf" stroke-width="1.6" stroke-dasharray="2.5 2"/><circle cx="14.5" cy="11" r="5" fill="none" stroke="#e0e0e0" stroke-width="1.8"/><line x1="11" y1="14.5" x2="7" y2="18.5" stroke="#e0e0e0" stroke-width="2.4" stroke-linecap="round"/><path d="M19 15 L26 21.5 L22.8 22 L24.5 26 L23 26.7 L21.3 22.8 L19 25Z" fill="#d8d8d8"/></svg></div>
<div class="a btn" style="left:1849px;top:196px">More...</div>
<div class="a sep" style="left:1773px;top:241px;width:144px"></div>

<!-- bottom bar -->
<div class="a ch" style="left:3px"><div class="chh" style="background:#4c4622;color:#ece41e">Ch 1</div><div class="a" style="left:7px;top:23px;color:#111;font-size:15px;line-height:18px;white-space:nowrap">500 mV/div</div><div class="a" style="left:7px;top:43px;color:#111;font-size:15px;line-height:18px">1 MΩ</div><div class="a" style="left:7px;top:61px;color:#111;font-size:15px;line-height:18px">1 MHz</div><div class="bw">B<sub>w</sub></div></div>
<div class="a ch" style="left:98px"><div class="chh" style="background:#1e3d41;color:#22c4d4">Ch 2</div><div class="a" style="left:7px;top:23px;color:#111;font-size:15px;line-height:18px;white-space:nowrap">500 mV/div</div><div class="a" style="left:7px;top:43px;color:#111;font-size:15px;line-height:18px">1 MΩ</div><div class="a" style="left:7px;top:61px;color:#111;font-size:15px;line-height:18px">1 MHz</div><div class="bw">B<sub>w</sub></div></div>
<div class="a ch" style="left:193px"><div class="chh" style="background:#4a2529;color:#f4f4f4">Ch 3</div><div class="a" style="left:7px;top:23px;color:#111;font-size:15px;line-height:18px;white-space:nowrap">500 mV/div</div><div class="a" style="left:7px;top:43px;color:#111;font-size:15px;line-height:18px">1 MΩ</div><div class="a" style="left:7px;top:61px;color:#111;font-size:15px;line-height:18px">1 MHz</div><div class="bw">B<sub>w</sub></div></div>
<div class="a ch" style="left:288px"><div class="chh" style="background:#8ed032;color:#111">Ch 4</div><div class="a" style="left:7px;top:23px;color:#111;font-size:15px;line-height:18px;white-space:nowrap">500 mV/div</div><div class="a" style="left:7px;top:43px;color:#111;font-size:15px;line-height:18px">1 MΩ</div><div class="a" style="left:7px;top:61px;color:#111;font-size:15px;line-height:18px">1 MHz</div><div class="bw">B<sub>w</sub></div></div>

<div class="a vsep" style="left:1116px"></div>
<div class="a addb" style="left:1127px"><div class="bar" style="background:#f49020"></div><div class="t">Add<br>New<br>Math</div></div>
<div class="a addb" style="left:1172px"><div class="bar" style="background:#c8cadc"></div><div class="t">Add<br>New<br>Ref</div></div>
<div class="a addb" style="left:1217px"><div class="bar" style="background:#c850f4"></div><div class="t">Add<br>New<br>Bus</div></div>
<div class="a vsep" style="left:1267px"></div>

<div class="a pan" style="left:1278px;width:200px"><div class="panh">Horizontal</div>
<div class="panb"><div class="a" style="left:6px;top:2px">4 ms/div<br>SR: 2.5 MS/s<br>RL: 100 kpts</div><div class="a" style="left:112px;top:2px">40 ms<br>400 ns/pt<br><svg style="position:relative;top:1px;left:1px" width="11" height="14"><path d="M1 1H10V9.5H7.3L5.5 12.5L3.7 9.5H1Z" fill="#000" stroke="#f48c1c" stroke-width="1.5"/><path d="M3.2 3.2H7.8V4.6H6.2V8.5H4.8V4.6H3.2Z" fill="#fff"/></svg> 3%</div></div></div>
<div class="a pan" style="left:1483px;width:160px"><div class="panh">Trigger</div>
<div class="panb"><div class="a" style="left:6px;top:2px">Aux</div><svg class="a" style="left:67px;top:8px" width="18" height="12"><path d="M0.5 10.5H4L11 1.5H16" fill="none" stroke="#303078" stroke-width="1.3"/></svg><div class="a" style="left:94px;top:2px">1 V</div></div></div>
<div class="a pan" style="left:1648px;width:150px"><div class="panh">Acquisition</div>
<div class="panb"><div class="a" style="left:6px;top:2px;white-space:nowrap">Manual,<span style="position:absolute;left:82px">Analyze</span><br>High Res: 16 bits<br>Single: 1 /1</div></div></div>
<div class="a vsep" style="left:1810px"></div>
<div class="a" style="left:1822px;top:998px;width:89px;height:36px;border-radius:7px;background:#ff1e26;border:1px solid #6a6a6a;color:#fff;font-weight:bold;font-size:14px;line-height:33px;text-align:center">Stopped</div>
<div class="a" style="left:1822px;top:1042px;width:89px;height:36px;border-radius:5px;background:#c8c8c8;color:#111;font-size:15px;line-height:17px;text-align:center;padding-top:1px">21 May 2025<br>7:06:06 AM</div>
</body></html>
